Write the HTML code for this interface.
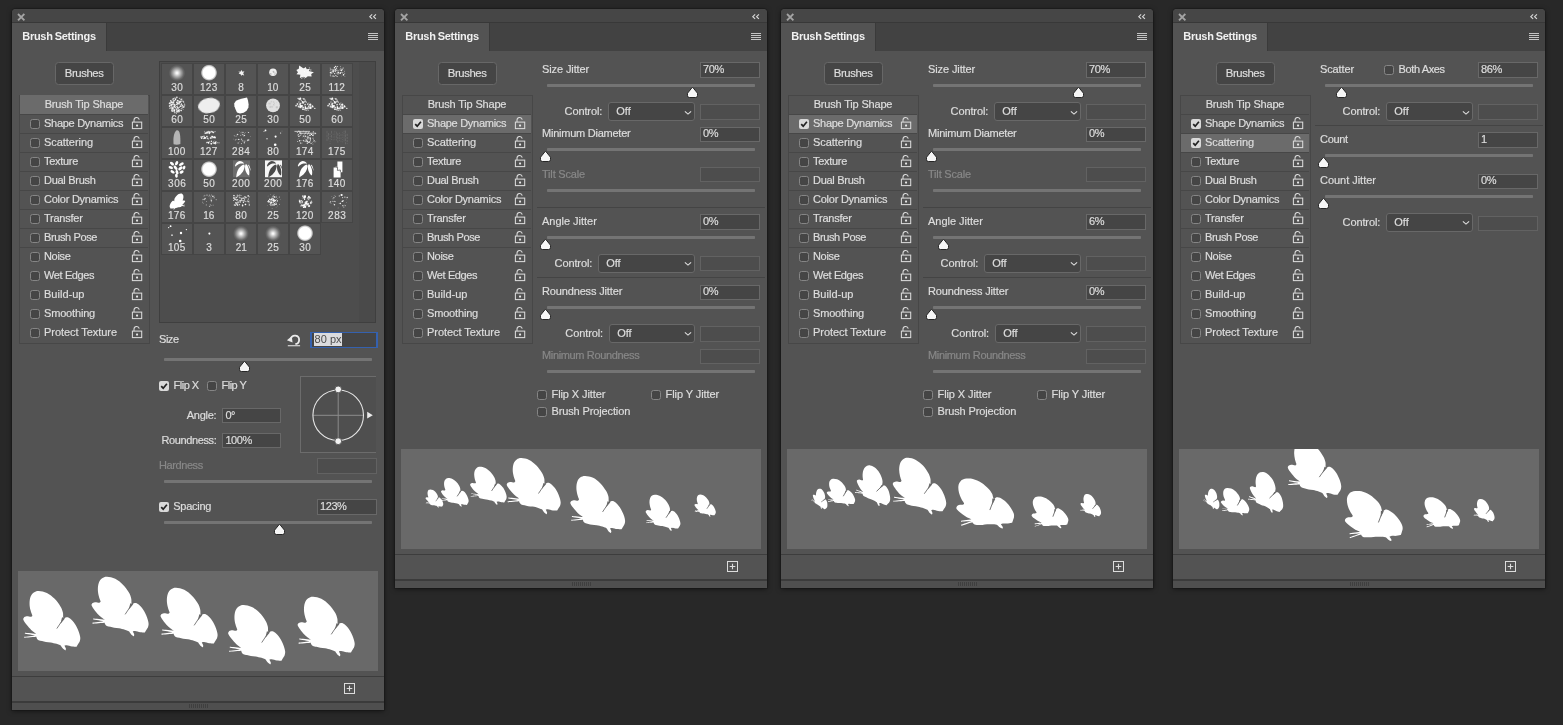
<!DOCTYPE html><html><head><meta charset="utf-8"><title>Brush Settings</title><style>
html,body{margin:0;padding:0}body{width:1563px;height:725px;background:#282828;overflow:hidden;position:relative;font-family:"Liberation Sans",sans-serif;font-size:11px}.a,.t{position:absolute;display:block}div.a{box-sizing:content-box}.t{white-space:nowrap;line-height:13px;-webkit-text-stroke:0.2px;opacity:.999}svg{overflow:visible}
</style></head><body>
<svg width="0" height="0" style="position:absolute"><defs><path id="bf" fill="#fff" d="M-13.00 -29.70C-10.82 -29.62 -7.45 -29.00 -4.80 -27.70C-2.15 -26.40 0.65 -24.15 2.90 -21.90C5.15 -19.65 7.33 -16.45 8.70 -14.20C10.07 -11.95 10.65 -10.10 11.10 -8.40C11.55 -6.70 11.32 -5.13 11.40 -4.00C11.48 -2.87 11.60 -1.60 11.60 -1.60C11.60 -1.60 13.68 -3.40 14.80 -3.50C15.92 -3.60 16.90 -3.32 18.30 -2.20C19.70 -1.08 21.75 1.02 23.20 3.20C24.65 5.38 26.12 8.65 27.00 10.90C27.88 13.15 28.33 15.10 28.50 16.70C28.67 18.30 28.32 19.47 28.00 20.50C27.68 21.53 27.13 22.00 26.60 22.90C26.07 23.80 24.80 25.90 24.80 25.90C24.80 25.90 21.93 25.93 20.30 25.70C18.67 25.47 16.25 24.63 15.00 24.50C13.75 24.37 12.80 24.90 12.80 24.90C12.80 24.90 14.07 27.30 14.20 28.10C14.33 28.90 13.60 29.70 13.60 29.70C13.60 29.70 12.17 28.93 11.40 28.10C10.63 27.27 9.00 24.70 9.00 24.70C9.00 24.70 6.47 23.60 4.80 23.10C3.13 22.60 0.77 22.02 -1.00 21.70C-2.77 21.38 -4.35 21.43 -5.80 21.20C-7.25 20.97 -8.47 20.60 -9.70 20.30C-10.93 20.00 -12.33 19.83 -13.20 19.40C-14.07 18.97 -14.53 18.25 -14.90 17.70C-15.27 17.15 -15.40 16.10 -15.40 16.10C-15.40 16.10 -27.50 17.10 -27.50 17.10C-27.50 17.10 -27.60 16.10 -27.60 16.10C-27.60 16.10 -16.20 14.70 -16.20 14.70C-16.20 14.70 -26.90 13.00 -26.90 13.00C-26.90 13.00 -26.80 12.00 -26.80 12.00C-26.80 12.00 -15.20 13.10 -15.20 13.10C-15.20 13.10 -18.65 10.90 -20.30 9.40C-21.95 7.90 -23.77 5.78 -25.10 4.10C-26.43 2.42 -27.83 0.50 -28.30 -0.70C-28.77 -1.90 -28.43 -2.48 -27.90 -3.10C-27.37 -3.72 -26.32 -4.27 -25.10 -4.40C-23.88 -4.53 -21.55 -3.75 -20.60 -3.90C-19.65 -4.05 -19.40 -5.30 -19.40 -5.30C-19.40 -5.30 -20.73 -8.43 -21.20 -10.40C-21.67 -12.37 -22.20 -14.85 -22.20 -17.10C-22.20 -19.35 -21.92 -22.05 -21.20 -23.90C-20.48 -25.75 -19.27 -27.23 -17.90 -28.20C-16.53 -29.17 -15.18 -29.78 -13.00 -29.70Z"/><radialGradient id="sg"><stop offset="0" stop-color="#fff" stop-opacity="1"/><stop offset=".12" stop-color="#fff" stop-opacity=".92"/><stop offset=".45" stop-color="#fff" stop-opacity=".52"/><stop offset=".8" stop-color="#fff" stop-opacity=".12"/><stop offset="1" stop-color="#fff" stop-opacity="0"/></radialGradient><radialGradient id="hg"><stop offset="0" stop-color="#fff"/><stop offset=".72" stop-color="#fff"/><stop offset=".88" stop-color="#fff" stop-opacity=".6"/><stop offset="1" stop-color="#fff" stop-opacity="0"/></radialGradient><filter id="b2" x="-5%" y="-20%" width="110%" height="140%"><feGaussianBlur stdDeviation=".35"/></filter><filter id="b1" x="-20%" y="-20%" width="140%" height="140%"><feGaussianBlur stdDeviation=".55"/></filter></defs></svg>
<div class="a" style="left:12.45px;top:9px;width:371.1px;height:701.1px;background:#535353;border-radius:4px 4px 0 0;box-shadow:0 1px 5px rgba(0,0,0,.55),0 0 0 1px rgba(30,30,30,.55);"></div>
<div class="a" style="left:12.45px;top:9px;width:371.1px;height:13px;background:#464646;border-radius:4px 4px 0 0;"></div>
<div class="a" style="left:12.45px;top:22px;width:371.1px;height:1px;background:#383838;"></div>
<div class="a" style="left:12.45px;top:23px;width:371.1px;height:28.0px;background:#424242;"></div>
<div class="a" style="left:12.45px;top:23px;width:93.55px;height:28.0px;background:#535353;"></div>
<div class="a" style="left:106px;top:23px;width:1px;height:28.0px;background:#3a3a3a;"></div>
<span class="t" style="top:30.06px;color:#f0f0f0;letter-spacing:-0.3px;font-size:11px;font-weight:bold;left:22.3px;-webkit-text-stroke:0;word-spacing:-0.6px;">Brush Settings</span>
<svg class="a" style="left:17.8px;top:13.9px" width="6.4" height="6.4" viewBox="0 0 6.4 6.4"><path d="M0.7 0.7 L5.7 5.7 M5.7 0.7 L0.7 5.7" stroke="#a4a4a4" stroke-width="1.9" stroke-linecap="square" fill="none"/></svg>
<svg class="a" style="left:369px;top:14.1px" width="7.9" height="5.3" viewBox="0 0 9 6"><path d="M3.6 0.4 L0.9 3 L3.6 5.6 M7.9 0.4 L5.2 3 L7.9 5.6" stroke="#d8d8d8" stroke-width="1.3" fill="none"/></svg>
<div class="a" style="left:368px;top:33px;width:10px;height:1px;background:#c4c4c4;"></div>
<div class="a" style="left:368px;top:35px;width:10px;height:1px;background:#c4c4c4;"></div>
<div class="a" style="left:368px;top:37px;width:10px;height:1px;background:#c4c4c4;"></div>
<div class="a" style="left:368px;top:39px;width:10px;height:1px;background:#c4c4c4;"></div>
<div class="a" style="left:54.6px;top:61.8px;width:57.2px;height:21px;background:#454545;border:1px solid #676767;border-radius:3.5px;"></div>
<span class="t" style="top:66.97px;color:#dddddd;letter-spacing:-0.4px;font-size:11.3px;left:54.599999999999994px;width:59px;text-align:center;">Brushes</span>
<div class="a" style="left:19px;top:94.5px;width:129px;height:247.5px;background:transparent;border:1px solid #474747;"></div>
<div class="a" style="left:20px;top:95px;width:128px;height:19px;background:#6b6b6b;"></div>
<span class="t" style="top:98.06px;color:#dddddd;letter-spacing:-0.18px;font-size:11px;left:20.0px;width:128px;text-align:center;">Brush Tip Shape</span>
<div class="a" style="left:20px;top:113.5px;width:128px;height:1px;background:#474747;"></div>
<svg class="a" style="left:30px;top:118.5px" width="10" height="10" viewBox="0 0 10 10"><rect x="0.5" y="0.5" width="9" height="9" rx="2" fill="#454545" stroke="#858585" stroke-width="1"/></svg>
<span class="t" style="top:117.06px;color:#dddddd;letter-spacing:-0.28px;font-size:11px;left:44px;">Shape Dynamics</span>
<svg class="a" style="left:131px;top:117px" width="12" height="13" viewBox="0 0 12 13"><path d="M3 5 V3.3 A2.65 2.65 0 0 1 8.25 2.7" fill="none" stroke="#dadada" stroke-width="1.05"/><rect x="1.4" y="5.1" width="9.3" height="6.5" fill="none" stroke="#dadada" stroke-width="1.05"/><rect x="5.05" y="7.4" width="2" height="2" rx=".5" fill="#e6e6e6"/></svg>
<div class="a" style="left:20px;top:132.5px;width:128px;height:1px;background:#474747;"></div>
<svg class="a" style="left:30px;top:137.5px" width="10" height="10" viewBox="0 0 10 10"><rect x="0.5" y="0.5" width="9" height="9" rx="2" fill="#454545" stroke="#858585" stroke-width="1"/></svg>
<span class="t" style="top:136.06px;color:#dddddd;letter-spacing:-0.05px;font-size:11px;left:44px;">Scattering</span>
<svg class="a" style="left:131px;top:136px" width="12" height="13" viewBox="0 0 12 13"><path d="M3 5 V3.3 A2.65 2.65 0 0 1 8.25 2.7" fill="none" stroke="#dadada" stroke-width="1.05"/><rect x="1.4" y="5.1" width="9.3" height="6.5" fill="none" stroke="#dadada" stroke-width="1.05"/><rect x="5.05" y="7.4" width="2" height="2" rx=".5" fill="#e6e6e6"/></svg>
<div class="a" style="left:20px;top:151.5px;width:128px;height:1px;background:#474747;"></div>
<svg class="a" style="left:30px;top:156.5px" width="10" height="10" viewBox="0 0 10 10"><rect x="0.5" y="0.5" width="9" height="9" rx="2" fill="#454545" stroke="#858585" stroke-width="1"/></svg>
<span class="t" style="top:155.06px;color:#dddddd;letter-spacing:-0.29px;font-size:11px;left:44px;">Texture</span>
<svg class="a" style="left:131px;top:155px" width="12" height="13" viewBox="0 0 12 13"><path d="M3 5 V3.3 A2.65 2.65 0 0 1 8.25 2.7" fill="none" stroke="#dadada" stroke-width="1.05"/><rect x="1.4" y="5.1" width="9.3" height="6.5" fill="none" stroke="#dadada" stroke-width="1.05"/><rect x="5.05" y="7.4" width="2" height="2" rx=".5" fill="#e6e6e6"/></svg>
<div class="a" style="left:20px;top:170.5px;width:128px;height:1px;background:#474747;"></div>
<svg class="a" style="left:30px;top:175.5px" width="10" height="10" viewBox="0 0 10 10"><rect x="0.5" y="0.5" width="9" height="9" rx="2" fill="#454545" stroke="#858585" stroke-width="1"/></svg>
<span class="t" style="top:174.06px;color:#dddddd;letter-spacing:-0.29px;font-size:11px;left:44px;">Dual Brush</span>
<svg class="a" style="left:131px;top:174px" width="12" height="13" viewBox="0 0 12 13"><path d="M3 5 V3.3 A2.65 2.65 0 0 1 8.25 2.7" fill="none" stroke="#dadada" stroke-width="1.05"/><rect x="1.4" y="5.1" width="9.3" height="6.5" fill="none" stroke="#dadada" stroke-width="1.05"/><rect x="5.05" y="7.4" width="2" height="2" rx=".5" fill="#e6e6e6"/></svg>
<div class="a" style="left:20px;top:189.5px;width:128px;height:1px;background:#474747;"></div>
<svg class="a" style="left:30px;top:194.5px" width="10" height="10" viewBox="0 0 10 10"><rect x="0.5" y="0.5" width="9" height="9" rx="2" fill="#454545" stroke="#858585" stroke-width="1"/></svg>
<span class="t" style="top:193.06px;color:#dddddd;letter-spacing:-0.24px;font-size:11px;left:44px;">Color Dynamics</span>
<svg class="a" style="left:131px;top:193px" width="12" height="13" viewBox="0 0 12 13"><path d="M3 5 V3.3 A2.65 2.65 0 0 1 8.25 2.7" fill="none" stroke="#dadada" stroke-width="1.05"/><rect x="1.4" y="5.1" width="9.3" height="6.5" fill="none" stroke="#dadada" stroke-width="1.05"/><rect x="5.05" y="7.4" width="2" height="2" rx=".5" fill="#e6e6e6"/></svg>
<div class="a" style="left:20px;top:208.5px;width:128px;height:1px;background:#474747;"></div>
<svg class="a" style="left:30px;top:213.5px" width="10" height="10" viewBox="0 0 10 10"><rect x="0.5" y="0.5" width="9" height="9" rx="2" fill="#454545" stroke="#858585" stroke-width="1"/></svg>
<span class="t" style="top:212.06px;color:#dddddd;letter-spacing:-0.25px;font-size:11px;left:44px;">Transfer</span>
<svg class="a" style="left:131px;top:212px" width="12" height="13" viewBox="0 0 12 13"><path d="M3 5 V3.3 A2.65 2.65 0 0 1 8.25 2.7" fill="none" stroke="#dadada" stroke-width="1.05"/><rect x="1.4" y="5.1" width="9.3" height="6.5" fill="none" stroke="#dadada" stroke-width="1.05"/><rect x="5.05" y="7.4" width="2" height="2" rx=".5" fill="#e6e6e6"/></svg>
<div class="a" style="left:20px;top:227.5px;width:128px;height:1px;background:#474747;"></div>
<svg class="a" style="left:30px;top:232.5px" width="10" height="10" viewBox="0 0 10 10"><rect x="0.5" y="0.5" width="9" height="9" rx="2" fill="#454545" stroke="#858585" stroke-width="1"/></svg>
<span class="t" style="top:231.06px;color:#dddddd;letter-spacing:-0.39px;font-size:11px;left:44px;">Brush Pose</span>
<svg class="a" style="left:131px;top:231px" width="12" height="13" viewBox="0 0 12 13"><path d="M3 5 V3.3 A2.65 2.65 0 0 1 8.25 2.7" fill="none" stroke="#dadada" stroke-width="1.05"/><rect x="1.4" y="5.1" width="9.3" height="6.5" fill="none" stroke="#dadada" stroke-width="1.05"/><rect x="5.05" y="7.4" width="2" height="2" rx=".5" fill="#e6e6e6"/></svg>
<div class="a" style="left:20px;top:246.5px;width:128px;height:1px;background:#474747;"></div>
<svg class="a" style="left:30px;top:251.5px" width="10" height="10" viewBox="0 0 10 10"><rect x="0.5" y="0.5" width="9" height="9" rx="2" fill="#454545" stroke="#858585" stroke-width="1"/></svg>
<span class="t" style="top:250.06px;color:#dddddd;letter-spacing:-0.33px;font-size:11px;left:44px;">Noise</span>
<svg class="a" style="left:131px;top:250px" width="12" height="13" viewBox="0 0 12 13"><path d="M3 5 V3.3 A2.65 2.65 0 0 1 8.25 2.7" fill="none" stroke="#dadada" stroke-width="1.05"/><rect x="1.4" y="5.1" width="9.3" height="6.5" fill="none" stroke="#dadada" stroke-width="1.05"/><rect x="5.05" y="7.4" width="2" height="2" rx=".5" fill="#e6e6e6"/></svg>
<svg class="a" style="left:30px;top:270.5px" width="10" height="10" viewBox="0 0 10 10"><rect x="0.5" y="0.5" width="9" height="9" rx="2" fill="#454545" stroke="#858585" stroke-width="1"/></svg>
<span class="t" style="top:269.06px;color:#dddddd;letter-spacing:-0.38px;font-size:11px;left:44px;">Wet Edges</span>
<svg class="a" style="left:131px;top:269px" width="12" height="13" viewBox="0 0 12 13"><path d="M3 5 V3.3 A2.65 2.65 0 0 1 8.25 2.7" fill="none" stroke="#dadada" stroke-width="1.05"/><rect x="1.4" y="5.1" width="9.3" height="6.5" fill="none" stroke="#dadada" stroke-width="1.05"/><rect x="5.05" y="7.4" width="2" height="2" rx=".5" fill="#e6e6e6"/></svg>
<svg class="a" style="left:30px;top:289.5px" width="10" height="10" viewBox="0 0 10 10"><rect x="0.5" y="0.5" width="9" height="9" rx="2" fill="#454545" stroke="#858585" stroke-width="1"/></svg>
<span class="t" style="top:288.06px;color:#dddddd;letter-spacing:0.01px;font-size:11px;left:44px;">Build-up</span>
<svg class="a" style="left:131px;top:288px" width="12" height="13" viewBox="0 0 12 13"><path d="M3 5 V3.3 A2.65 2.65 0 0 1 8.25 2.7" fill="none" stroke="#dadada" stroke-width="1.05"/><rect x="1.4" y="5.1" width="9.3" height="6.5" fill="none" stroke="#dadada" stroke-width="1.05"/><rect x="5.05" y="7.4" width="2" height="2" rx=".5" fill="#e6e6e6"/></svg>
<svg class="a" style="left:30px;top:308.5px" width="10" height="10" viewBox="0 0 10 10"><rect x="0.5" y="0.5" width="9" height="9" rx="2" fill="#454545" stroke="#858585" stroke-width="1"/></svg>
<span class="t" style="top:307.06px;color:#dddddd;letter-spacing:-0.17px;font-size:11px;left:44px;">Smoothing</span>
<svg class="a" style="left:131px;top:307px" width="12" height="13" viewBox="0 0 12 13"><path d="M3 5 V3.3 A2.65 2.65 0 0 1 8.25 2.7" fill="none" stroke="#dadada" stroke-width="1.05"/><rect x="1.4" y="5.1" width="9.3" height="6.5" fill="none" stroke="#dadada" stroke-width="1.05"/><rect x="5.05" y="7.4" width="2" height="2" rx=".5" fill="#e6e6e6"/></svg>
<svg class="a" style="left:30px;top:327.5px" width="10" height="10" viewBox="0 0 10 10"><rect x="0.5" y="0.5" width="9" height="9" rx="2" fill="#454545" stroke="#858585" stroke-width="1"/></svg>
<span class="t" style="top:326.06px;color:#dddddd;letter-spacing:-0.05px;font-size:11px;left:44px;">Protect Texture</span>
<svg class="a" style="left:131px;top:326px" width="12" height="13" viewBox="0 0 12 13"><path d="M3 5 V3.3 A2.65 2.65 0 0 1 8.25 2.7" fill="none" stroke="#dadada" stroke-width="1.05"/><rect x="1.4" y="5.1" width="9.3" height="6.5" fill="none" stroke="#dadada" stroke-width="1.05"/><rect x="5.05" y="7.4" width="2" height="2" rx=".5" fill="#e6e6e6"/></svg>
<div class="a" style="left:18px;top:571px;width:360px;height:100px;background:#696969;"></div>
<div class="a" style="left:12.45px;top:676px;width:371.1px;height:1px;background:#3d3d3d;"></div>
<div class="a" style="left:12.45px;top:701px;width:371.1px;height:2px;background:#3b3b3b;"></div>
<div class="a" style="left:12.45px;top:703px;width:371.1px;height:7.1px;background:#4f4f4f;"></div>
<div class="a" style="left:188.5px;top:704px;width:1px;height:4px;background:#3f3f3f;"></div>
<div class="a" style="left:190.5px;top:704px;width:1px;height:4px;background:#3f3f3f;"></div>
<div class="a" style="left:192.5px;top:704px;width:1px;height:4px;background:#3f3f3f;"></div>
<div class="a" style="left:194.5px;top:704px;width:1px;height:4px;background:#3f3f3f;"></div>
<div class="a" style="left:196.5px;top:704px;width:1px;height:4px;background:#3f3f3f;"></div>
<div class="a" style="left:198.5px;top:704px;width:1px;height:4px;background:#3f3f3f;"></div>
<div class="a" style="left:200.5px;top:704px;width:1px;height:4px;background:#3f3f3f;"></div>
<div class="a" style="left:202.5px;top:704px;width:1px;height:4px;background:#3f3f3f;"></div>
<div class="a" style="left:204.5px;top:704px;width:1px;height:4px;background:#3f3f3f;"></div>
<div class="a" style="left:206.5px;top:704px;width:1px;height:4px;background:#3f3f3f;"></div>
<svg class="a" style="left:343.6px;top:683px" width="11" height="11" viewBox="0 0 11 11"><rect x="0.5" y="0.5" width="10" height="10" fill="none" stroke="#dcdcdc" stroke-width="1"/><path d="M5.5 2.7 V8.3 M2.7 5.5 H8.3" stroke="#dcdcdc" stroke-width="1.1"/></svg>
<div class="a" style="left:159px;top:61px;width:215px;height:260px;background:#4d4d4d;border:1px solid #3f3f3f;"></div>
<div class="a" style="left:358.5px;top:62px;width:16.5px;height:260px;background:#4a4a4a;"></div>
<div class="a" style="left:162px;top:64px;width:30px;height:30px;background:#545454;box-shadow:0 0 0 1px #454545;"></div>
<span class="t" style="top:81.29px;color:#dcdcdc;letter-spacing:0.5px;font-size:10px;left:162.2px;width:30px;text-align:center;">30</span>
<svg class="a" style="left:162px;top:64.6px" width="30" height="18" viewBox="0 0 30 18"><circle cx="15" cy="8" r="8.3" fill="url(#sg)"/></svg>
<div class="a" style="left:194px;top:64px;width:30px;height:30px;background:#545454;box-shadow:0 0 0 1px #454545;"></div>
<span class="t" style="top:81.29px;color:#dcdcdc;letter-spacing:0.5px;font-size:10px;left:194.2px;width:30px;text-align:center;"><span style="margin:0 -0.5px">1</span>23</span>
<svg class="a" style="left:194px;top:64.6px" width="30" height="18" viewBox="0 0 30 18"><circle cx="15" cy="7.7" r="8.3" fill="url(#hg)"/></svg>
<div class="a" style="left:226px;top:64px;width:30px;height:30px;background:#545454;box-shadow:0 0 0 1px #454545;"></div>
<span class="t" style="top:81.29px;color:#dcdcdc;letter-spacing:0.5px;font-size:10px;left:226.2px;width:30px;text-align:center;">8</span>
<svg class="a" style="left:226px;top:64.6px" width="30" height="18" viewBox="0 0 30 18"><polygon points="12.2,6.6 14.4,6.8 15.6,5 16.4,6.8 18.4,6.2 17.2,8.2 18.2,10.6 16,9.8 15.4,11 14.6,9.2 12.6,8.4 13.8,7.6" fill="#fff" opacity=".92"/></svg>
<div class="a" style="left:258px;top:64px;width:30px;height:30px;background:#545454;box-shadow:0 0 0 1px #454545;"></div>
<span class="t" style="top:81.29px;color:#dcdcdc;letter-spacing:0.5px;font-size:10px;left:258.2px;width:30px;text-align:center;"><span style="margin:0 -0.5px">1</span>0</span>
<svg class="a" style="left:258px;top:64.6px" width="30" height="18" viewBox="0 0 30 18"><circle cx="15" cy="7.3" r="3.8" fill="#fff" opacity=".9"/><circle cx="15.4" cy="6.9" r="0.57" fill="#9a9a9a" opacity="0.68"/><circle cx="16.9" cy="9.2" r="0.60" fill="#9a9a9a" opacity="0.66"/><circle cx="15.1" cy="6.3" r="0.47" fill="#9a9a9a" opacity="0.98"/><circle cx="17.2" cy="7.9" r="0.51" fill="#9a9a9a" opacity="0.71"/><circle cx="16.0" cy="7.0" r="0.61" fill="#9a9a9a" opacity="0.86"/><circle cx="12.8" cy="8.9" r="0.69" fill="#9a9a9a" opacity="0.99"/></svg>
<div class="a" style="left:290px;top:64px;width:30px;height:30px;background:#545454;box-shadow:0 0 0 1px #454545;"></div>
<span class="t" style="top:81.29px;color:#dcdcdc;letter-spacing:0.5px;font-size:10px;left:290.2px;width:30px;text-align:center;">25</span>
<svg class="a" style="left:290px;top:64.6px" width="30" height="18" viewBox="0 0 30 18"><g transform="translate(15 7.4) scale(1.35 1) translate(-15 -7.4)"><polygon points="21.6,7.2 19.6,9.0 19.9,11.6 16.9,11.2 15.6,13.0 13.8,11.8 11.2,13.0 11.6,9.8 8.7,9.3 9.8,7.2 8.6,5.0 10.4,3.7 10.7,0.4 14.0,3.6 15.5,1.9 16.3,4.2 18.7,3.8 17.8,6.0" fill="#fff" opacity="0.95"/></g><circle cx="14.3" cy="6.7" r="0.64" fill="#fff" opacity="0.81"/><circle cx="17.7" cy="7.5" r="0.56" fill="#fff" opacity="0.78"/><circle cx="18.9" cy="5.1" r="0.39" fill="#fff" opacity="0.72"/><circle cx="13.1" cy="12.0" r="0.45" fill="#fff" opacity="0.98"/><circle cx="14.4" cy="13.7" r="0.46" fill="#fff" opacity="0.63"/><circle cx="17.5" cy="11.1" r="0.41" fill="#fff" opacity="0.63"/><circle cx="11.8" cy="13.5" r="0.60" fill="#fff" opacity="0.65"/><circle cx="10.2" cy="2.3" r="0.32" fill="#fff" opacity="0.92"/><circle cx="8.9" cy="8.3" r="0.48" fill="#fff" opacity="0.68"/><circle cx="19.4" cy="2.7" r="0.56" fill="#fff" opacity="0.65"/><circle cx="13.5" cy="3.8" r="0.41" fill="#fff" opacity="0.99"/><circle cx="20.8" cy="5.0" r="0.65" fill="#fff" opacity="0.68"/><circle cx="13.0" cy="12.1" r="0.56" fill="#fff" opacity="0.64"/><circle cx="10.4" cy="11.0" r="0.43" fill="#fff" opacity="0.72"/></svg>
<div class="a" style="left:322px;top:64px;width:30px;height:30px;background:#545454;box-shadow:0 0 0 1px #454545;"></div>
<span class="t" style="top:81.29px;color:#dcdcdc;letter-spacing:0.5px;font-size:10px;left:322.2px;width:30px;text-align:center;"><span style="margin:0 -0.5px">1</span><span style="margin:0 -0.5px">1</span>2</span>
<svg class="a" style="left:322px;top:64.6px" width="30" height="18" viewBox="0 0 30 18"><circle cx="15.1" cy="8.2" r="0.65" fill="#fff" opacity="0.53"/><circle cx="8.1" cy="5.1" r="0.47" fill="#fff" opacity="0.90"/><circle cx="18.4" cy="7.6" r="0.60" fill="#fff" opacity="0.81"/><circle cx="10.1" cy="5.9" r="0.42" fill="#fff" opacity="0.95"/><circle cx="8.8" cy="9.9" r="0.38" fill="#fff" opacity="0.83"/><circle cx="13.0" cy="5.5" r="0.73" fill="#fff" opacity="0.46"/><circle cx="8.8" cy="11.0" r="0.58" fill="#fff" opacity="0.50"/><circle cx="22.9" cy="11.3" r="0.40" fill="#fff" opacity="0.68"/><circle cx="10.0" cy="4.5" r="0.63" fill="#fff" opacity="0.54"/><circle cx="18.5" cy="1.7" r="0.43" fill="#fff" opacity="0.90"/><circle cx="14.0" cy="5.6" r="0.62" fill="#fff" opacity="0.71"/><circle cx="13.7" cy="1.4" r="0.68" fill="#fff" opacity="0.98"/><circle cx="22.7" cy="8.3" r="0.51" fill="#fff" opacity="0.65"/><circle cx="18.4" cy="8.4" r="0.40" fill="#fff" opacity="0.58"/><circle cx="13.4" cy="6.6" r="0.71" fill="#fff" opacity="0.73"/><circle cx="8.3" cy="10.0" r="0.54" fill="#fff" opacity="0.74"/><circle cx="11.3" cy="5.7" r="0.52" fill="#fff" opacity="0.87"/><circle cx="9.5" cy="7.0" r="0.43" fill="#fff" opacity="0.83"/><circle cx="8.5" cy="4.1" r="0.50" fill="#fff" opacity="0.80"/><circle cx="8.7" cy="6.1" r="0.44" fill="#fff" opacity="0.61"/><circle cx="15.1" cy="11.5" r="0.57" fill="#fff" opacity="0.98"/><circle cx="10.4" cy="11.1" r="0.51" fill="#fff" opacity="0.55"/><circle cx="19.3" cy="11.0" r="0.35" fill="#fff" opacity="0.60"/><circle cx="19.6" cy="4.8" r="0.46" fill="#fff" opacity="0.45"/><circle cx="8.5" cy="7.8" r="0.79" fill="#fff" opacity="1.00"/><circle cx="15.6" cy="1.4" r="0.50" fill="#fff" opacity="0.88"/><circle cx="20.5" cy="8.0" r="0.45" fill="#fff" opacity="0.74"/><circle cx="15.2" cy="7.9" r="0.47" fill="#fff" opacity="0.97"/><circle cx="21.5" cy="2.9" r="0.48" fill="#fff" opacity="0.93"/><circle cx="12.1" cy="11.3" r="0.58" fill="#fff" opacity="0.83"/><circle cx="18.6" cy="3.4" r="0.48" fill="#fff" opacity="0.59"/><circle cx="18.3" cy="8.6" r="0.41" fill="#fff" opacity="0.94"/><circle cx="14.3" cy="3.7" r="0.55" fill="#fff" opacity="0.99"/><circle cx="16.4" cy="7.8" r="0.76" fill="#fff" opacity="0.98"/><circle cx="19.5" cy="5.6" r="0.61" fill="#fff" opacity="0.95"/><circle cx="19.9" cy="7.4" r="0.51" fill="#fff" opacity="0.65"/><circle cx="19.1" cy="7.2" r="0.36" fill="#fff" opacity="0.84"/><circle cx="21.6" cy="9.7" r="0.75" fill="#fff" opacity="0.95"/><circle cx="16.0" cy="9.6" r="0.52" fill="#fff" opacity="0.50"/><circle cx="13.3" cy="4.5" r="0.77" fill="#fff" opacity="0.83"/><circle cx="16.1" cy="7.8" r="0.41" fill="#fff" opacity="0.74"/><circle cx="18.5" cy="5.4" r="0.46" fill="#fff" opacity="0.67"/><circle cx="12.8" cy="8.5" r="0.41" fill="#fff" opacity="0.50"/><circle cx="12.6" cy="8.6" r="0.69" fill="#fff" opacity="0.81"/><circle cx="22.1" cy="5.0" r="0.36" fill="#fff" opacity="0.72"/><circle cx="14.6" cy="3.0" r="0.65" fill="#fff" opacity="0.64"/><circle cx="11.5" cy="4.6" r="0.77" fill="#fff" opacity="0.45"/><circle cx="13.4" cy="4.1" r="0.44" fill="#fff" opacity="0.69"/><circle cx="11.2" cy="11.0" r="0.58" fill="#fff" opacity="0.83"/><circle cx="10.4" cy="6.1" r="0.62" fill="#fff" opacity="0.91"/><circle cx="11.7" cy="6.1" r="0.73" fill="#fff" opacity="0.91"/><circle cx="11.4" cy="6.9" r="0.69" fill="#fff" opacity="0.67"/><circle cx="18.1" cy="8.3" r="0.79" fill="#fff" opacity="0.75"/><circle cx="18.2" cy="4.9" r="0.68" fill="#fff" opacity="0.63"/><circle cx="15.5" cy="5.0" r="0.49" fill="#fff" opacity="0.52"/><circle cx="11.3" cy="7.0" r="0.46" fill="#fff" opacity="0.48"/><circle cx="20.1" cy="4.2" r="0.77" fill="#fff" opacity="0.78"/><circle cx="13.8" cy="10.5" r="0.75" fill="#fff" opacity="0.63"/><circle cx="9.8" cy="8.0" r="0.73" fill="#fff" opacity="0.78"/><circle cx="19.8" cy="5.6" r="0.63" fill="#fff" opacity="0.59"/><circle cx="14.1" cy="5.2" r="0.52" fill="#fff" opacity="0.67"/><circle cx="20.2" cy="2.9" r="0.44" fill="#fff" opacity="0.59"/><circle cx="22.7" cy="6.7" r="0.37" fill="#fff" opacity="0.91"/><circle cx="21.2" cy="10.0" r="0.51" fill="#fff" opacity="0.85"/><circle cx="12.5" cy="2.6" r="0.74" fill="#fff" opacity="0.91"/><circle cx="11.1" cy="10.6" r="0.36" fill="#fff" opacity="0.62"/><circle cx="8.1" cy="2.9" r="0.42" fill="#fff" opacity="0.84"/><circle cx="12.4" cy="3.2" r="0.43" fill="#fff" opacity="0.62"/><circle cx="21.0" cy="7.7" r="0.40" fill="#fff" opacity="0.83"/><circle cx="16.1" cy="5.9" r="0.59" fill="#fff" opacity="0.81"/></svg>
<div class="a" style="left:162px;top:96px;width:30px;height:30px;background:#545454;box-shadow:0 0 0 1px #454545;"></div>
<span class="t" style="top:113.29px;color:#dcdcdc;letter-spacing:0.5px;font-size:10px;left:162.2px;width:30px;text-align:center;">60</span>
<svg class="a" style="left:162px;top:96.6px" width="30" height="18" viewBox="0 0 30 18"><circle cx="15.4" cy="13.2" r="0.78" fill="#fff" opacity="0.72"/><circle cx="19.3" cy="11.6" r="0.66" fill="#fff" opacity="0.64"/><circle cx="7.4" cy="6.4" r="0.70" fill="#fff" opacity="0.70"/><circle cx="15.0" cy="5.4" r="0.74" fill="#fff" opacity="0.98"/><circle cx="18.3" cy="9.2" r="0.78" fill="#fff" opacity="0.68"/><circle cx="15.6" cy="14.4" r="0.66" fill="#fff" opacity="0.72"/><circle cx="14.6" cy="16.2" r="0.46" fill="#fff" opacity="0.92"/><circle cx="7.3" cy="6.3" r="0.42" fill="#fff" opacity="0.90"/><circle cx="12.7" cy="15.7" r="0.55" fill="#fff" opacity="0.91"/><circle cx="20.9" cy="4.1" r="0.62" fill="#fff" opacity="0.98"/><circle cx="15.4" cy="6.1" r="0.51" fill="#fff" opacity="0.91"/><circle cx="10.1" cy="10.0" r="0.62" fill="#fff" opacity="0.82"/><circle cx="9.1" cy="10.8" r="0.77" fill="#fff" opacity="0.73"/><circle cx="12.3" cy="14.8" r="0.63" fill="#fff" opacity="0.71"/><circle cx="12.6" cy="7.8" r="0.51" fill="#fff" opacity="0.85"/><circle cx="18.7" cy="5.3" r="0.43" fill="#fff" opacity="0.99"/><circle cx="16.0" cy="11.3" r="0.56" fill="#fff" opacity="0.89"/><circle cx="22.4" cy="9.7" r="0.56" fill="#fff" opacity="0.68"/><circle cx="11.0" cy="2.7" r="0.44" fill="#fff" opacity="0.68"/><circle cx="20.5" cy="8.9" r="0.72" fill="#fff" opacity="0.97"/><circle cx="19.3" cy="13.7" r="0.66" fill="#fff" opacity="0.76"/><circle cx="17.2" cy="4.2" r="0.61" fill="#fff" opacity="0.71"/><circle cx="9.6" cy="5.0" r="0.69" fill="#fff" opacity="0.79"/><circle cx="13.3" cy="8.1" r="0.62" fill="#fff" opacity="0.81"/><circle cx="14.1" cy="15.8" r="0.70" fill="#fff" opacity="0.69"/><circle cx="12.1" cy="3.3" r="0.55" fill="#fff" opacity="0.61"/><circle cx="18.9" cy="9.4" r="0.57" fill="#fff" opacity="0.96"/><circle cx="12.3" cy="9.6" r="0.77" fill="#fff" opacity="0.82"/><circle cx="16.8" cy="6.2" r="0.80" fill="#fff" opacity="0.90"/><circle cx="11.9" cy="6.0" r="0.64" fill="#fff" opacity="0.81"/><circle cx="15.4" cy="3.4" r="0.63" fill="#fff" opacity="0.88"/><circle cx="19.2" cy="7.5" r="0.58" fill="#fff" opacity="0.80"/><circle cx="15.6" cy="7.9" r="0.40" fill="#fff" opacity="0.71"/><circle cx="14.5" cy="12.3" r="0.48" fill="#fff" opacity="0.71"/><circle cx="15.3" cy="11.5" r="0.41" fill="#fff" opacity="0.79"/><circle cx="21.5" cy="10.1" r="0.80" fill="#fff" opacity="0.64"/><circle cx="7.4" cy="8.9" r="0.70" fill="#fff" opacity="0.69"/><circle cx="17.4" cy="13.9" r="0.72" fill="#fff" opacity="0.77"/><circle cx="7.9" cy="8.9" r="0.48" fill="#fff" opacity="0.82"/><circle cx="11.3" cy="5.9" r="0.62" fill="#fff" opacity="0.93"/><circle cx="22.6" cy="6.8" r="0.40" fill="#fff" opacity="0.90"/><circle cx="12.4" cy="12.4" r="0.73" fill="#fff" opacity="0.61"/><circle cx="18.7" cy="4.9" r="0.53" fill="#fff" opacity="0.73"/><circle cx="15.6" cy="4.2" r="0.60" fill="#fff" opacity="0.71"/><circle cx="9.0" cy="4.3" r="0.67" fill="#fff" opacity="0.72"/><circle cx="10.2" cy="6.1" r="0.49" fill="#fff" opacity="0.99"/><circle cx="19.6" cy="2.7" r="0.52" fill="#fff" opacity="0.77"/><circle cx="15.4" cy="6.5" r="0.61" fill="#fff" opacity="0.90"/><circle cx="9.5" cy="9.2" r="0.47" fill="#fff" opacity="0.81"/><circle cx="12.1" cy="13.2" r="0.75" fill="#fff" opacity="0.98"/><circle cx="13.5" cy="10.2" r="0.47" fill="#fff" opacity="0.88"/><circle cx="19.4" cy="7.1" r="0.53" fill="#fff" opacity="0.90"/><circle cx="19.0" cy="13.1" r="0.52" fill="#fff" opacity="0.70"/><circle cx="11.0" cy="3.4" r="0.40" fill="#fff" opacity="0.65"/><circle cx="14.9" cy="7.2" r="0.76" fill="#fff" opacity="0.75"/><circle cx="8.2" cy="5.7" r="0.71" fill="#fff" opacity="0.73"/><circle cx="11.9" cy="14.1" r="0.77" fill="#fff" opacity="0.81"/><circle cx="17.5" cy="12.7" r="0.72" fill="#fff" opacity="0.69"/><circle cx="10.4" cy="14.2" r="0.74" fill="#fff" opacity="0.77"/><circle cx="11.3" cy="1.6" r="0.56" fill="#fff" opacity="0.96"/><circle cx="10.3" cy="5.4" r="0.41" fill="#fff" opacity="0.83"/><circle cx="8.0" cy="11.1" r="0.60" fill="#fff" opacity="0.77"/><circle cx="11.1" cy="5.1" r="0.76" fill="#fff" opacity="0.98"/><circle cx="19.0" cy="3.7" r="0.48" fill="#fff" opacity="0.75"/><circle cx="10.7" cy="10.4" r="0.55" fill="#fff" opacity="0.78"/><circle cx="10.2" cy="11.8" r="0.71" fill="#fff" opacity="0.98"/><circle cx="14.7" cy="7.4" r="0.66" fill="#fff" opacity="0.65"/><circle cx="21.1" cy="12.6" r="0.49" fill="#fff" opacity="0.76"/><circle cx="14.8" cy="13.9" r="0.68" fill="#fff" opacity="0.70"/><circle cx="20.7" cy="8.2" r="0.59" fill="#fff" opacity="0.76"/><circle cx="22.6" cy="8.0" r="0.78" fill="#fff" opacity="0.67"/><circle cx="7.5" cy="7.9" r="0.48" fill="#fff" opacity="0.70"/><circle cx="14.1" cy="1.7" r="0.52" fill="#fff" opacity="0.85"/><circle cx="11.2" cy="5.3" r="0.55" fill="#fff" opacity="0.71"/><circle cx="16.0" cy="12.7" r="0.41" fill="#fff" opacity="0.81"/><circle cx="15.6" cy="15.0" r="0.68" fill="#fff" opacity="0.71"/><circle cx="16.9" cy="14.7" r="0.78" fill="#fff" opacity="0.91"/><circle cx="8.7" cy="6.3" r="0.59" fill="#fff" opacity="0.73"/><circle cx="19.1" cy="8.2" r="0.79" fill="#fff" opacity="0.60"/><circle cx="19.9" cy="2.1" r="0.61" fill="#fff" opacity="0.66"/><circle cx="13.1" cy="10.1" r="0.78" fill="#fff" opacity="0.62"/><circle cx="13.3" cy="2.1" r="0.70" fill="#fff" opacity="0.66"/><circle cx="10.2" cy="13.2" r="0.42" fill="#fff" opacity="0.95"/><circle cx="14.6" cy="5.2" r="0.66" fill="#fff" opacity="0.72"/><circle cx="14.4" cy="14.3" r="0.61" fill="#fff" opacity="0.73"/><circle cx="14.3" cy="12.6" r="0.75" fill="#fff" opacity="0.64"/><circle cx="17.3" cy="5.1" r="0.77" fill="#fff" opacity="0.89"/><circle cx="16.4" cy="11.0" r="0.70" fill="#fff" opacity="0.63"/><circle cx="12.2" cy="0.9" r="0.46" fill="#fff" opacity="0.97"/><circle cx="16.2" cy="3.5" r="0.52" fill="#fff" opacity="0.77"/><circle cx="13.1" cy="1.2" r="0.61" fill="#fff" opacity="0.77"/><circle cx="19.2" cy="4.5" r="0.50" fill="#fff" opacity="0.80"/><circle cx="13.5" cy="2.4" r="0.69" fill="#fff" opacity="0.95"/><circle cx="20.3" cy="10.8" r="0.59" fill="#fff" opacity="0.92"/><circle cx="10.4" cy="1.9" r="0.48" fill="#fff" opacity="0.81"/><circle cx="10.3" cy="7.3" r="0.73" fill="#fff" opacity="0.85"/><circle cx="10.2" cy="2.2" r="0.40" fill="#fff" opacity="0.62"/><circle cx="11.2" cy="11.7" r="0.73" fill="#fff" opacity="0.75"/><circle cx="7.7" cy="9.3" r="0.78" fill="#fff" opacity="0.61"/><circle cx="12.2" cy="9.8" r="0.72" fill="#fff" opacity="0.87"/><circle cx="9.8" cy="12.9" r="0.63" fill="#fff" opacity="0.86"/><circle cx="16.6" cy="13.5" r="0.63" fill="#fff" opacity="0.97"/><circle cx="9.2" cy="8.4" r="0.69" fill="#fff" opacity="0.97"/><circle cx="13.1" cy="10.8" r="0.56" fill="#fff" opacity="0.71"/><circle cx="10.2" cy="11.7" r="0.64" fill="#fff" opacity="0.98"/><circle cx="12.2" cy="7.9" r="0.78" fill="#fff" opacity="0.88"/><circle cx="11.2" cy="12.0" r="0.58" fill="#fff" opacity="0.64"/><circle cx="8.7" cy="8.3" r="0.52" fill="#fff" opacity="0.70"/><circle cx="18.6" cy="4.4" r="0.58" fill="#fff" opacity="0.80"/><circle cx="11.3" cy="2.9" r="0.61" fill="#fff" opacity="0.69"/><circle cx="7.6" cy="6.0" r="0.53" fill="#fff" opacity="0.68"/><circle cx="9.8" cy="13.8" r="0.63" fill="#fff" opacity="0.84"/><circle cx="17.5" cy="6.9" r="0.53" fill="#fff" opacity="0.82"/><circle cx="16.3" cy="13.8" r="0.42" fill="#fff" opacity="0.64"/><circle cx="17.0" cy="4.8" r="0.63" fill="#fff" opacity="0.75"/><circle cx="10.0" cy="5.6" r="0.70" fill="#fff" opacity="0.97"/><circle cx="12.1" cy="4.0" r="0.58" fill="#fff" opacity="0.93"/><circle cx="17.4" cy="10.3" r="0.68" fill="#fff" opacity="0.69"/><circle cx="16.1" cy="7.1" r="0.75" fill="#fff" opacity="0.72"/><circle cx="15.7" cy="10.4" r="0.68" fill="#fff" opacity="0.91"/><circle cx="19.0" cy="2.4" r="0.79" fill="#fff" opacity="0.61"/><circle cx="18.7" cy="5.2" r="0.44" fill="#fff" opacity="0.74"/><circle cx="8.8" cy="3.7" r="0.79" fill="#fff" opacity="0.92"/><circle cx="12.9" cy="8.2" r="0.64" fill="#fff" opacity="0.73"/><circle cx="9.2" cy="7.4" r="0.74" fill="#fff" opacity="0.98"/><circle cx="16.7" cy="13.1" r="0.57" fill="#fff" opacity="0.91"/><circle cx="10.1" cy="8.7" r="0.43" fill="#fff" opacity="0.83"/><circle cx="14.6" cy="9.8" r="0.61" fill="#fff" opacity="0.74"/><circle cx="9.3" cy="5.4" r="0.71" fill="#fff" opacity="0.71"/><circle cx="11.2" cy="7.5" r="0.72" fill="#fff" opacity="0.60"/><circle cx="19.3" cy="6.8" r="0.67" fill="#fff" opacity="0.60"/><circle cx="17.4" cy="1.2" r="0.51" fill="#fff" opacity="0.85"/><circle cx="17.1" cy="6.1" r="0.50" fill="#fff" opacity="0.75"/><circle cx="11.8" cy="3.9" r="0.50" fill="#fff" opacity="0.80"/><circle cx="19.0" cy="13.5" r="0.56" fill="#fff" opacity="0.98"/><circle cx="12.6" cy="13.7" r="0.73" fill="#fff" opacity="0.90"/><circle cx="21.6" cy="10.0" r="0.75" fill="#fff" opacity="0.71"/><circle cx="15.1" cy="9.4" r="0.61" fill="#fff" opacity="0.62"/><circle cx="11.1" cy="10.4" r="0.55" fill="#fff" opacity="0.88"/><circle cx="18.7" cy="9.1" r="0.45" fill="#fff" opacity="0.78"/><circle cx="21.8" cy="5.3" r="0.44" fill="#fff" opacity="0.91"/><circle cx="12.9" cy="3.5" r="0.61" fill="#fff" opacity="0.97"/><circle cx="16.0" cy="3.7" r="0.40" fill="#fff" opacity="0.77"/><circle cx="21.6" cy="4.8" r="0.65" fill="#fff" opacity="0.82"/><circle cx="15.5" cy="9.0" r="0.49" fill="#fff" opacity="0.66"/><circle cx="7.9" cy="11.3" r="0.47" fill="#fff" opacity="0.95"/><circle cx="17.4" cy="5.2" r="0.76" fill="#fff" opacity="0.64"/><circle cx="10.2" cy="13.0" r="0.55" fill="#fff" opacity="0.96"/><circle cx="14.9" cy="0.3" r="0.77" fill="#fff" opacity="1.00"/><circle cx="14.2" cy="11.7" r="0.67" fill="#fff" opacity="0.64"/></svg>
<div class="a" style="left:194px;top:96px;width:30px;height:30px;background:#545454;box-shadow:0 0 0 1px #454545;"></div>
<span class="t" style="top:113.29px;color:#dcdcdc;letter-spacing:0.5px;font-size:10px;left:194.2px;width:30px;text-align:center;">50</span>
<svg class="a" style="left:194px;top:96.6px" width="30" height="18" viewBox="0 0 30 18"><ellipse cx="15" cy="8.6" rx="11" ry="7.5" fill="#fff" opacity=".9" transform="rotate(-10 15 8.6)" filter="url(#b1)"/></svg>
<div class="a" style="left:226px;top:96px;width:30px;height:30px;background:#545454;box-shadow:0 0 0 1px #454545;"></div>
<span class="t" style="top:113.29px;color:#dcdcdc;letter-spacing:0.5px;font-size:10px;left:226.2px;width:30px;text-align:center;">25</span>
<svg class="a" style="left:226px;top:96.6px" width="30" height="18" viewBox="0 0 30 18"><polygon points="8.2,6.4 10,3.8 13,2.6 17.6,1.2 21,0.6 22,3.4 22.6,7.2 22.4,10.6 20.6,13.8 17.6,15.8 14,16.6 11,15.4 9.4,12 8.4,9.2" fill="#fff"/></svg>
<div class="a" style="left:258px;top:96px;width:30px;height:30px;background:#545454;box-shadow:0 0 0 1px #454545;"></div>
<span class="t" style="top:113.29px;color:#dcdcdc;letter-spacing:0.5px;font-size:10px;left:258.2px;width:30px;text-align:center;">30</span>
<svg class="a" style="left:258px;top:96.6px" width="30" height="18" viewBox="0 0 30 18"><circle cx="15" cy="8.4" r="6.9" fill="#fff" opacity=".82" filter="url(#b1)"/><circle cx="19.1" cy="10.3" r="0.96" fill="#bbb" opacity="0.57"/><circle cx="12.6" cy="9.8" r="1.04" fill="#bbb" opacity="0.56"/><circle cx="15.7" cy="5.1" r="0.75" fill="#bbb" opacity="0.60"/><circle cx="11.0" cy="6.6" r="1.07" fill="#bbb" opacity="0.43"/><circle cx="12.1" cy="6.6" r="1.05" fill="#bbb" opacity="0.40"/><circle cx="14.3" cy="9.7" r="0.98" fill="#bbb" opacity="0.45"/><circle cx="10.8" cy="9.1" r="0.52" fill="#bbb" opacity="0.33"/><circle cx="11.9" cy="10.3" r="0.67" fill="#bbb" opacity="0.51"/><circle cx="18.6" cy="5.6" r="0.64" fill="#bbb" opacity="0.30"/><circle cx="16.4" cy="6.4" r="0.58" fill="#bbb" opacity="0.49"/><circle cx="16.0" cy="7.9" r="0.59" fill="#bbb" opacity="0.49"/><circle cx="15.6" cy="7.7" r="0.60" fill="#bbb" opacity="0.58"/><circle cx="18.6" cy="10.3" r="1.10" fill="#bbb" opacity="0.47"/><circle cx="13.4" cy="4.6" r="0.86" fill="#bbb" opacity="0.46"/></svg>
<div class="a" style="left:290px;top:96px;width:30px;height:30px;background:#545454;box-shadow:0 0 0 1px #454545;"></div>
<span class="t" style="top:113.29px;color:#dcdcdc;letter-spacing:0.5px;font-size:10px;left:290.2px;width:30px;text-align:center;">50</span>
<svg class="a" style="left:290px;top:96.6px" width="30" height="18" viewBox="0 0 30 18"><g transform="rotate(12 15 8.5)"><circle cx="13.0" cy="6.5" r="0.54" fill="#fff" opacity="0.66"/><circle cx="20.4" cy="6.9" r="0.64" fill="#fff" opacity="0.86"/><circle cx="15.8" cy="12.7" r="0.69" fill="#fff" opacity="0.74"/><circle cx="17.4" cy="6.6" r="0.90" fill="#fff" opacity="0.72"/><circle cx="12.7" cy="10.5" r="0.53" fill="#fff" opacity="0.85"/><circle cx="22.3" cy="7.6" r="0.92" fill="#fff" opacity="0.79"/><circle cx="20.7" cy="8.7" r="0.65" fill="#fff" opacity="0.67"/><circle cx="25.2" cy="9.3" r="0.68" fill="#fff" opacity="0.96"/><circle cx="17.2" cy="13.0" r="0.63" fill="#fff" opacity="0.65"/><circle cx="21.1" cy="9.8" r="0.94" fill="#fff" opacity="0.97"/><circle cx="18.3" cy="5.1" r="0.46" fill="#fff" opacity="0.76"/><circle cx="13.4" cy="5.5" r="0.60" fill="#fff" opacity="0.55"/><circle cx="11.5" cy="9.2" r="0.55" fill="#fff" opacity="0.90"/><circle cx="10.0" cy="8.2" r="0.83" fill="#fff" opacity="0.71"/><circle cx="19.1" cy="12.5" r="0.52" fill="#fff" opacity="0.94"/><circle cx="17.1" cy="11.1" r="0.75" fill="#fff" opacity="0.73"/><circle cx="8.2" cy="6.3" r="0.52" fill="#fff" opacity="0.64"/><circle cx="16.3" cy="11.3" r="0.85" fill="#fff" opacity="0.93"/><circle cx="10.6" cy="9.7" r="0.47" fill="#fff" opacity="0.65"/><circle cx="12.9" cy="11.7" r="0.65" fill="#fff" opacity="0.74"/><circle cx="12.3" cy="5.6" r="0.89" fill="#fff" opacity="0.97"/><circle cx="19.6" cy="8.1" r="0.67" fill="#fff" opacity="0.69"/><circle cx="18.2" cy="10.3" r="0.61" fill="#fff" opacity="0.94"/><circle cx="19.6" cy="6.6" r="0.85" fill="#fff" opacity="0.85"/><circle cx="9.8" cy="7.3" r="0.83" fill="#fff" opacity="0.59"/><circle cx="13.7" cy="12.9" r="0.58" fill="#fff" opacity="0.78"/><circle cx="21.0" cy="9.3" r="0.91" fill="#fff" opacity="0.67"/><circle cx="22.9" cy="8.2" r="0.78" fill="#fff" opacity="0.82"/><circle cx="10.5" cy="10.5" r="0.75" fill="#fff" opacity="0.99"/><circle cx="18.5" cy="8.5" r="0.64" fill="#fff" opacity="0.95"/><circle cx="11.8" cy="10.4" r="0.80" fill="#fff" opacity="0.98"/><circle cx="8.6" cy="10.4" r="0.54" fill="#fff" opacity="0.84"/><circle cx="18.3" cy="11.0" r="0.88" fill="#fff" opacity="0.65"/><circle cx="22.5" cy="7.7" r="0.65" fill="#fff" opacity="0.60"/><circle cx="15.7" cy="4.8" r="0.61" fill="#fff" opacity="0.85"/><circle cx="20.1" cy="6.2" r="0.84" fill="#fff" opacity="0.75"/><circle cx="8.9" cy="11.1" r="0.82" fill="#fff" opacity="0.76"/><circle cx="15.6" cy="10.0" r="0.77" fill="#fff" opacity="0.89"/><circle cx="20.6" cy="6.5" r="0.46" fill="#fff" opacity="0.60"/><circle cx="11.0" cy="9.7" r="0.93" fill="#fff" opacity="0.74"/><circle cx="12.3" cy="9.5" r="0.92" fill="#fff" opacity="0.81"/><circle cx="10.7" cy="11.2" r="0.95" fill="#fff" opacity="0.91"/><circle cx="12.9" cy="6.2" r="0.68" fill="#fff" opacity="0.61"/><circle cx="7.3" cy="8.6" r="0.88" fill="#fff" opacity="0.87"/><circle cx="13.3" cy="12.8" r="0.54" fill="#fff" opacity="0.66"/><circle cx="10.3" cy="9.6" r="0.89" fill="#fff" opacity="0.72"/><circle cx="14.6" cy="12.3" r="0.89" fill="#fff" opacity="0.76"/><circle cx="9.6" cy="8.7" r="0.46" fill="#fff" opacity="0.70"/><circle cx="14.9" cy="7.6" r="0.82" fill="#fff" opacity="0.81"/><circle cx="15.7" cy="10.1" r="0.74" fill="#fff" opacity="0.74"/><circle cx="8.1" cy="9.7" r="0.47" fill="#fff" opacity="0.57"/><circle cx="11.7" cy="6.7" r="0.83" fill="#fff" opacity="0.62"/><circle cx="13.7" cy="10.6" r="0.66" fill="#fff" opacity="0.91"/><circle cx="10.3" cy="7.9" r="0.73" fill="#fff" opacity="0.64"/><circle cx="16.2" cy="10.7" r="0.78" fill="#fff" opacity="0.92"/><circle cx="6.3" cy="10.5" r="0.81" fill="#fff" opacity="0.92"/><circle cx="20.4" cy="10.2" r="0.53" fill="#fff" opacity="0.94"/><circle cx="19.5" cy="10.0" r="0.83" fill="#fff" opacity="0.82"/><circle cx="11.7" cy="5.2" r="0.62" fill="#fff" opacity="0.83"/><circle cx="8.5" cy="6.3" r="0.51" fill="#fff" opacity="0.77"/><circle cx="12.8" cy="2.3" r="0.72" fill="#fff" opacity="0.69"/><circle cx="10.4" cy="4.5" r="0.75" fill="#fff" opacity="0.63"/><circle cx="14.2" cy="4.8" r="0.74" fill="#fff" opacity="0.91"/><circle cx="9.7" cy="3.0" r="0.42" fill="#fff" opacity="0.76"/><circle cx="9.0" cy="2.5" r="0.78" fill="#fff" opacity="0.95"/><circle cx="14.1" cy="2.9" r="0.45" fill="#fff" opacity="0.77"/><circle cx="6.7" cy="3.1" r="0.64" fill="#fff" opacity="0.73"/><circle cx="9.3" cy="3.0" r="0.73" fill="#fff" opacity="0.61"/><circle cx="14.1" cy="4.0" r="0.62" fill="#fff" opacity="0.88"/><circle cx="8.9" cy="3.3" r="0.60" fill="#fff" opacity="0.96"/><circle cx="8.3" cy="3.7" r="0.80" fill="#fff" opacity="0.68"/><circle cx="12.5" cy="2.5" r="0.63" fill="#fff" opacity="0.77"/><circle cx="11.7" cy="2.1" r="0.48" fill="#fff" opacity="0.96"/><circle cx="7.8" cy="3.0" r="0.80" fill="#fff" opacity="0.70"/></g></svg>
<div class="a" style="left:322px;top:96px;width:30px;height:30px;background:#545454;box-shadow:0 0 0 1px #454545;"></div>
<span class="t" style="top:113.29px;color:#dcdcdc;letter-spacing:0.5px;font-size:10px;left:322.2px;width:30px;text-align:center;">60</span>
<svg class="a" style="left:322px;top:96.6px" width="30" height="18" viewBox="0 0 30 18"><g transform="rotate(12 15 8.5)"><circle cx="13.0" cy="6.5" r="0.54" fill="#fff" opacity="0.66"/><circle cx="20.4" cy="6.9" r="0.64" fill="#fff" opacity="0.86"/><circle cx="15.8" cy="12.7" r="0.69" fill="#fff" opacity="0.74"/><circle cx="17.4" cy="6.6" r="0.90" fill="#fff" opacity="0.72"/><circle cx="12.7" cy="10.5" r="0.53" fill="#fff" opacity="0.85"/><circle cx="22.3" cy="7.6" r="0.92" fill="#fff" opacity="0.79"/><circle cx="20.7" cy="8.7" r="0.65" fill="#fff" opacity="0.67"/><circle cx="25.2" cy="9.3" r="0.68" fill="#fff" opacity="0.96"/><circle cx="17.2" cy="13.0" r="0.63" fill="#fff" opacity="0.65"/><circle cx="21.1" cy="9.8" r="0.94" fill="#fff" opacity="0.97"/><circle cx="18.3" cy="5.1" r="0.46" fill="#fff" opacity="0.76"/><circle cx="13.4" cy="5.5" r="0.60" fill="#fff" opacity="0.55"/><circle cx="11.5" cy="9.2" r="0.55" fill="#fff" opacity="0.90"/><circle cx="10.0" cy="8.2" r="0.83" fill="#fff" opacity="0.71"/><circle cx="19.1" cy="12.5" r="0.52" fill="#fff" opacity="0.94"/><circle cx="17.1" cy="11.1" r="0.75" fill="#fff" opacity="0.73"/><circle cx="8.2" cy="6.3" r="0.52" fill="#fff" opacity="0.64"/><circle cx="16.3" cy="11.3" r="0.85" fill="#fff" opacity="0.93"/><circle cx="10.6" cy="9.7" r="0.47" fill="#fff" opacity="0.65"/><circle cx="12.9" cy="11.7" r="0.65" fill="#fff" opacity="0.74"/><circle cx="12.3" cy="5.6" r="0.89" fill="#fff" opacity="0.97"/><circle cx="19.6" cy="8.1" r="0.67" fill="#fff" opacity="0.69"/><circle cx="18.2" cy="10.3" r="0.61" fill="#fff" opacity="0.94"/><circle cx="19.6" cy="6.6" r="0.85" fill="#fff" opacity="0.85"/><circle cx="9.8" cy="7.3" r="0.83" fill="#fff" opacity="0.59"/><circle cx="13.7" cy="12.9" r="0.58" fill="#fff" opacity="0.78"/><circle cx="21.0" cy="9.3" r="0.91" fill="#fff" opacity="0.67"/><circle cx="22.9" cy="8.2" r="0.78" fill="#fff" opacity="0.82"/><circle cx="10.5" cy="10.5" r="0.75" fill="#fff" opacity="0.99"/><circle cx="18.5" cy="8.5" r="0.64" fill="#fff" opacity="0.95"/><circle cx="11.8" cy="10.4" r="0.80" fill="#fff" opacity="0.98"/><circle cx="8.6" cy="10.4" r="0.54" fill="#fff" opacity="0.84"/><circle cx="18.3" cy="11.0" r="0.88" fill="#fff" opacity="0.65"/><circle cx="22.5" cy="7.7" r="0.65" fill="#fff" opacity="0.60"/><circle cx="15.7" cy="4.8" r="0.61" fill="#fff" opacity="0.85"/><circle cx="20.1" cy="6.2" r="0.84" fill="#fff" opacity="0.75"/><circle cx="8.9" cy="11.1" r="0.82" fill="#fff" opacity="0.76"/><circle cx="15.6" cy="10.0" r="0.77" fill="#fff" opacity="0.89"/><circle cx="20.6" cy="6.5" r="0.46" fill="#fff" opacity="0.60"/><circle cx="11.0" cy="9.7" r="0.93" fill="#fff" opacity="0.74"/><circle cx="12.3" cy="9.5" r="0.92" fill="#fff" opacity="0.81"/><circle cx="10.7" cy="11.2" r="0.95" fill="#fff" opacity="0.91"/><circle cx="12.9" cy="6.2" r="0.68" fill="#fff" opacity="0.61"/><circle cx="7.3" cy="8.6" r="0.88" fill="#fff" opacity="0.87"/><circle cx="13.3" cy="12.8" r="0.54" fill="#fff" opacity="0.66"/><circle cx="10.3" cy="9.6" r="0.89" fill="#fff" opacity="0.72"/><circle cx="14.6" cy="12.3" r="0.89" fill="#fff" opacity="0.76"/><circle cx="9.6" cy="8.7" r="0.46" fill="#fff" opacity="0.70"/><circle cx="14.9" cy="7.6" r="0.82" fill="#fff" opacity="0.81"/><circle cx="15.7" cy="10.1" r="0.74" fill="#fff" opacity="0.74"/><circle cx="8.1" cy="9.7" r="0.47" fill="#fff" opacity="0.57"/><circle cx="11.7" cy="6.7" r="0.83" fill="#fff" opacity="0.62"/><circle cx="13.7" cy="10.6" r="0.66" fill="#fff" opacity="0.91"/><circle cx="10.3" cy="7.9" r="0.73" fill="#fff" opacity="0.64"/><circle cx="16.2" cy="10.7" r="0.78" fill="#fff" opacity="0.92"/><circle cx="6.3" cy="10.5" r="0.81" fill="#fff" opacity="0.92"/><circle cx="20.4" cy="10.2" r="0.53" fill="#fff" opacity="0.94"/><circle cx="19.5" cy="10.0" r="0.83" fill="#fff" opacity="0.82"/><circle cx="11.7" cy="5.2" r="0.62" fill="#fff" opacity="0.83"/><circle cx="8.5" cy="6.3" r="0.51" fill="#fff" opacity="0.77"/><circle cx="12.8" cy="2.3" r="0.72" fill="#fff" opacity="0.69"/><circle cx="10.4" cy="4.5" r="0.75" fill="#fff" opacity="0.63"/><circle cx="14.2" cy="4.8" r="0.74" fill="#fff" opacity="0.91"/><circle cx="9.7" cy="3.0" r="0.42" fill="#fff" opacity="0.76"/><circle cx="9.0" cy="2.5" r="0.78" fill="#fff" opacity="0.95"/><circle cx="14.1" cy="2.9" r="0.45" fill="#fff" opacity="0.77"/><circle cx="6.7" cy="3.1" r="0.64" fill="#fff" opacity="0.73"/><circle cx="9.3" cy="3.0" r="0.73" fill="#fff" opacity="0.61"/><circle cx="14.1" cy="4.0" r="0.62" fill="#fff" opacity="0.88"/><circle cx="8.9" cy="3.3" r="0.60" fill="#fff" opacity="0.96"/><circle cx="8.3" cy="3.7" r="0.80" fill="#fff" opacity="0.68"/><circle cx="12.5" cy="2.5" r="0.63" fill="#fff" opacity="0.77"/><circle cx="11.7" cy="2.1" r="0.48" fill="#fff" opacity="0.96"/><circle cx="7.8" cy="3.0" r="0.80" fill="#fff" opacity="0.70"/></g></svg>
<div class="a" style="left:162px;top:128px;width:30px;height:30px;background:#545454;box-shadow:0 0 0 1px #454545;"></div>
<span class="t" style="top:145.29px;color:#dcdcdc;letter-spacing:0.5px;font-size:10px;left:162.2px;width:30px;text-align:center;"><span style="margin:0 -0.5px">1</span>00</span>
<svg class="a" style="left:162px;top:128.6px" width="30" height="18" viewBox="0 0 30 18"><path d="M11.6 15.2 C11 9 11.8 3.2 14.6 1.2 C17.6 0.6 18.6 5 18.4 15 C16 15.8 13.6 15.8 11.6 15.2 Z" fill="#b4b4b4"/></svg>
<div class="a" style="left:194px;top:128px;width:30px;height:30px;background:#545454;box-shadow:0 0 0 1px #454545;"></div>
<span class="t" style="top:145.29px;color:#dcdcdc;letter-spacing:0.5px;font-size:10px;left:194.2px;width:30px;text-align:center;"><span style="margin:0 -0.5px">1</span>27</span>
<svg class="a" style="left:194px;top:128.6px" width="30" height="18" viewBox="0 0 30 18"><circle cx="16.9" cy="2.2" r="0.46" fill="#fff" opacity="0.73"/><circle cx="14.3" cy="2.3" r="0.58" fill="#fff" opacity="0.92"/><circle cx="10.3" cy="2.2" r="0.41" fill="#fff" opacity="0.62"/><circle cx="15.6" cy="3.8" r="0.70" fill="#fff" opacity="0.64"/><circle cx="11.8" cy="3.8" r="0.46" fill="#fff" opacity="0.51"/><circle cx="19.3" cy="3.6" r="0.52" fill="#fff" opacity="0.76"/><circle cx="21.2" cy="2.5" r="0.46" fill="#fff" opacity="0.71"/><circle cx="10.8" cy="2.8" r="0.41" fill="#fff" opacity="0.88"/><circle cx="19.8" cy="2.8" r="0.57" fill="#fff" opacity="0.63"/><circle cx="17.8" cy="2.2" r="0.48" fill="#fff" opacity="0.88"/><circle cx="11.2" cy="3.8" r="0.59" fill="#fff" opacity="0.52"/><circle cx="13.0" cy="3.8" r="0.74" fill="#fff" opacity="0.70"/><circle cx="15.5" cy="4.4" r="0.73" fill="#fff" opacity="0.76"/><circle cx="16.1" cy="3.0" r="0.59" fill="#fff" opacity="0.84"/><circle cx="11.9" cy="4.4" r="0.53" fill="#fff" opacity="0.62"/><circle cx="14.2" cy="3.4" r="0.60" fill="#fff" opacity="0.91"/><circle cx="17.9" cy="3.2" r="0.40" fill="#fff" opacity="0.99"/><circle cx="13.6" cy="2.8" r="0.50" fill="#fff" opacity="0.60"/><circle cx="17.9" cy="2.5" r="0.63" fill="#fff" opacity="0.83"/><circle cx="11.2" cy="4.2" r="0.80" fill="#fff" opacity="0.73"/><circle cx="13.0" cy="3.2" r="0.81" fill="#fff" opacity="0.99"/><circle cx="18.5" cy="2.9" r="0.58" fill="#fff" opacity="0.85"/><circle cx="13.1" cy="4.1" r="0.55" fill="#fff" opacity="0.79"/><circle cx="15.8" cy="3.3" r="0.78" fill="#fff" opacity="0.95"/><circle cx="19.4" cy="3.7" r="0.58" fill="#fff" opacity="0.70"/><circle cx="15.0" cy="4.3" r="0.73" fill="#fff" opacity="0.55"/><circle cx="12.8" cy="4.2" r="0.68" fill="#fff" opacity="0.51"/><circle cx="19.0" cy="3.6" r="0.61" fill="#fff" opacity="0.52"/><circle cx="20.8" cy="2.9" r="0.43" fill="#fff" opacity="0.91"/><circle cx="15.3" cy="2.7" r="0.58" fill="#fff" opacity="0.60"/><circle cx="20.1" cy="8.1" r="0.69" fill="#fff" opacity="0.93"/><circle cx="7.9" cy="8.1" r="0.43" fill="#fff" opacity="0.60"/><circle cx="8.6" cy="7.7" r="0.63" fill="#fff" opacity="0.82"/><circle cx="13.9" cy="9.5" r="0.87" fill="#fff" opacity="0.61"/><circle cx="11.7" cy="8.9" r="0.50" fill="#fff" opacity="0.52"/><circle cx="19.3" cy="8.6" r="0.59" fill="#fff" opacity="0.82"/><circle cx="10.4" cy="8.1" r="0.47" fill="#fff" opacity="0.71"/><circle cx="11.1" cy="8.8" r="0.84" fill="#fff" opacity="0.89"/><circle cx="16.6" cy="8.9" r="0.83" fill="#fff" opacity="0.58"/><circle cx="20.1" cy="8.6" r="0.75" fill="#fff" opacity="0.99"/><circle cx="6.6" cy="7.9" r="0.46" fill="#fff" opacity="0.66"/><circle cx="10.0" cy="9.2" r="0.82" fill="#fff" opacity="0.63"/><circle cx="12.5" cy="7.2" r="0.44" fill="#fff" opacity="0.58"/><circle cx="10.7" cy="9.3" r="0.78" fill="#fff" opacity="0.62"/><circle cx="13.3" cy="9.1" r="0.63" fill="#fff" opacity="0.81"/><circle cx="18.7" cy="8.9" r="0.51" fill="#fff" opacity="0.55"/><circle cx="13.0" cy="7.5" r="0.71" fill="#fff" opacity="0.97"/><circle cx="10.4" cy="8.9" r="0.51" fill="#fff" opacity="0.98"/><circle cx="16.4" cy="9.0" r="0.66" fill="#fff" opacity="0.62"/><circle cx="21.1" cy="8.5" r="0.88" fill="#fff" opacity="0.89"/><circle cx="20.3" cy="8.0" r="0.72" fill="#fff" opacity="0.80"/><circle cx="10.7" cy="8.3" r="0.41" fill="#fff" opacity="0.69"/><circle cx="7.6" cy="7.8" r="0.81" fill="#fff" opacity="0.59"/><circle cx="17.7" cy="7.9" r="0.71" fill="#fff" opacity="0.91"/><circle cx="10.0" cy="7.3" r="0.87" fill="#fff" opacity="0.66"/><circle cx="18.5" cy="7.7" r="0.88" fill="#fff" opacity="0.96"/><circle cx="9.6" cy="9.8" r="0.49" fill="#fff" opacity="0.92"/><circle cx="6.6" cy="8.0" r="0.40" fill="#fff" opacity="0.93"/><circle cx="10.7" cy="8.8" r="0.79" fill="#fff" opacity="0.63"/><circle cx="17.1" cy="9.2" r="0.69" fill="#fff" opacity="0.64"/><circle cx="11.7" cy="8.8" r="0.81" fill="#fff" opacity="0.56"/><circle cx="17.2" cy="7.1" r="0.53" fill="#fff" opacity="0.53"/><circle cx="7.7" cy="9.1" r="0.88" fill="#fff" opacity="0.94"/><circle cx="14.6" cy="10.3" r="0.40" fill="#fff" opacity="0.65"/><circle cx="12.8" cy="13.6" r="0.81" fill="#fff" opacity="0.67"/><circle cx="19.5" cy="12.8" r="0.56" fill="#fff" opacity="0.55"/><circle cx="20.6" cy="14.2" r="0.78" fill="#fff" opacity="0.91"/><circle cx="21.4" cy="13.5" r="0.79" fill="#fff" opacity="0.84"/><circle cx="21.6" cy="13.6" r="0.82" fill="#fff" opacity="0.82"/><circle cx="23.7" cy="13.6" r="0.48" fill="#fff" opacity="0.77"/><circle cx="25.0" cy="13.8" r="0.60" fill="#fff" opacity="0.69"/><circle cx="19.7" cy="14.4" r="0.64" fill="#fff" opacity="0.56"/><circle cx="17.4" cy="12.2" r="0.71" fill="#fff" opacity="0.92"/><circle cx="17.4" cy="14.8" r="0.80" fill="#fff" opacity="0.91"/><circle cx="21.7" cy="12.2" r="0.43" fill="#fff" opacity="0.55"/><circle cx="14.6" cy="13.9" r="0.79" fill="#fff" opacity="0.99"/><circle cx="19.0" cy="13.9" r="0.51" fill="#fff" opacity="0.70"/><circle cx="21.4" cy="14.8" r="0.72" fill="#fff" opacity="0.84"/><circle cx="22.2" cy="12.4" r="0.52" fill="#fff" opacity="0.57"/><circle cx="15.9" cy="12.9" r="0.52" fill="#fff" opacity="0.64"/><circle cx="14.2" cy="13.5" r="0.70" fill="#fff" opacity="0.89"/><circle cx="20.1" cy="11.9" r="0.41" fill="#fff" opacity="0.79"/><circle cx="17.1" cy="14.8" r="0.68" fill="#fff" opacity="0.96"/><circle cx="15.2" cy="12.3" r="0.48" fill="#fff" opacity="0.99"/><circle cx="19.8" cy="13.6" r="0.70" fill="#fff" opacity="0.56"/><circle cx="18.6" cy="13.6" r="0.44" fill="#fff" opacity="0.58"/><circle cx="13.4" cy="13.0" r="0.41" fill="#fff" opacity="0.52"/><circle cx="22.9" cy="14.3" r="0.44" fill="#fff" opacity="0.93"/><circle cx="13.9" cy="13.3" r="0.57" fill="#fff" opacity="0.58"/><circle cx="17.7" cy="12.8" r="0.43" fill="#fff" opacity="0.91"/></svg>
<div class="a" style="left:226px;top:128px;width:30px;height:30px;background:#545454;box-shadow:0 0 0 1px #454545;"></div>
<span class="t" style="top:145.29px;color:#dcdcdc;letter-spacing:0.5px;font-size:10px;left:226.2px;width:30px;text-align:center;">284</span>
<svg class="a" style="left:226px;top:128.6px" width="30" height="18" viewBox="0 0 30 18"><circle cx="16.9" cy="5.7" r="0.63" fill="#fff" opacity="0.64"/><circle cx="16.2" cy="5.6" r="0.44" fill="#fff" opacity="0.99"/><circle cx="8.9" cy="7.2" r="0.35" fill="#fff" opacity="0.67"/><circle cx="17.9" cy="6.8" r="0.58" fill="#fff" opacity="0.72"/><circle cx="10.1" cy="7.0" r="0.43" fill="#fff" opacity="0.90"/><circle cx="17.1" cy="3.4" r="0.55" fill="#fff" opacity="0.65"/><circle cx="16.2" cy="3.7" r="0.43" fill="#fff" opacity="0.89"/><circle cx="16.3" cy="11.8" r="0.59" fill="#fff" opacity="0.79"/><circle cx="18.6" cy="6.4" r="0.53" fill="#fff" opacity="0.89"/><circle cx="13.6" cy="2.5" r="0.32" fill="#fff" opacity="0.67"/><circle cx="8.2" cy="6.4" r="0.44" fill="#fff" opacity="0.83"/><circle cx="15.4" cy="14.6" r="0.55" fill="#fff" opacity="0.66"/><circle cx="22.7" cy="11.0" r="0.69" fill="#fff" opacity="0.87"/><circle cx="20.0" cy="11.9" r="0.39" fill="#fff" opacity="0.50"/><circle cx="18.3" cy="13.8" r="0.68" fill="#fff" opacity="0.76"/><circle cx="15.1" cy="3.9" r="0.26" fill="#fff" opacity="0.60"/><circle cx="16.0" cy="2.3" r="0.30" fill="#fff" opacity="0.58"/><circle cx="22.6" cy="3.5" r="0.54" fill="#fff" opacity="0.94"/><circle cx="11.4" cy="5.5" r="0.65" fill="#fff" opacity="0.88"/><circle cx="18.2" cy="12.5" r="0.51" fill="#fff" opacity="0.66"/><circle cx="19.3" cy="12.3" r="0.27" fill="#fff" opacity="0.66"/><circle cx="12.3" cy="13.9" r="0.38" fill="#fff" opacity="0.84"/><circle cx="14.8" cy="6.2" r="0.47" fill="#fff" opacity="0.95"/><circle cx="18.8" cy="6.3" r="0.32" fill="#fff" opacity="0.67"/><circle cx="15.5" cy="10.2" r="0.70" fill="#fff" opacity="0.66"/><circle cx="15.0" cy="3.8" r="0.36" fill="#fff" opacity="0.96"/><circle cx="10.1" cy="10.3" r="0.54" fill="#fff" opacity="0.58"/><circle cx="7.6" cy="10.1" r="0.27" fill="#fff" opacity="0.77"/><circle cx="24.5" cy="7.4" r="0.39" fill="#fff" opacity="0.55"/><circle cx="12.4" cy="5.3" r="0.30" fill="#fff" opacity="0.85"/><circle cx="17.8" cy="11.3" r="0.30" fill="#fff" opacity="0.63"/><circle cx="13.7" cy="12.8" r="0.35" fill="#fff" opacity="0.61"/><circle cx="18.5" cy="4.2" r="0.40" fill="#fff" opacity="0.70"/><circle cx="12.4" cy="10.4" r="0.58" fill="#fff" opacity="0.88"/><circle cx="21.4" cy="12.0" r="0.35" fill="#fff" opacity="0.56"/><circle cx="12.0" cy="14.0" r="0.59" fill="#fff" opacity="0.68"/><circle cx="18.9" cy="11.6" r="0.38" fill="#fff" opacity="0.55"/><circle cx="21.6" cy="11.2" r="0.61" fill="#fff" opacity="0.87"/><circle cx="13.6" cy="10.3" r="0.42" fill="#fff" opacity="0.95"/><circle cx="9.2" cy="11.0" r="0.41" fill="#fff" opacity="0.95"/><circle cx="21.5" cy="3.1" r="0.26" fill="#fff" opacity="0.62"/><circle cx="19.7" cy="3.6" r="0.35" fill="#fff" opacity="0.72"/></svg>
<div class="a" style="left:258px;top:128px;width:30px;height:30px;background:#545454;box-shadow:0 0 0 1px #454545;"></div>
<span class="t" style="top:145.29px;color:#dcdcdc;letter-spacing:0.5px;font-size:10px;left:258.2px;width:30px;text-align:center;">80</span>
<svg class="a" style="left:258px;top:128.6px" width="30" height="18" viewBox="0 0 30 18"><circle cx="7.5" cy="1.4" r="0.9" fill="#fff" opacity="1"/><circle cx="6" cy="2.4" r="0.5" fill="#fff" opacity="0.8"/><circle cx="22.6" cy="4" r="0.6" fill="#fff" opacity="0.9"/><circle cx="17.6" cy="7.6" r="1.05" fill="#fff" opacity="1"/><circle cx="9" cy="9.8" r="0.8" fill="#fff" opacity="0.7"/><circle cx="17.2" cy="15.8" r="1.3" fill="#fff" opacity="1"/><circle cx="24" cy="2" r="0.35" fill="#fff" opacity="0.6"/></svg>
<div class="a" style="left:290px;top:128px;width:30px;height:30px;background:#545454;box-shadow:0 0 0 1px #454545;"></div>
<span class="t" style="top:145.29px;color:#dcdcdc;letter-spacing:0.5px;font-size:10px;left:290.2px;width:30px;text-align:center;"><span style="margin:0 -0.5px">1</span>74</span>
<svg class="a" style="left:290px;top:128.6px" width="30" height="18" viewBox="0 0 30 18"><circle cx="7.3" cy="3.5" r="0.50" fill="#fff" opacity="0.81"/><circle cx="9.7" cy="3.5" r="0.42" fill="#fff" opacity="0.85"/><circle cx="9.9" cy="11.8" r="0.63" fill="#fff" opacity="0.48"/><circle cx="17.2" cy="7.9" r="0.51" fill="#fff" opacity="1.00"/><circle cx="8.9" cy="2.3" r="0.77" fill="#fff" opacity="0.64"/><circle cx="10.8" cy="6.4" r="0.48" fill="#fff" opacity="0.97"/><circle cx="11.1" cy="4.9" r="0.59" fill="#fff" opacity="0.73"/><circle cx="25.0" cy="13.1" r="0.48" fill="#fff" opacity="0.52"/><circle cx="22.8" cy="15.1" r="0.32" fill="#fff" opacity="0.84"/><circle cx="23.4" cy="10.6" r="0.41" fill="#fff" opacity="0.88"/><circle cx="20.8" cy="4.6" r="0.62" fill="#fff" opacity="0.53"/><circle cx="7.9" cy="6.4" r="0.47" fill="#fff" opacity="0.64"/><circle cx="19.3" cy="13.0" r="0.78" fill="#fff" opacity="0.99"/><circle cx="25.8" cy="12.4" r="0.45" fill="#fff" opacity="0.51"/><circle cx="18.8" cy="9.2" r="0.64" fill="#fff" opacity="0.46"/><circle cx="10.7" cy="14.2" r="0.60" fill="#fff" opacity="0.82"/><circle cx="8.9" cy="7.3" r="0.76" fill="#fff" opacity="0.79"/><circle cx="25.7" cy="4.6" r="0.53" fill="#fff" opacity="0.88"/><circle cx="15.5" cy="12.4" r="0.58" fill="#fff" opacity="0.47"/><circle cx="9.0" cy="15.0" r="0.36" fill="#fff" opacity="0.52"/><circle cx="13.4" cy="11.4" r="0.73" fill="#fff" opacity="0.69"/><circle cx="16.5" cy="12.4" r="0.44" fill="#fff" opacity="0.62"/><circle cx="18.6" cy="10.4" r="0.32" fill="#fff" opacity="0.47"/><circle cx="9.7" cy="11.6" r="0.65" fill="#fff" opacity="0.98"/><circle cx="21.5" cy="5.4" r="0.68" fill="#fff" opacity="0.99"/><circle cx="13.7" cy="2.1" r="0.49" fill="#fff" opacity="0.57"/><circle cx="10.4" cy="2.6" r="0.36" fill="#fff" opacity="0.92"/><circle cx="8.0" cy="10.1" r="0.40" fill="#fff" opacity="0.52"/><circle cx="22.5" cy="5.9" r="0.39" fill="#fff" opacity="0.67"/><circle cx="20.2" cy="8.9" r="0.73" fill="#fff" opacity="0.64"/><circle cx="17.0" cy="11.5" r="0.53" fill="#fff" opacity="0.83"/><circle cx="15.9" cy="3.8" r="0.36" fill="#fff" opacity="0.87"/><circle cx="21.1" cy="14.4" r="0.65" fill="#fff" opacity="0.75"/><circle cx="10.2" cy="13.3" r="0.36" fill="#fff" opacity="0.65"/><circle cx="9.7" cy="7.0" r="0.45" fill="#fff" opacity="0.66"/><circle cx="20.5" cy="9.1" r="0.42" fill="#fff" opacity="0.87"/><circle cx="20.9" cy="12.9" r="0.32" fill="#fff" opacity="0.77"/><circle cx="23.9" cy="5.4" r="0.40" fill="#fff" opacity="0.89"/><circle cx="13.9" cy="7.3" r="0.71" fill="#fff" opacity="0.63"/><circle cx="10.8" cy="4.8" r="0.47" fill="#fff" opacity="0.82"/><circle cx="14.0" cy="12.2" r="0.33" fill="#fff" opacity="0.55"/><circle cx="18.8" cy="8.3" r="0.55" fill="#fff" opacity="0.96"/><circle cx="12.3" cy="4.4" r="0.32" fill="#fff" opacity="0.69"/><circle cx="12.7" cy="8.3" r="0.30" fill="#fff" opacity="0.40"/><circle cx="14.2" cy="12.0" r="0.45" fill="#fff" opacity="0.95"/><circle cx="18.0" cy="7.3" r="0.69" fill="#fff" opacity="0.54"/><circle cx="18.5" cy="13.2" r="0.57" fill="#fff" opacity="0.59"/><circle cx="8.9" cy="9.6" r="0.39" fill="#fff" opacity="0.62"/><circle cx="17.3" cy="14.4" r="0.64" fill="#fff" opacity="0.71"/><circle cx="23.2" cy="6.1" r="0.49" fill="#fff" opacity="0.81"/><circle cx="17.5" cy="4.9" r="0.51" fill="#fff" opacity="0.89"/><circle cx="11.7" cy="11.3" r="0.32" fill="#fff" opacity="0.97"/><circle cx="20.0" cy="6.3" r="0.79" fill="#fff" opacity="0.88"/><circle cx="8.3" cy="5.3" r="0.55" fill="#fff" opacity="1.00"/><circle cx="9.7" cy="2.6" r="0.46" fill="#fff" opacity="0.43"/><circle cx="14.8" cy="9.1" r="0.52" fill="#fff" opacity="0.48"/><circle cx="7.5" cy="12.6" r="0.52" fill="#fff" opacity="0.69"/><circle cx="16.1" cy="11.1" r="0.75" fill="#fff" opacity="0.90"/><circle cx="20.8" cy="6.5" r="0.38" fill="#fff" opacity="0.45"/><circle cx="23.3" cy="2.8" r="0.58" fill="#fff" opacity="0.95"/><circle cx="13.2" cy="7.1" r="0.51" fill="#fff" opacity="0.97"/><circle cx="20.0" cy="13.1" r="0.32" fill="#fff" opacity="0.84"/><circle cx="15.6" cy="7.3" r="0.71" fill="#fff" opacity="0.84"/><circle cx="24.2" cy="11.7" r="0.76" fill="#fff" opacity="0.66"/><circle cx="17.6" cy="12.4" r="0.53" fill="#fff" opacity="0.48"/><circle cx="18.1" cy="13.5" r="0.74" fill="#fff" opacity="0.48"/><circle cx="14.3" cy="5.0" r="0.47" fill="#fff" opacity="0.98"/><circle cx="15.0" cy="6.1" r="0.44" fill="#fff" opacity="0.66"/><circle cx="19.7" cy="6.5" r="0.39" fill="#fff" opacity="0.54"/><circle cx="12.0" cy="14.0" r="0.38" fill="#fff" opacity="0.85"/><circle cx="9.1" cy="12.4" r="0.43" fill="#fff" opacity="0.87"/><circle cx="15.2" cy="3.0" r="0.35" fill="#fff" opacity="0.88"/><circle cx="17.3" cy="8.4" r="0.48" fill="#fff" opacity="0.81"/><circle cx="16.2" cy="2.8" r="0.60" fill="#fff" opacity="0.59"/><circle cx="23.0" cy="9.2" r="0.69" fill="#fff" opacity="0.47"/><circle cx="20.4" cy="10.1" r="0.73" fill="#fff" opacity="0.93"/><circle cx="17.5" cy="9.8" r="0.68" fill="#fff" opacity="0.56"/><circle cx="17.3" cy="12.4" r="0.60" fill="#fff" opacity="0.73"/><circle cx="23.2" cy="14.9" r="0.43" fill="#fff" opacity="0.44"/><circle cx="18.6" cy="4.0" r="0.78" fill="#fff" opacity="0.68"/><circle cx="17.1" cy="12.8" r="0.73" fill="#fff" opacity="0.49"/><circle cx="15.6" cy="4.4" r="0.53" fill="#fff" opacity="0.48"/><circle cx="23.6" cy="6.7" r="0.49" fill="#fff" opacity="0.94"/><circle cx="22.6" cy="6.4" r="0.55" fill="#fff" opacity="0.80"/><circle cx="10.6" cy="3.8" r="0.73" fill="#fff" opacity="0.50"/><circle cx="20.4" cy="11.7" r="0.60" fill="#fff" opacity="0.61"/><circle cx="23.2" cy="12.4" r="0.34" fill="#fff" opacity="0.94"/><circle cx="19.1" cy="5.8" r="0.38" fill="#fff" opacity="0.46"/><circle cx="22.4" cy="13.2" r="0.47" fill="#fff" opacity="0.51"/><circle cx="8.5" cy="7.5" r="0.45" fill="#fff" opacity="0.43"/><path d="M4.5 2.4 H20 M9 4.2 H26" stroke="#fff" stroke-width=".8" opacity=".8"/></svg>
<div class="a" style="left:322px;top:128px;width:30px;height:30px;background:#545454;box-shadow:0 0 0 1px #454545;"></div>
<span class="t" style="top:145.29px;color:#dcdcdc;letter-spacing:0.5px;font-size:10px;left:322.2px;width:30px;text-align:center;"><span style="margin:0 -0.5px">1</span>75</span>
<svg class="a" style="left:322px;top:128.6px" width="30" height="18" viewBox="0 0 30 18"><path d="M5.0 1.8 V12.0" stroke="#9a9a9a" stroke-width=".6" opacity="0.36" stroke-dasharray="2.8 1.0"/><path d="M6.5 4.0 V11.5" stroke="#9a9a9a" stroke-width=".6" opacity="0.43" stroke-dasharray="2.7 1.0"/><path d="M8.1 4.8 V15.0" stroke="#9a9a9a" stroke-width=".6" opacity="0.38" stroke-dasharray="1.0 1.3"/><path d="M9.7 1.9 V11.0" stroke="#9a9a9a" stroke-width=".6" opacity="0.51" stroke-dasharray="2.7 1.3"/><path d="M11.2 4.8 V11.9" stroke="#9a9a9a" stroke-width=".6" opacity="0.28" stroke-dasharray="1.2 1.5"/><path d="M12.8 1.9 V11.7" stroke="#9a9a9a" stroke-width=".6" opacity="0.26" stroke-dasharray="1.1 0.5"/><path d="M14.3 2.7 V11.7" stroke="#9a9a9a" stroke-width=".6" opacity="0.36" stroke-dasharray="2.9 0.7"/><path d="M15.8 4.4 V14.3" stroke="#9a9a9a" stroke-width=".6" opacity="0.45" stroke-dasharray="2.2 1.3"/><path d="M17.4 3.6 V12.0" stroke="#9a9a9a" stroke-width=".6" opacity="0.37" stroke-dasharray="1.5 0.9"/><path d="M19.0 5.0 V12.9" stroke="#9a9a9a" stroke-width=".6" opacity="0.27" stroke-dasharray="2.0 1.3"/><path d="M20.5 3.1 V14.2" stroke="#9a9a9a" stroke-width=".6" opacity="0.28" stroke-dasharray="1.1 1.2"/><path d="M22.1 1.7 V12.4" stroke="#9a9a9a" stroke-width=".6" opacity="0.38" stroke-dasharray="1.4 0.5"/><path d="M23.6 1.5 V15.3" stroke="#9a9a9a" stroke-width=".6" opacity="0.49" stroke-dasharray="2.9 1.0"/><path d="M25.2 4.8 V14.9" stroke="#9a9a9a" stroke-width=".6" opacity="0.47" stroke-dasharray="2.1 1.0"/></svg>
<div class="a" style="left:162px;top:160px;width:30px;height:30px;background:#545454;box-shadow:0 0 0 1px #454545;"></div>
<span class="t" style="top:177.29px;color:#dcdcdc;letter-spacing:0.5px;font-size:10px;left:162.2px;width:30px;text-align:center;">306</span>
<svg class="a" style="left:162px;top:160.6px" width="30" height="18" viewBox="0 0 30 18"><ellipse cx="10" cy="2.6" rx="2.4" ry="1.35" transform="rotate(40 10 2.6)" fill="#fff"/><ellipse cx="14.6" cy="2.2" rx="2.3" ry="1.35" transform="rotate(-60 14.6 2.2)" fill="#fff"/><ellipse cx="19.4" cy="3.2" rx="2.6" ry="1.35" transform="rotate(-30 19.4 3.2)" fill="#fff"/><ellipse cx="8.8" cy="6.6" rx="2.3" ry="1.35" transform="rotate(20 8.8 6.6)" fill="#fff"/><ellipse cx="13.6" cy="6.8" rx="2.6" ry="1.35" transform="rotate(50 13.6 6.8)" fill="#fff"/><ellipse cx="18.4" cy="7.4" rx="2.6" ry="1.35" transform="rotate(-40 18.4 7.4)" fill="#fff"/><ellipse cx="22" cy="6.6" rx="2" ry="1.35" transform="rotate(-70 22 6.6)" fill="#fff"/><ellipse cx="10.6" cy="10.8" rx="2.3" ry="1.35" transform="rotate(30 10.6 10.8)" fill="#fff"/><ellipse cx="15" cy="11.2" rx="2.4" ry="1.35" transform="rotate(70 15 11.2)" fill="#fff"/><ellipse cx="19.6" cy="11" rx="2.2" ry="1.35" transform="rotate(-30 19.6 11)" fill="#fff"/><ellipse cx="14.4" cy="14.8" rx="2" ry="1.35" transform="rotate(80 14.4 14.8)" fill="#fff"/></svg>
<div class="a" style="left:194px;top:160px;width:30px;height:30px;background:#545454;box-shadow:0 0 0 1px #454545;"></div>
<span class="t" style="top:177.29px;color:#dcdcdc;letter-spacing:0.5px;font-size:10px;left:194.2px;width:30px;text-align:center;">50</span>
<svg class="a" style="left:194px;top:160.6px" width="30" height="18" viewBox="0 0 30 18"><circle cx="15" cy="8.2" r="8.3" fill="url(#hg)"/></svg>
<div class="a" style="left:226px;top:160px;width:30px;height:30px;background:#545454;box-shadow:0 0 0 1px #454545;"></div>
<span class="t" style="top:177.29px;color:#dcdcdc;letter-spacing:0.5px;font-size:10px;left:226.2px;width:30px;text-align:center;">200</span>
<svg class="a" style="left:226px;top:160.6px" width="30" height="18" viewBox="0 0 30 18"><rect x="7" y="-0.6" width="17" height="16.8" fill="#6c6c6c"/><path transform="translate(1.1 0)" d="M7.8 5 C8.4 2.2 10.6 0.2 12.6 0.1 C14.6 0.1 16.2 1.2 17 2.8 C15.4 2.2 13.8 2.3 12.6 2.8 C10.8 3.4 9.6 4.4 8.8 5.4 Z M17 3.6 C12.8 4.8 9.6 9 9.1 16.4 C13.4 14.4 16.8 10.8 17.7 5 Z M18.3 3.4 C17.2 7.6 18.6 12 21.9 14.6 C23 10.4 21.6 5.8 19.3 3.2 Z M21.2 3.4 C22.8 5 23.6 7.4 23.4 10.2 C23 8.2 22.4 6.2 21 4.4 Z" fill="#fff"/></svg>
<div class="a" style="left:258px;top:160px;width:30px;height:30px;background:#545454;box-shadow:0 0 0 1px #454545;"></div>
<span class="t" style="top:177.29px;color:#dcdcdc;letter-spacing:0.5px;font-size:10px;left:258.2px;width:30px;text-align:center;">200</span>
<svg class="a" style="left:258px;top:160.6px" width="30" height="18" viewBox="0 0 30 18"><rect x="7" y="-0.6" width="17" height="16.8" fill="#f6f6f6"/><path transform="translate(1.1 0)" d="M7.8 5 C8.4 2.2 10.6 0.2 12.6 0.1 C14.6 0.1 16.2 1.2 17 2.8 C15.4 2.2 13.8 2.3 12.6 2.8 C10.8 3.4 9.6 4.4 8.8 5.4 Z M17 3.6 C12.8 4.8 9.6 9 9.1 16.4 C13.4 14.4 16.8 10.8 17.7 5 Z M18.3 3.4 C17.2 7.6 18.6 12 21.9 14.6 C23 10.4 21.6 5.8 19.3 3.2 Z M21.2 3.4 C22.8 5 23.6 7.4 23.4 10.2 C23 8.2 22.4 6.2 21 4.4 Z" fill="#4a4a4a"/></svg>
<div class="a" style="left:290px;top:160px;width:30px;height:30px;background:#545454;box-shadow:0 0 0 1px #454545;"></div>
<span class="t" style="top:177.29px;color:#dcdcdc;letter-spacing:0.5px;font-size:10px;left:290.2px;width:30px;text-align:center;"><span style="margin:0 -0.5px">1</span>76</span>
<svg class="a" style="left:290px;top:160.6px" width="30" height="18" viewBox="0 0 30 18"><path d="M7.8 5 C8.4 2.2 10.6 0.2 12.6 0.1 C14.6 0.1 16.2 1.2 17 2.8 C15.4 2.2 13.8 2.3 12.6 2.8 C10.8 3.4 9.6 4.4 8.8 5.4 Z M17 3.6 C12.8 4.8 9.6 9 9.1 16.4 C13.4 14.4 16.8 10.8 17.7 5 Z M18.3 3.4 C17.2 7.6 18.6 12 21.9 14.6 C23 10.4 21.6 5.8 19.3 3.2 Z M21.2 3.4 C22.8 5 23.6 7.4 23.4 10.2 C23 8.2 22.4 6.2 21 4.4 Z" fill="#fff"/></svg>
<div class="a" style="left:322px;top:160px;width:30px;height:30px;background:#545454;box-shadow:0 0 0 1px #454545;"></div>
<span class="t" style="top:177.29px;color:#dcdcdc;letter-spacing:0.5px;font-size:10px;left:322.2px;width:30px;text-align:center;"><span style="margin:0 -0.5px">1</span>40</span>
<svg class="a" style="left:322px;top:160.6px" width="30" height="18" viewBox="0 0 30 18"><path d="M15.4 0.6 H20.4 V11.2 H18.6 V16.6 H11.6 V6.4 H13.4 V5.8 H15.4 Z" fill="#fff"/><path d="M13.6 6.4 L15.6 6.2 L15.4 9.4 L18.4 9 L18.4 11.2" fill="none" stroke="#474747" stroke-width=".7"/></svg>
<div class="a" style="left:162px;top:192px;width:30px;height:30px;background:#545454;box-shadow:0 0 0 1px #454545;"></div>
<span class="t" style="top:209.29px;color:#dcdcdc;letter-spacing:0.5px;font-size:10px;left:162.2px;width:30px;text-align:center;"><span style="margin:0 -0.5px">1</span>76</span>
<svg class="a" style="left:162px;top:192.6px" width="30" height="18" viewBox="0 0 30 18"><path d="M-13.00 -29.70C-10.82 -29.62 -7.45 -29.00 -4.80 -27.70C-2.15 -26.40 0.65 -24.15 2.90 -21.90C5.15 -19.65 7.33 -16.45 8.70 -14.20C10.07 -11.95 10.65 -10.10 11.10 -8.40C11.55 -6.70 11.32 -5.13 11.40 -4.00C11.48 -2.87 11.60 -1.60 11.60 -1.60C11.60 -1.60 13.68 -3.40 14.80 -3.50C15.92 -3.60 16.90 -3.32 18.30 -2.20C19.70 -1.08 21.75 1.02 23.20 3.20C24.65 5.38 26.12 8.65 27.00 10.90C27.88 13.15 28.33 15.10 28.50 16.70C28.67 18.30 28.32 19.47 28.00 20.50C27.68 21.53 27.13 22.00 26.60 22.90C26.07 23.80 24.80 25.90 24.80 25.90C24.80 25.90 21.93 25.93 20.30 25.70C18.67 25.47 16.25 24.63 15.00 24.50C13.75 24.37 12.80 24.90 12.80 24.90C12.80 24.90 14.07 27.30 14.20 28.10C14.33 28.90 13.60 29.70 13.60 29.70C13.60 29.70 12.17 28.93 11.40 28.10C10.63 27.27 9.00 24.70 9.00 24.70C9.00 24.70 6.47 23.60 4.80 23.10C3.13 22.60 0.77 22.02 -1.00 21.70C-2.77 21.38 -4.35 21.43 -5.80 21.20C-7.25 20.97 -8.47 20.60 -9.70 20.30C-10.93 20.00 -12.33 19.83 -13.20 19.40C-14.07 18.97 -14.53 18.25 -14.90 17.70C-15.27 17.15 -15.40 16.10 -15.40 16.10C-15.40 16.10 -27.50 17.10 -27.50 17.10C-27.50 17.10 -27.60 16.10 -27.60 16.10C-27.60 16.10 -16.20 14.70 -16.20 14.70C-16.20 14.70 -26.90 13.00 -26.90 13.00C-26.90 13.00 -26.80 12.00 -26.80 12.00C-26.80 12.00 -15.20 13.10 -15.20 13.10C-15.20 13.10 -18.65 10.90 -20.30 9.40C-21.95 7.90 -23.77 5.78 -25.10 4.10C-26.43 2.42 -27.83 0.50 -28.30 -0.70C-28.77 -1.90 -28.43 -2.48 -27.90 -3.10C-27.37 -3.72 -26.32 -4.27 -25.10 -4.40C-23.88 -4.53 -21.55 -3.75 -20.60 -3.90C-19.65 -4.05 -19.40 -5.30 -19.40 -5.30C-19.40 -5.30 -20.73 -8.43 -21.20 -10.40C-21.67 -12.37 -22.20 -14.85 -22.20 -17.10C-22.20 -19.35 -21.92 -22.05 -21.20 -23.90C-20.48 -25.75 -19.27 -27.23 -17.90 -28.20C-16.53 -29.17 -15.18 -29.78 -13.00 -29.70Z" fill="#fff" transform="translate(15.4 8.6) scale(-.272 .272)"/></svg>
<div class="a" style="left:194px;top:192px;width:30px;height:30px;background:#545454;box-shadow:0 0 0 1px #454545;"></div>
<span class="t" style="top:209.29px;color:#dcdcdc;letter-spacing:0.5px;font-size:10px;left:194.2px;width:30px;text-align:center;"><span style="margin:0 -0.5px">1</span>6</span>
<svg class="a" style="left:194px;top:192.6px" width="30" height="18" viewBox="0 0 30 18"><circle cx="15.7" cy="2.7" r="0.55" fill="#fff" opacity="0.65"/><circle cx="18.9" cy="3.2" r="0.64" fill="#fff" opacity="0.94"/><circle cx="9.2" cy="10.2" r="0.38" fill="#fff" opacity="0.76"/><circle cx="20.2" cy="3.0" r="0.38" fill="#fff" opacity="0.54"/><circle cx="8.5" cy="8.0" r="0.36" fill="#fff" opacity="0.56"/><circle cx="17.9" cy="5.0" r="0.42" fill="#fff" opacity="0.67"/><circle cx="20.1" cy="4.7" r="0.53" fill="#fff" opacity="0.97"/><circle cx="16.1" cy="4.9" r="0.35" fill="#fff" opacity="0.83"/><circle cx="10.2" cy="6.6" r="0.59" fill="#fff" opacity="0.89"/><circle cx="11.7" cy="6.1" r="0.40" fill="#fff" opacity="0.65"/><circle cx="15.0" cy="2.5" r="0.34" fill="#fff" opacity="0.57"/><circle cx="12.5" cy="8.5" r="0.41" fill="#fff" opacity="0.72"/><circle cx="19.1" cy="12.1" r="0.45" fill="#fff" opacity="0.94"/><circle cx="17.7" cy="6.6" r="0.45" fill="#fff" opacity="0.63"/><circle cx="18.9" cy="3.6" r="0.50" fill="#fff" opacity="0.86"/><circle cx="10.0" cy="3.0" r="0.40" fill="#fff" opacity="0.91"/><circle cx="16.2" cy="11.4" r="0.45" fill="#fff" opacity="0.76"/><circle cx="22.1" cy="6.4" r="0.45" fill="#fff" opacity="0.83"/><circle cx="15.4" cy="1.4" r="0.33" fill="#fff" opacity="0.51"/><circle cx="13.0" cy="2.1" r="0.58" fill="#fff" opacity="0.80"/><circle cx="15.2" cy="12.9" r="0.33" fill="#fff" opacity="0.73"/><circle cx="16.3" cy="7.8" r="0.38" fill="#fff" opacity="0.89"/><circle cx="16.5" cy="3.6" r="0.38" fill="#fff" opacity="0.52"/><circle cx="22.2" cy="6.9" r="0.40" fill="#fff" opacity="0.51"/><circle cx="17.5" cy="2.0" r="0.38" fill="#fff" opacity="0.97"/><circle cx="12.3" cy="11.9" r="0.53" fill="#fff" opacity="0.53"/><circle cx="11.1" cy="5.4" r="0.59" fill="#fff" opacity="0.78"/><circle cx="8.7" cy="9.3" r="0.33" fill="#fff" opacity="0.91"/><circle cx="16.7" cy="12.8" r="0.34" fill="#fff" opacity="0.91"/><circle cx="9.0" cy="6.3" r="0.57" fill="#fff" opacity="0.73"/><circle cx="17.6" cy="7.5" r="0.53" fill="#fff" opacity="0.90"/><circle cx="14.7" cy="3.5" r="0.31" fill="#fff" opacity="0.73"/><circle cx="10.9" cy="5.3" r="0.37" fill="#fff" opacity="0.59"/><circle cx="15.5" cy="13.6" r="0.52" fill="#fff" opacity="0.61"/><circle cx="17.5" cy="8.7" r="0.48" fill="#fff" opacity="0.78"/><circle cx="17.7" cy="12.2" r="0.32" fill="#fff" opacity="0.99"/><circle cx="16.8" cy="6.2" r="0.34" fill="#fff" opacity="0.61"/><circle cx="10.9" cy="2.2" r="0.46" fill="#fff" opacity="0.86"/></svg>
<div class="a" style="left:226px;top:192px;width:30px;height:30px;background:#545454;box-shadow:0 0 0 1px #454545;"></div>
<span class="t" style="top:209.29px;color:#dcdcdc;letter-spacing:0.5px;font-size:10px;left:226.2px;width:30px;text-align:center;">80</span>
<svg class="a" style="left:226px;top:192.6px" width="30" height="18" viewBox="0 0 30 18"><circle cx="8.6" cy="6.4" r="0.41" fill="#fff" opacity="0.85"/><circle cx="15.7" cy="2.4" r="0.37" fill="#fff" opacity="0.84"/><circle cx="10.0" cy="10.0" r="0.67" fill="#fff" opacity="0.70"/><circle cx="21.2" cy="8.5" r="0.64" fill="#fff" opacity="0.64"/><circle cx="11.5" cy="3.3" r="0.56" fill="#fff" opacity="0.63"/><circle cx="19.9" cy="4.8" r="0.55" fill="#fff" opacity="0.97"/><circle cx="17.4" cy="9.2" r="0.69" fill="#fff" opacity="0.95"/><circle cx="10.8" cy="10.4" r="0.38" fill="#fff" opacity="0.55"/><circle cx="17.0" cy="5.4" r="0.59" fill="#fff" opacity="0.53"/><circle cx="11.6" cy="6.7" r="0.66" fill="#fff" opacity="0.82"/><circle cx="15.5" cy="6.0" r="0.83" fill="#fff" opacity="0.87"/><circle cx="16.3" cy="7.9" r="0.42" fill="#fff" opacity="0.52"/><circle cx="8.9" cy="12.3" r="0.76" fill="#fff" opacity="0.44"/><circle cx="18.6" cy="6.0" r="0.68" fill="#fff" opacity="0.66"/><circle cx="12.7" cy="2.6" r="0.45" fill="#fff" opacity="0.66"/><circle cx="19.0" cy="3.6" r="0.57" fill="#fff" opacity="0.98"/><circle cx="9.1" cy="6.4" r="0.78" fill="#fff" opacity="0.79"/><circle cx="22.7" cy="8.6" r="0.67" fill="#fff" opacity="0.54"/><circle cx="14.0" cy="7.7" r="0.79" fill="#fff" opacity="0.80"/><circle cx="13.5" cy="11.7" r="0.66" fill="#fff" opacity="0.83"/><circle cx="10.3" cy="4.7" r="0.65" fill="#fff" opacity="0.66"/><circle cx="11.6" cy="12.1" r="0.83" fill="#fff" opacity="0.81"/><circle cx="23.1" cy="9.9" r="0.58" fill="#fff" opacity="0.47"/><circle cx="16.6" cy="12.0" r="0.64" fill="#fff" opacity="0.84"/><circle cx="13.5" cy="2.1" r="0.61" fill="#fff" opacity="0.61"/><circle cx="16.6" cy="12.7" r="0.82" fill="#fff" opacity="0.95"/><circle cx="17.9" cy="7.7" r="0.62" fill="#fff" opacity="0.95"/><circle cx="7.6" cy="2.2" r="0.39" fill="#fff" opacity="0.67"/><circle cx="23.3" cy="11.9" r="0.63" fill="#fff" opacity="0.97"/><circle cx="19.1" cy="10.9" r="0.48" fill="#fff" opacity="0.47"/><circle cx="11.0" cy="11.4" r="0.79" fill="#fff" opacity="0.76"/><circle cx="9.9" cy="6.3" r="0.49" fill="#fff" opacity="0.75"/><circle cx="19.7" cy="11.4" r="0.65" fill="#fff" opacity="0.59"/><circle cx="13.2" cy="4.2" r="0.41" fill="#fff" opacity="0.42"/><circle cx="9.5" cy="12.1" r="0.60" fill="#fff" opacity="0.98"/><circle cx="15.7" cy="4.9" r="0.49" fill="#fff" opacity="0.68"/><circle cx="17.8" cy="5.1" r="0.71" fill="#fff" opacity="0.41"/><circle cx="18.3" cy="4.0" r="0.41" fill="#fff" opacity="0.89"/><circle cx="19.6" cy="4.4" r="0.37" fill="#fff" opacity="0.84"/><circle cx="22.2" cy="2.9" r="0.83" fill="#fff" opacity="0.86"/><circle cx="11.3" cy="2.3" r="0.70" fill="#fff" opacity="0.61"/><circle cx="11.9" cy="12.7" r="0.42" fill="#fff" opacity="0.60"/><circle cx="16.4" cy="12.3" r="0.38" fill="#fff" opacity="0.44"/><circle cx="8.9" cy="4.5" r="0.52" fill="#fff" opacity="0.68"/><circle cx="13.2" cy="4.0" r="0.63" fill="#fff" opacity="0.51"/><circle cx="12.2" cy="2.8" r="0.38" fill="#fff" opacity="0.67"/><circle cx="14.2" cy="9.0" r="0.81" fill="#fff" opacity="0.85"/><circle cx="9.7" cy="9.8" r="0.66" fill="#fff" opacity="0.86"/><circle cx="7.7" cy="5.0" r="0.81" fill="#fff" opacity="0.94"/><circle cx="9.5" cy="3.9" r="0.44" fill="#fff" opacity="0.60"/><circle cx="22.3" cy="6.0" r="0.59" fill="#fff" opacity="0.95"/><circle cx="20.1" cy="4.4" r="0.67" fill="#fff" opacity="0.58"/><circle cx="10.6" cy="7.1" r="0.80" fill="#fff" opacity="0.69"/><circle cx="21.8" cy="7.3" r="0.40" fill="#fff" opacity="0.98"/><circle cx="8.3" cy="11.9" r="0.56" fill="#fff" opacity="0.88"/><circle cx="23.2" cy="3.8" r="0.82" fill="#fff" opacity="0.41"/><circle cx="8.0" cy="2.6" r="0.52" fill="#fff" opacity="0.71"/><circle cx="10.9" cy="9.9" r="0.61" fill="#fff" opacity="0.70"/><circle cx="8.0" cy="2.8" r="0.70" fill="#fff" opacity="0.89"/><circle cx="23.0" cy="7.3" r="0.37" fill="#fff" opacity="0.68"/><circle cx="14.4" cy="7.6" r="0.61" fill="#fff" opacity="0.62"/><circle cx="11.5" cy="7.9" r="0.46" fill="#fff" opacity="0.56"/><circle cx="12.0" cy="9.5" r="0.65" fill="#fff" opacity="0.74"/><circle cx="7.7" cy="7.5" r="0.62" fill="#fff" opacity="0.83"/><circle cx="18.3" cy="7.7" r="0.45" fill="#fff" opacity="0.53"/><circle cx="12.8" cy="10.0" r="0.44" fill="#fff" opacity="0.61"/><circle cx="19.2" cy="8.4" r="0.59" fill="#fff" opacity="0.67"/><circle cx="15.9" cy="7.5" r="0.74" fill="#fff" opacity="0.91"/><circle cx="10.8" cy="4.2" r="0.65" fill="#fff" opacity="0.73"/><circle cx="18.0" cy="4.7" r="0.49" fill="#fff" opacity="0.46"/><circle cx="12.1" cy="8.1" r="0.42" fill="#fff" opacity="1.00"/><circle cx="10.9" cy="10.3" r="0.53" fill="#fff" opacity="0.57"/><circle cx="14.0" cy="4.8" r="0.70" fill="#fff" opacity="0.63"/><circle cx="19.4" cy="11.5" r="0.80" fill="#fff" opacity="0.98"/><circle cx="22.6" cy="8.6" r="0.67" fill="#fff" opacity="0.57"/><circle cx="18.6" cy="6.8" r="0.36" fill="#fff" opacity="0.77"/><circle cx="17.0" cy="5.2" r="0.65" fill="#fff" opacity="0.90"/><circle cx="12.2" cy="9.0" r="0.52" fill="#fff" opacity="0.65"/><circle cx="8.7" cy="5.5" r="0.57" fill="#fff" opacity="0.72"/><circle cx="14.2" cy="2.2" r="0.54" fill="#fff" opacity="0.66"/></svg>
<div class="a" style="left:258px;top:192px;width:30px;height:30px;background:#545454;box-shadow:0 0 0 1px #454545;"></div>
<span class="t" style="top:209.29px;color:#dcdcdc;letter-spacing:0.5px;font-size:10px;left:258.2px;width:30px;text-align:center;">25</span>
<svg class="a" style="left:258px;top:192.6px" width="30" height="18" viewBox="0 0 30 18"><circle cx="15.0" cy="5.8" r="0.64" fill="#fff" opacity="0.70"/><circle cx="14.8" cy="12.5" r="0.39" fill="#fff" opacity="0.73"/><circle cx="16.6" cy="4.0" r="0.42" fill="#fff" opacity="0.93"/><circle cx="13.4" cy="9.0" r="0.62" fill="#fff" opacity="0.85"/><circle cx="16.8" cy="11.1" r="0.71" fill="#fff" opacity="0.86"/><circle cx="14.4" cy="5.4" r="0.47" fill="#fff" opacity="0.97"/><circle cx="16.8" cy="4.2" r="0.76" fill="#fff" opacity="0.71"/><circle cx="16.8" cy="7.6" r="0.47" fill="#fff" opacity="0.68"/><circle cx="15.7" cy="7.2" r="0.63" fill="#fff" opacity="0.88"/><circle cx="17.9" cy="11.4" r="0.63" fill="#fff" opacity="0.99"/><circle cx="15.0" cy="11.7" r="0.72" fill="#fff" opacity="0.93"/><circle cx="11.6" cy="8.7" r="0.58" fill="#fff" opacity="0.64"/><circle cx="13.8" cy="8.2" r="0.35" fill="#fff" opacity="0.60"/><circle cx="15.8" cy="7.1" r="0.79" fill="#fff" opacity="0.94"/><circle cx="18.0" cy="10.9" r="0.45" fill="#fff" opacity="0.89"/><circle cx="13.9" cy="5.6" r="0.37" fill="#fff" opacity="0.81"/><circle cx="15.3" cy="7.7" r="0.54" fill="#fff" opacity="0.93"/><circle cx="14.7" cy="7.1" r="0.51" fill="#fff" opacity="0.91"/><circle cx="10.6" cy="7.5" r="0.64" fill="#fff" opacity="0.60"/><circle cx="13.3" cy="6.5" r="0.64" fill="#fff" opacity="0.81"/><circle cx="15.0" cy="6.1" r="0.54" fill="#fff" opacity="0.97"/><circle cx="11.7" cy="6.2" r="0.68" fill="#fff" opacity="0.98"/><circle cx="10.5" cy="8.0" r="0.46" fill="#fff" opacity="0.96"/><circle cx="10.6" cy="7.9" r="0.54" fill="#fff" opacity="0.82"/><circle cx="16.0" cy="11.1" r="0.50" fill="#fff" opacity="0.75"/><circle cx="10.8" cy="8.3" r="0.72" fill="#fff" opacity="0.79"/><circle cx="18.2" cy="10.0" r="0.46" fill="#fff" opacity="0.81"/><circle cx="11.5" cy="8.6" r="0.36" fill="#fff" opacity="0.72"/><circle cx="14.9" cy="7.7" r="0.48" fill="#fff" opacity="0.87"/><circle cx="12.7" cy="10.7" r="0.72" fill="#fff" opacity="0.83"/><circle cx="15.6" cy="5.0" r="0.40" fill="#fff" opacity="0.71"/><circle cx="13.0" cy="12.1" r="0.71" fill="#fff" opacity="0.87"/><circle cx="19.3" cy="7.9" r="0.69" fill="#fff" opacity="0.96"/><circle cx="15.2" cy="7.9" r="0.42" fill="#fff" opacity="0.97"/><circle cx="13.5" cy="5.1" r="0.45" fill="#fff" opacity="0.91"/><circle cx="13.1" cy="9.7" r="0.64" fill="#fff" opacity="0.98"/><circle cx="16.9" cy="7.4" r="0.47" fill="#fff" opacity="0.80"/><circle cx="12.3" cy="6.7" r="0.52" fill="#fff" opacity="0.62"/><circle cx="13.7" cy="9.2" r="0.36" fill="#fff" opacity="0.75"/><circle cx="15.9" cy="7.3" r="0.40" fill="#fff" opacity="0.79"/><circle cx="12.7" cy="9.2" r="0.66" fill="#fff" opacity="0.82"/><circle cx="18.3" cy="10.8" r="0.40" fill="#fff" opacity="0.99"/><circle cx="16.5" cy="8.3" r="0.56" fill="#fff" opacity="0.92"/><circle cx="13.2" cy="9.6" r="0.52" fill="#fff" opacity="0.82"/><circle cx="16.0" cy="8.3" r="0.62" fill="#fff" opacity="0.62"/><circle cx="12.4" cy="6.9" r="0.50" fill="#fff" opacity="0.75"/><circle cx="13.3" cy="6.2" r="0.56" fill="#fff" opacity="0.66"/><circle cx="16.5" cy="10.9" r="0.50" fill="#fff" opacity="0.96"/><circle cx="14.4" cy="7.7" r="0.36" fill="#fff" opacity="0.68"/><circle cx="16.2" cy="10.5" r="0.49" fill="#fff" opacity="0.93"/><circle cx="16.4" cy="3.5" r="0.46" fill="#fff" opacity="1.00"/><circle cx="15.2" cy="3.2" r="0.65" fill="#fff" opacity="0.75"/><circle cx="14.1" cy="9.7" r="0.50" fill="#fff" opacity="0.96"/><circle cx="15.9" cy="6.5" r="0.48" fill="#fff" opacity="0.97"/><circle cx="16.3" cy="12.6" r="0.43" fill="#fff" opacity="0.77"/><circle cx="17.4" cy="7.6" r="0.76" fill="#fff" opacity="0.90"/><circle cx="13.4" cy="6.8" r="0.61" fill="#fff" opacity="1.00"/><circle cx="16.4" cy="7.1" r="0.65" fill="#fff" opacity="0.64"/><circle cx="15.4" cy="9.1" r="0.69" fill="#fff" opacity="0.97"/><circle cx="10.9" cy="9.4" r="0.57" fill="#fff" opacity="0.71"/><circle cx="14.9" cy="4.4" r="0.30" fill="#fff" opacity="0.85"/><circle cx="16.7" cy="1.7" r="0.34" fill="#fff" opacity="0.44"/><circle cx="13.0" cy="6.0" r="0.26" fill="#fff" opacity="0.44"/><circle cx="14.1" cy="15.4" r="0.32" fill="#fff" opacity="0.86"/><circle cx="9.2" cy="12.8" r="0.28" fill="#fff" opacity="0.74"/><circle cx="21.3" cy="3.9" r="0.50" fill="#fff" opacity="0.75"/><circle cx="13.9" cy="6.9" r="0.36" fill="#fff" opacity="0.52"/><circle cx="21.4" cy="11.2" r="0.44" fill="#fff" opacity="0.81"/><circle cx="11.4" cy="11.2" r="0.44" fill="#fff" opacity="0.58"/><circle cx="17.3" cy="9.4" r="0.47" fill="#fff" opacity="0.65"/><circle cx="13.3" cy="9.9" r="0.44" fill="#fff" opacity="0.74"/><circle cx="13.4" cy="9.3" r="0.48" fill="#fff" opacity="0.73"/><circle cx="18.6" cy="3.1" r="0.37" fill="#fff" opacity="0.66"/><circle cx="11.7" cy="8.9" r="0.27" fill="#fff" opacity="0.47"/><circle cx="13.0" cy="12.7" r="0.47" fill="#fff" opacity="0.54"/><circle cx="13.4" cy="6.4" r="0.31" fill="#fff" opacity="0.46"/><circle cx="19.4" cy="5.6" r="0.29" fill="#fff" opacity="0.79"/><circle cx="18.5" cy="4.2" r="0.43" fill="#fff" opacity="0.83"/><circle cx="15.6" cy="12.6" r="0.33" fill="#fff" opacity="0.80"/><circle cx="19.4" cy="12.9" r="0.39" fill="#fff" opacity="0.56"/><circle cx="13.0" cy="11.7" r="0.39" fill="#fff" opacity="0.76"/><circle cx="18.3" cy="11.1" r="0.36" fill="#fff" opacity="0.89"/><circle cx="17.3" cy="8.3" r="0.32" fill="#fff" opacity="0.61"/><circle cx="22.4" cy="6.3" r="0.35" fill="#fff" opacity="0.46"/><circle cx="12.5" cy="1.4" r="0.32" fill="#fff" opacity="0.62"/><circle cx="15.7" cy="2.0" r="0.37" fill="#fff" opacity="0.90"/><circle cx="18.1" cy="14.1" r="0.42" fill="#fff" opacity="0.49"/><circle cx="14.3" cy="3.4" r="0.40" fill="#fff" opacity="0.42"/><circle cx="16.5" cy="12.3" r="0.34" fill="#fff" opacity="0.76"/><circle cx="9.6" cy="8.7" r="0.45" fill="#fff" opacity="0.88"/><circle cx="19.7" cy="7.8" r="0.36" fill="#fff" opacity="0.63"/><circle cx="13.4" cy="5.5" r="0.37" fill="#fff" opacity="0.48"/><circle cx="18.0" cy="3.5" r="0.38" fill="#fff" opacity="0.65"/><circle cx="9.6" cy="8.6" r="0.35" fill="#fff" opacity="0.60"/><circle cx="18.5" cy="6.4" r="0.46" fill="#fff" opacity="0.87"/><circle cx="10.1" cy="3.0" r="0.35" fill="#fff" opacity="0.73"/></svg>
<div class="a" style="left:290px;top:192px;width:30px;height:30px;background:#545454;box-shadow:0 0 0 1px #454545;"></div>
<span class="t" style="top:209.29px;color:#dcdcdc;letter-spacing:0.5px;font-size:10px;left:290.2px;width:30px;text-align:center;"><span style="margin:0 -0.5px">1</span>20</span>
<svg class="a" style="left:290px;top:192.6px" width="30" height="18" viewBox="0 0 30 18"><circle cx="12.2" cy="8.6" r="0.60" fill="#fff" opacity="0.91"/><circle cx="12.1" cy="9.3" r="1.06" fill="#fff" opacity="0.70"/><circle cx="16.0" cy="10.3" r="0.85" fill="#fff" opacity="0.68"/><circle cx="15.1" cy="12.8" r="0.61" fill="#fff" opacity="0.81"/><circle cx="13.8" cy="12.4" r="1.06" fill="#fff" opacity="0.88"/><circle cx="11.6" cy="12.0" r="0.76" fill="#fff" opacity="0.92"/><circle cx="15.0" cy="14.0" r="1.09" fill="#fff" opacity="0.91"/><circle cx="19.4" cy="12.8" r="0.86" fill="#fff" opacity="0.59"/><circle cx="21.4" cy="8.1" r="0.51" fill="#fff" opacity="0.72"/><circle cx="14.3" cy="4.7" r="1.08" fill="#fff" opacity="0.56"/><circle cx="20.4" cy="9.3" r="0.61" fill="#fff" opacity="0.68"/><circle cx="14.8" cy="3.6" r="0.96" fill="#fff" opacity="0.83"/><circle cx="20.8" cy="10.5" r="0.82" fill="#fff" opacity="0.76"/><circle cx="19.5" cy="13.1" r="0.52" fill="#fff" opacity="0.71"/><circle cx="10.3" cy="9.7" r="0.85" fill="#fff" opacity="0.78"/><circle cx="19.8" cy="5.0" r="0.94" fill="#fff" opacity="0.79"/><circle cx="9.9" cy="8.1" r="0.82" fill="#fff" opacity="0.80"/><circle cx="21.4" cy="9.3" r="1.03" fill="#fff" opacity="0.65"/><circle cx="15.2" cy="3.9" r="0.88" fill="#fff" opacity="0.71"/><circle cx="18.9" cy="3.5" r="0.78" fill="#fff" opacity="0.98"/><circle cx="17.6" cy="11.6" r="0.83" fill="#fff" opacity="0.75"/><circle cx="17.9" cy="10.8" r="0.94" fill="#fff" opacity="0.74"/><circle cx="12.7" cy="12.3" r="1.09" fill="#fff" opacity="0.89"/><circle cx="14.2" cy="13.3" r="0.73" fill="#fff" opacity="0.66"/><circle cx="16.3" cy="10.6" r="0.91" fill="#fff" opacity="0.78"/><circle cx="14.3" cy="11.8" r="0.69" fill="#fff" opacity="0.80"/><circle cx="20.0" cy="4.8" r="0.75" fill="#fff" opacity="0.53"/><circle cx="18.7" cy="6.3" r="0.53" fill="#fff" opacity="0.64"/><circle cx="10.1" cy="8.4" r="0.82" fill="#fff" opacity="0.89"/><circle cx="11.0" cy="12.9" r="0.66" fill="#fff" opacity="0.87"/><circle cx="20.7" cy="9.8" r="0.50" fill="#fff" opacity="0.83"/><circle cx="14.6" cy="11.6" r="0.97" fill="#fff" opacity="0.55"/><circle cx="16.2" cy="10.5" r="1.06" fill="#fff" opacity="0.81"/><circle cx="16.8" cy="12.1" r="0.60" fill="#fff" opacity="0.93"/><circle cx="16.4" cy="10.4" r="0.59" fill="#fff" opacity="0.76"/><circle cx="14.3" cy="4.7" r="1.06" fill="#fff" opacity="0.92"/><circle cx="14.9" cy="3.0" r="1.09" fill="#fff" opacity="0.56"/><circle cx="15.5" cy="9.5" r="1.01" fill="#fff" opacity="0.83"/><circle cx="16.7" cy="8.8" r="1.09" fill="#fff" opacity="0.91"/><circle cx="13.6" cy="12.5" r="1.07" fill="#fff" opacity="0.74"/><circle cx="19.2" cy="4.5" r="0.63" fill="#fff" opacity="0.58"/><circle cx="15.0" cy="12.7" r="0.82" fill="#fff" opacity="0.50"/><circle cx="12.9" cy="3.1" r="0.82" fill="#fff" opacity="0.89"/><circle cx="13.0" cy="3.8" r="0.61" fill="#fff" opacity="0.74"/><circle cx="18.6" cy="11.0" r="0.83" fill="#fff" opacity="0.69"/><circle cx="9.6" cy="8.7" r="0.75" fill="#fff" opacity="0.84"/><circle cx="9.4" cy="8.4" r="0.54" fill="#fff" opacity="0.77"/><circle cx="14.6" cy="6.4" r="0.61" fill="#fff" opacity="0.96"/><circle cx="15.2" cy="3.3" r="0.85" fill="#fff" opacity="0.88"/><circle cx="15.3" cy="13.8" r="1.00" fill="#fff" opacity="0.84"/><circle cx="9.5" cy="7.3" r="0.81" fill="#fff" opacity="0.58"/><circle cx="15.4" cy="10.8" r="0.95" fill="#fff" opacity="0.88"/><circle cx="18.5" cy="6.0" r="0.87" fill="#fff" opacity="0.75"/><circle cx="18.6" cy="3.6" r="0.61" fill="#fff" opacity="0.86"/><circle cx="18.2" cy="5.0" r="0.96" fill="#fff" opacity="0.89"/><circle cx="17.2" cy="8.1" r="0.53" fill="#fff" opacity="0.62"/><circle cx="13.5" cy="14.4" r="0.63" fill="#fff" opacity="0.97"/><circle cx="18.9" cy="13.1" r="1.09" fill="#fff" opacity="0.84"/><circle cx="11.7" cy="7.7" r="0.74" fill="#fff" opacity="0.83"/><circle cx="13.6" cy="11.7" r="0.52" fill="#fff" opacity="0.61"/><circle cx="12.6" cy="5.3" r="0.90" fill="#777" opacity="0.85"/><circle cx="11.3" cy="8.4" r="0.60" fill="#777" opacity="0.60"/><circle cx="11.8" cy="10.5" r="0.93" fill="#777" opacity="0.84"/><circle cx="13.1" cy="7.7" r="0.69" fill="#777" opacity="0.77"/><circle cx="12.7" cy="11.3" r="0.79" fill="#777" opacity="0.72"/><circle cx="13.1" cy="10.9" r="0.71" fill="#777" opacity="0.50"/><circle cx="18.9" cy="5.5" r="0.71" fill="#777" opacity="0.79"/><circle cx="18.9" cy="7.5" r="0.89" fill="#777" opacity="0.66"/><circle cx="10.6" cy="9.1" r="0.67" fill="#777" opacity="0.58"/><circle cx="14.5" cy="10.0" r="0.69" fill="#777" opacity="0.59"/></svg>
<div class="a" style="left:322px;top:192px;width:30px;height:30px;background:#545454;box-shadow:0 0 0 1px #454545;"></div>
<span class="t" style="top:209.29px;color:#dcdcdc;letter-spacing:0.5px;font-size:10px;left:322.2px;width:30px;text-align:center;">283</span>
<svg class="a" style="left:322px;top:192.6px" width="30" height="18" viewBox="0 0 30 18"><circle cx="21.2" cy="7.8" r="0.72" fill="#fff" opacity="0.70"/><circle cx="11.0" cy="5.7" r="0.57" fill="#fff" opacity="0.52"/><circle cx="11.9" cy="4.7" r="0.64" fill="#fff" opacity="0.71"/><circle cx="18.4" cy="10.5" r="0.69" fill="#fff" opacity="0.77"/><circle cx="10.3" cy="8.3" r="0.52" fill="#fff" opacity="0.59"/><circle cx="20.7" cy="12.6" r="0.58" fill="#fff" opacity="0.71"/><circle cx="19.9" cy="8.4" r="0.48" fill="#fff" opacity="0.59"/><circle cx="9.9" cy="3.3" r="0.31" fill="#fff" opacity="0.80"/><circle cx="13.4" cy="8.8" r="0.46" fill="#fff" opacity="0.77"/><circle cx="21.6" cy="12.2" r="0.32" fill="#fff" opacity="0.98"/><circle cx="23.6" cy="12.7" r="0.48" fill="#fff" opacity="0.98"/><circle cx="22.9" cy="4.1" r="0.59" fill="#fff" opacity="0.92"/><circle cx="21.8" cy="13.9" r="0.51" fill="#fff" opacity="0.84"/><circle cx="9.0" cy="10.4" r="0.32" fill="#fff" opacity="0.86"/><circle cx="24.6" cy="6.1" r="0.29" fill="#fff" opacity="0.52"/><circle cx="17.3" cy="2.9" r="0.62" fill="#fff" opacity="0.80"/><circle cx="17.0" cy="10.5" r="0.33" fill="#fff" opacity="0.73"/><circle cx="8.5" cy="8.7" r="0.65" fill="#fff" opacity="0.58"/><circle cx="13.7" cy="3.7" r="0.38" fill="#fff" opacity="0.92"/><circle cx="12.5" cy="11.8" r="0.69" fill="#fff" opacity="0.92"/><circle cx="11.2" cy="8.7" r="0.41" fill="#fff" opacity="0.94"/><circle cx="13.1" cy="3.1" r="0.45" fill="#fff" opacity="0.54"/><circle cx="11.8" cy="11.0" r="0.41" fill="#fff" opacity="0.59"/><circle cx="25.2" cy="4.5" r="0.65" fill="#fff" opacity="0.84"/><circle cx="18.1" cy="10.2" r="0.54" fill="#fff" opacity="0.92"/><circle cx="20.6" cy="4.6" r="0.58" fill="#fff" opacity="0.75"/><circle cx="16.1" cy="14.9" r="0.28" fill="#fff" opacity="0.86"/><circle cx="24.5" cy="9.6" r="0.28" fill="#fff" opacity="0.89"/><circle cx="12.6" cy="8.3" r="0.66" fill="#fff" opacity="0.66"/><circle cx="12.2" cy="2.3" r="0.42" fill="#fff" opacity="0.55"/><circle cx="20.7" cy="12.9" r="0.28" fill="#fff" opacity="0.76"/><circle cx="22.5" cy="12.1" r="0.38" fill="#fff" opacity="0.77"/><circle cx="20.4" cy="8.3" r="0.75" fill="#fff" opacity="0.96"/><circle cx="8.1" cy="9.3" r="0.54" fill="#fff" opacity="0.63"/><circle cx="19.6" cy="2" r="1.1" fill="#fff"/></svg>
<div class="a" style="left:162px;top:224px;width:30px;height:30px;background:#545454;box-shadow:0 0 0 1px #454545;"></div>
<span class="t" style="top:241.29px;color:#dcdcdc;letter-spacing:0.5px;font-size:10px;left:162.2px;width:30px;text-align:center;"><span style="margin:0 -0.5px">1</span>05</span>
<svg class="a" style="left:162px;top:224.6px" width="30" height="18" viewBox="0 0 30 18"><circle cx="8.6" cy="1.2" r="0.9" fill="#fff" opacity="1"/><circle cx="6.6" cy="2.6" r="0.7" fill="#fff" opacity="0.9"/><circle cx="24.4" cy="4.6" r="0.7" fill="#fff" opacity="0.95"/><circle cx="19" cy="8" r="1.2" fill="#fff" opacity="1"/><circle cx="10" cy="10.2" r="0.9" fill="#fff" opacity="0.75"/><circle cx="18.2" cy="16" r="1.3" fill="#fff" opacity="1"/></svg>
<div class="a" style="left:194px;top:224px;width:30px;height:30px;background:#545454;box-shadow:0 0 0 1px #454545;"></div>
<span class="t" style="top:241.29px;color:#dcdcdc;letter-spacing:0.5px;font-size:10px;left:194.2px;width:30px;text-align:center;">3</span>
<svg class="a" style="left:194px;top:224.6px" width="30" height="18" viewBox="0 0 30 18"><circle cx="15.4" cy="8.6" r="1.05" fill="#fff"/></svg>
<div class="a" style="left:226px;top:224px;width:30px;height:30px;background:#545454;box-shadow:0 0 0 1px #454545;"></div>
<span class="t" style="top:241.29px;color:#dcdcdc;letter-spacing:0.5px;font-size:10px;left:226.2px;width:30px;text-align:center;">2<span style="margin:0 -0.5px">1</span></span>
<svg class="a" style="left:226px;top:224.6px" width="30" height="18" viewBox="0 0 30 18"><circle cx="15" cy="8.6" r="8" fill="url(#sg)"/></svg>
<div class="a" style="left:258px;top:224px;width:30px;height:30px;background:#545454;box-shadow:0 0 0 1px #454545;"></div>
<span class="t" style="top:241.29px;color:#dcdcdc;letter-spacing:0.5px;font-size:10px;left:258.2px;width:30px;text-align:center;">25</span>
<svg class="a" style="left:258px;top:224.6px" width="30" height="18" viewBox="0 0 30 18"><circle cx="15" cy="8.6" r="8" fill="url(#sg)"/></svg>
<div class="a" style="left:290px;top:224px;width:30px;height:30px;background:#545454;box-shadow:0 0 0 1px #454545;"></div>
<span class="t" style="top:241.29px;color:#dcdcdc;letter-spacing:0.5px;font-size:10px;left:290.2px;width:30px;text-align:center;">30</span>
<svg class="a" style="left:290px;top:224.6px" width="30" height="18" viewBox="0 0 30 18"><circle cx="15" cy="8.2" r="8.3" fill="url(#hg)"/></svg>
<!--TIPS-->
<span class="t" style="top:333.06px;color:#dddddd;letter-spacing:-0.46px;font-size:11px;left:159px;">Size</span>
<svg class="a" style="left:287px;top:334px" width="14" height="13" viewBox="0 0 14 13"><path d="M3.9 4.6 A4.2 4.2 0 1 1 8.4 10.0" fill="none" stroke="#ebebeb" stroke-width="1.8"/><path d="M-0.1 6.2 L4.7 2.2 L5.6 8.6 Z" fill="#ebebeb"/><path d="M0.8 11.75 H13.1" stroke="#ebebeb" stroke-width="1"/></svg>
<div class="a" style="left:310.3px;top:331.5px;width:67.3px;height:16.6px;background:#3561ae;"></div>
<div class="a" style="left:311.8px;top:333px;width:64.3px;height:13.6px;background:#454545;"></div>
<div class="a" style="left:313.8px;top:333px;width:28.2px;height:13.2px;background:#dcdcde;"></div>
<span class="t" style="top:333.26px;color:#4c4c4c;letter-spacing:0px;font-size:11px;left:314.6px;-webkit-text-stroke:0;">80 px</span>
<div class="a" style="left:164px;top:358.1px;width:208px;height:3px;background:#747474;border-radius:.8px;"></div>
<svg class="a" style="left:238.40px;top:360.00px" width="13" height="13" viewBox="0 0 13 13"><path d="M6.5 1.1 L11.5 7.2 V9.7 Q11.5 11.5 9.7 11.5 H3.3 Q1.5 11.5 1.5 9.7 V7.2 Z" fill="#f6f6f6" stroke="#262626" stroke-width="1" stroke-linejoin="round"/></svg>
<svg class="a" style="left:159px;top:380.7px" width="10" height="10" viewBox="0 0 10 10"><rect x="0" y="0" width="10" height="10" rx="2" fill="#d9d9d9"/><path d="M2.2 5.1 L4.2 7.2 L7.9 2.7" fill="none" stroke="#222" stroke-width="1.7" stroke-linecap="butt" stroke-linejoin="miter"/></svg>
<span class="t" style="top:379.36px;color:#dddddd;letter-spacing:-0.5px;font-size:11px;left:173.6px;">Flip X</span>
<svg class="a" style="left:207.2px;top:380.7px" width="10" height="10" viewBox="0 0 10 10"><rect x="0.5" y="0.5" width="9" height="9" rx="2" fill="#454545" stroke="#858585" stroke-width="1"/></svg>
<span class="t" style="top:379.36px;color:#dddddd;letter-spacing:-0.5px;font-size:11px;left:221.5px;">Flip Y</span>
<div class="a" style="left:300.3px;top:376.3px;width:75.2px;height:74.8px;background:#4f4f4f;border:1px solid #6c6c6c;border-right:none;"></div>
<svg class="a" style="left:302px;top:378px" width="74" height="74" viewBox="302 378 74 74"><path d="M338.2 390 V441 M313 415.3 H363.5" stroke="#8c8c8c" stroke-width="1" fill="none"/><circle cx="338.2" cy="415.3" r="25.3" fill="none" stroke="#e6e6e6" stroke-width="1.1"/><circle cx="338.2" cy="389.4" r="3.4" fill="#f2f2f2" stroke="#4f4f4f" stroke-width=".9"/><circle cx="338.2" cy="441.2" r="3.4" fill="#f2f2f2" stroke="#4f4f4f" stroke-width=".9"/><path d="M367.2 411.8 L372.8 415.2 L367.2 418.6 Z" fill="#ececec"/></svg>
<span class="t" style="top:408.76px;color:#dddddd;letter-spacing:-0.27px;font-size:11px;right:1346.7px;">Angle:</span>
<div class="a" style="left:222.3px;top:408.3px;width:57px;height:13.2px;background:#454545;border:1px solid #686868;"></div>
<span class="t" style="top:409.16px;color:#dddddd;letter-spacing:-0.45px;font-size:11px;left:225.4px;">0°</span>
<span class="t" style="top:433.76px;color:#dddddd;letter-spacing:-0.39px;font-size:11px;right:1346.7px;">Roundness:</span>
<div class="a" style="left:222.3px;top:433.3px;width:57px;height:13.2px;background:#454545;border:1px solid #686868;"></div>
<span class="t" style="top:434.16px;color:#dddddd;letter-spacing:-0.45px;font-size:11px;left:225.4px;">100%</span>
<span class="t" style="top:458.86px;color:#888888;letter-spacing:-0.41px;font-size:11px;left:159px;">Hardness</span>
<div class="a" style="left:317px;top:458.4px;width:58px;height:13.2px;background:#4d4d4d;border:1px solid #626262;"></div>
<div class="a" style="left:164px;top:480.0px;width:208px;height:3px;background:#747474;border-radius:.8px;"></div>
<svg class="a" style="left:159px;top:501.5px" width="10" height="10" viewBox="0 0 10 10"><rect x="0" y="0" width="10" height="10" rx="2" fill="#d9d9d9"/><path d="M2.2 5.1 L4.2 7.2 L7.9 2.7" fill="none" stroke="#222" stroke-width="1.7" stroke-linecap="butt" stroke-linejoin="miter"/></svg>
<span class="t" style="top:500.26px;color:#dddddd;letter-spacing:-0.26px;font-size:11px;left:173.3px;">Spacing</span>
<div class="a" style="left:317px;top:499.4px;width:58px;height:13.2px;background:#454545;border:1px solid #686868;"></div>
<span class="t" style="top:500.26px;color:#dddddd;letter-spacing:-0.45px;font-size:11px;left:320.1px;">123%</span>
<div class="a" style="left:164px;top:521.0px;width:208px;height:3px;background:#747474;border-radius:.8px;"></div>
<svg class="a" style="left:272.60px;top:523.00px" width="13" height="13" viewBox="0 0 13 13"><path d="M6.5 1.1 L11.5 7.2 V9.7 Q11.5 11.5 9.7 11.5 H3.3 Q1.5 11.5 1.5 9.7 V7.2 Z" fill="#f6f6f6" stroke="#262626" stroke-width="1" stroke-linejoin="round"/></svg>
<svg class="a" style="left:18px;top:571px;overflow:hidden" width="360" height="100" viewBox="18 571 360 100"><g filter="url(#b2)">
<g transform="translate(51.75 620.75) rotate(0) scale(1.0)"><use href="#bf"/><path d="M11.5 -1.8 L5.3 7.5" stroke="#696969" stroke-width="0.85" stroke-linecap="round" fill="none"/><path d="M10.3 -3.4 L13.2 -2.2 L8.6 3.2 Z" fill="#696969"/></g>
<g transform="translate(120.05 606.55) rotate(0) scale(1.0)"><use href="#bf"/><path d="M11.5 -1.8 L5.3 7.5" stroke="#696969" stroke-width="0.85" stroke-linecap="round" fill="none"/><path d="M10.3 -3.4 L13.2 -2.2 L8.6 3.2 Z" fill="#696969"/></g>
<g transform="translate(189.05 617.55) rotate(0) scale(1.0)"><use href="#bf"/><path d="M11.5 -1.8 L5.3 7.5" stroke="#696969" stroke-width="0.85" stroke-linecap="round" fill="none"/><path d="M10.3 -3.4 L13.2 -2.2 L8.6 3.2 Z" fill="#696969"/></g>
<g transform="translate(256.65 634.75) rotate(0) scale(1.0)"><use href="#bf"/><path d="M11.5 -1.8 L5.3 7.5" stroke="#696969" stroke-width="0.85" stroke-linecap="round" fill="none"/><path d="M10.3 -3.4 L13.2 -2.2 L8.6 3.2 Z" fill="#696969"/></g>
<g transform="translate(326.15 626.55) rotate(0) scale(1.0)"><use href="#bf"/><path d="M11.5 -1.8 L5.3 7.5" stroke="#696969" stroke-width="0.85" stroke-linecap="round" fill="none"/><path d="M10.3 -3.4 L13.2 -2.2 L8.6 3.2 Z" fill="#696969"/></g>
</g></svg>
<div class="a" style="left:395.4px;top:9px;width:371.55px;height:579.1px;background:#535353;border-radius:4px 4px 0 0;box-shadow:0 1px 5px rgba(0,0,0,.55),0 0 0 1px rgba(30,30,30,.55);"></div>
<div class="a" style="left:395.4px;top:9px;width:371.55px;height:13px;background:#464646;border-radius:4px 4px 0 0;"></div>
<div class="a" style="left:395.4px;top:22px;width:371.55px;height:1px;background:#383838;"></div>
<div class="a" style="left:395.4px;top:23px;width:371.55px;height:28.0px;background:#424242;"></div>
<div class="a" style="left:395.4px;top:23px;width:93.6px;height:28.0px;background:#535353;"></div>
<div class="a" style="left:489px;top:23px;width:1px;height:28.0px;background:#3a3a3a;"></div>
<span class="t" style="top:30.06px;color:#f0f0f0;letter-spacing:-0.3px;font-size:11px;font-weight:bold;left:405.3px;-webkit-text-stroke:0;word-spacing:-0.6px;">Brush Settings</span>
<svg class="a" style="left:400.8px;top:13.9px" width="6.4" height="6.4" viewBox="0 0 6.4 6.4"><path d="M0.7 0.7 L5.7 5.7 M5.7 0.7 L0.7 5.7" stroke="#a4a4a4" stroke-width="1.9" stroke-linecap="square" fill="none"/></svg>
<svg class="a" style="left:752px;top:14.1px" width="7.9" height="5.3" viewBox="0 0 9 6"><path d="M3.6 0.4 L0.9 3 L3.6 5.6 M7.9 0.4 L5.2 3 L7.9 5.6" stroke="#d8d8d8" stroke-width="1.3" fill="none"/></svg>
<div class="a" style="left:751px;top:33px;width:10px;height:1px;background:#c4c4c4;"></div>
<div class="a" style="left:751px;top:35px;width:10px;height:1px;background:#c4c4c4;"></div>
<div class="a" style="left:751px;top:37px;width:10px;height:1px;background:#c4c4c4;"></div>
<div class="a" style="left:751px;top:39px;width:10px;height:1px;background:#c4c4c4;"></div>
<div class="a" style="left:437.6px;top:61.8px;width:57.2px;height:21px;background:#454545;border:1px solid #676767;border-radius:3.5px;"></div>
<span class="t" style="top:66.97px;color:#dddddd;letter-spacing:-0.4px;font-size:11.3px;left:437.6px;width:59px;text-align:center;">Brushes</span>
<div class="a" style="left:402px;top:94.5px;width:129px;height:247.5px;background:transparent;border:1px solid #474747;"></div>
<span class="t" style="top:98.06px;color:#dddddd;letter-spacing:-0.18px;font-size:11px;left:403.0px;width:128px;text-align:center;">Brush Tip Shape</span>
<div class="a" style="left:403px;top:114px;width:128px;height:19px;background:#6b6b6b;"></div>
<div class="a" style="left:403px;top:113.5px;width:128px;height:1px;background:#474747;"></div>
<svg class="a" style="left:413px;top:118.5px" width="10" height="10" viewBox="0 0 10 10"><rect x="0" y="0" width="10" height="10" rx="2" fill="#d9d9d9"/><path d="M2.2 5.1 L4.2 7.2 L7.9 2.7" fill="none" stroke="#222" stroke-width="1.7" stroke-linecap="butt" stroke-linejoin="miter"/></svg>
<span class="t" style="top:117.06px;color:#dddddd;letter-spacing:-0.28px;font-size:11px;left:427px;">Shape Dynamics</span>
<svg class="a" style="left:514px;top:117px" width="12" height="13" viewBox="0 0 12 13"><path d="M3 5 V3.3 A2.65 2.65 0 0 1 8.25 2.7" fill="none" stroke="#dadada" stroke-width="1.05"/><rect x="1.4" y="5.1" width="9.3" height="6.5" fill="none" stroke="#dadada" stroke-width="1.05"/><rect x="5.05" y="7.4" width="2" height="2" rx=".5" fill="#e6e6e6"/></svg>
<div class="a" style="left:403px;top:132.5px;width:128px;height:1px;background:#474747;"></div>
<svg class="a" style="left:413px;top:137.5px" width="10" height="10" viewBox="0 0 10 10"><rect x="0.5" y="0.5" width="9" height="9" rx="2" fill="#454545" stroke="#858585" stroke-width="1"/></svg>
<span class="t" style="top:136.06px;color:#dddddd;letter-spacing:-0.05px;font-size:11px;left:427px;">Scattering</span>
<svg class="a" style="left:514px;top:136px" width="12" height="13" viewBox="0 0 12 13"><path d="M3 5 V3.3 A2.65 2.65 0 0 1 8.25 2.7" fill="none" stroke="#dadada" stroke-width="1.05"/><rect x="1.4" y="5.1" width="9.3" height="6.5" fill="none" stroke="#dadada" stroke-width="1.05"/><rect x="5.05" y="7.4" width="2" height="2" rx=".5" fill="#e6e6e6"/></svg>
<div class="a" style="left:403px;top:151.5px;width:128px;height:1px;background:#474747;"></div>
<svg class="a" style="left:413px;top:156.5px" width="10" height="10" viewBox="0 0 10 10"><rect x="0.5" y="0.5" width="9" height="9" rx="2" fill="#454545" stroke="#858585" stroke-width="1"/></svg>
<span class="t" style="top:155.06px;color:#dddddd;letter-spacing:-0.29px;font-size:11px;left:427px;">Texture</span>
<svg class="a" style="left:514px;top:155px" width="12" height="13" viewBox="0 0 12 13"><path d="M3 5 V3.3 A2.65 2.65 0 0 1 8.25 2.7" fill="none" stroke="#dadada" stroke-width="1.05"/><rect x="1.4" y="5.1" width="9.3" height="6.5" fill="none" stroke="#dadada" stroke-width="1.05"/><rect x="5.05" y="7.4" width="2" height="2" rx=".5" fill="#e6e6e6"/></svg>
<div class="a" style="left:403px;top:170.5px;width:128px;height:1px;background:#474747;"></div>
<svg class="a" style="left:413px;top:175.5px" width="10" height="10" viewBox="0 0 10 10"><rect x="0.5" y="0.5" width="9" height="9" rx="2" fill="#454545" stroke="#858585" stroke-width="1"/></svg>
<span class="t" style="top:174.06px;color:#dddddd;letter-spacing:-0.29px;font-size:11px;left:427px;">Dual Brush</span>
<svg class="a" style="left:514px;top:174px" width="12" height="13" viewBox="0 0 12 13"><path d="M3 5 V3.3 A2.65 2.65 0 0 1 8.25 2.7" fill="none" stroke="#dadada" stroke-width="1.05"/><rect x="1.4" y="5.1" width="9.3" height="6.5" fill="none" stroke="#dadada" stroke-width="1.05"/><rect x="5.05" y="7.4" width="2" height="2" rx=".5" fill="#e6e6e6"/></svg>
<div class="a" style="left:403px;top:189.5px;width:128px;height:1px;background:#474747;"></div>
<svg class="a" style="left:413px;top:194.5px" width="10" height="10" viewBox="0 0 10 10"><rect x="0.5" y="0.5" width="9" height="9" rx="2" fill="#454545" stroke="#858585" stroke-width="1"/></svg>
<span class="t" style="top:193.06px;color:#dddddd;letter-spacing:-0.24px;font-size:11px;left:427px;">Color Dynamics</span>
<svg class="a" style="left:514px;top:193px" width="12" height="13" viewBox="0 0 12 13"><path d="M3 5 V3.3 A2.65 2.65 0 0 1 8.25 2.7" fill="none" stroke="#dadada" stroke-width="1.05"/><rect x="1.4" y="5.1" width="9.3" height="6.5" fill="none" stroke="#dadada" stroke-width="1.05"/><rect x="5.05" y="7.4" width="2" height="2" rx=".5" fill="#e6e6e6"/></svg>
<div class="a" style="left:403px;top:208.5px;width:128px;height:1px;background:#474747;"></div>
<svg class="a" style="left:413px;top:213.5px" width="10" height="10" viewBox="0 0 10 10"><rect x="0.5" y="0.5" width="9" height="9" rx="2" fill="#454545" stroke="#858585" stroke-width="1"/></svg>
<span class="t" style="top:212.06px;color:#dddddd;letter-spacing:-0.25px;font-size:11px;left:427px;">Transfer</span>
<svg class="a" style="left:514px;top:212px" width="12" height="13" viewBox="0 0 12 13"><path d="M3 5 V3.3 A2.65 2.65 0 0 1 8.25 2.7" fill="none" stroke="#dadada" stroke-width="1.05"/><rect x="1.4" y="5.1" width="9.3" height="6.5" fill="none" stroke="#dadada" stroke-width="1.05"/><rect x="5.05" y="7.4" width="2" height="2" rx=".5" fill="#e6e6e6"/></svg>
<div class="a" style="left:403px;top:227.5px;width:128px;height:1px;background:#474747;"></div>
<svg class="a" style="left:413px;top:232.5px" width="10" height="10" viewBox="0 0 10 10"><rect x="0.5" y="0.5" width="9" height="9" rx="2" fill="#454545" stroke="#858585" stroke-width="1"/></svg>
<span class="t" style="top:231.06px;color:#dddddd;letter-spacing:-0.39px;font-size:11px;left:427px;">Brush Pose</span>
<svg class="a" style="left:514px;top:231px" width="12" height="13" viewBox="0 0 12 13"><path d="M3 5 V3.3 A2.65 2.65 0 0 1 8.25 2.7" fill="none" stroke="#dadada" stroke-width="1.05"/><rect x="1.4" y="5.1" width="9.3" height="6.5" fill="none" stroke="#dadada" stroke-width="1.05"/><rect x="5.05" y="7.4" width="2" height="2" rx=".5" fill="#e6e6e6"/></svg>
<div class="a" style="left:403px;top:246.5px;width:128px;height:1px;background:#474747;"></div>
<svg class="a" style="left:413px;top:251.5px" width="10" height="10" viewBox="0 0 10 10"><rect x="0.5" y="0.5" width="9" height="9" rx="2" fill="#454545" stroke="#858585" stroke-width="1"/></svg>
<span class="t" style="top:250.06px;color:#dddddd;letter-spacing:-0.33px;font-size:11px;left:427px;">Noise</span>
<svg class="a" style="left:514px;top:250px" width="12" height="13" viewBox="0 0 12 13"><path d="M3 5 V3.3 A2.65 2.65 0 0 1 8.25 2.7" fill="none" stroke="#dadada" stroke-width="1.05"/><rect x="1.4" y="5.1" width="9.3" height="6.5" fill="none" stroke="#dadada" stroke-width="1.05"/><rect x="5.05" y="7.4" width="2" height="2" rx=".5" fill="#e6e6e6"/></svg>
<svg class="a" style="left:413px;top:270.5px" width="10" height="10" viewBox="0 0 10 10"><rect x="0.5" y="0.5" width="9" height="9" rx="2" fill="#454545" stroke="#858585" stroke-width="1"/></svg>
<span class="t" style="top:269.06px;color:#dddddd;letter-spacing:-0.38px;font-size:11px;left:427px;">Wet Edges</span>
<svg class="a" style="left:514px;top:269px" width="12" height="13" viewBox="0 0 12 13"><path d="M3 5 V3.3 A2.65 2.65 0 0 1 8.25 2.7" fill="none" stroke="#dadada" stroke-width="1.05"/><rect x="1.4" y="5.1" width="9.3" height="6.5" fill="none" stroke="#dadada" stroke-width="1.05"/><rect x="5.05" y="7.4" width="2" height="2" rx=".5" fill="#e6e6e6"/></svg>
<svg class="a" style="left:413px;top:289.5px" width="10" height="10" viewBox="0 0 10 10"><rect x="0.5" y="0.5" width="9" height="9" rx="2" fill="#454545" stroke="#858585" stroke-width="1"/></svg>
<span class="t" style="top:288.06px;color:#dddddd;letter-spacing:0.01px;font-size:11px;left:427px;">Build-up</span>
<svg class="a" style="left:514px;top:288px" width="12" height="13" viewBox="0 0 12 13"><path d="M3 5 V3.3 A2.65 2.65 0 0 1 8.25 2.7" fill="none" stroke="#dadada" stroke-width="1.05"/><rect x="1.4" y="5.1" width="9.3" height="6.5" fill="none" stroke="#dadada" stroke-width="1.05"/><rect x="5.05" y="7.4" width="2" height="2" rx=".5" fill="#e6e6e6"/></svg>
<svg class="a" style="left:413px;top:308.5px" width="10" height="10" viewBox="0 0 10 10"><rect x="0.5" y="0.5" width="9" height="9" rx="2" fill="#454545" stroke="#858585" stroke-width="1"/></svg>
<span class="t" style="top:307.06px;color:#dddddd;letter-spacing:-0.17px;font-size:11px;left:427px;">Smoothing</span>
<svg class="a" style="left:514px;top:307px" width="12" height="13" viewBox="0 0 12 13"><path d="M3 5 V3.3 A2.65 2.65 0 0 1 8.25 2.7" fill="none" stroke="#dadada" stroke-width="1.05"/><rect x="1.4" y="5.1" width="9.3" height="6.5" fill="none" stroke="#dadada" stroke-width="1.05"/><rect x="5.05" y="7.4" width="2" height="2" rx=".5" fill="#e6e6e6"/></svg>
<svg class="a" style="left:413px;top:327.5px" width="10" height="10" viewBox="0 0 10 10"><rect x="0.5" y="0.5" width="9" height="9" rx="2" fill="#454545" stroke="#858585" stroke-width="1"/></svg>
<span class="t" style="top:326.06px;color:#dddddd;letter-spacing:-0.05px;font-size:11px;left:427px;">Protect Texture</span>
<svg class="a" style="left:514px;top:326px" width="12" height="13" viewBox="0 0 12 13"><path d="M3 5 V3.3 A2.65 2.65 0 0 1 8.25 2.7" fill="none" stroke="#dadada" stroke-width="1.05"/><rect x="1.4" y="5.1" width="9.3" height="6.5" fill="none" stroke="#dadada" stroke-width="1.05"/><rect x="5.05" y="7.4" width="2" height="2" rx=".5" fill="#e6e6e6"/></svg>
<div class="a" style="left:401px;top:449px;width:360px;height:100px;background:#696969;"></div>
<div class="a" style="left:395.4px;top:554px;width:371.55px;height:1px;background:#3d3d3d;"></div>
<div class="a" style="left:395.4px;top:579px;width:371.55px;height:2px;background:#3b3b3b;"></div>
<div class="a" style="left:395.4px;top:581px;width:371.55px;height:7.1px;background:#4f4f4f;"></div>
<div class="a" style="left:571.5px;top:582px;width:1px;height:4px;background:#3f3f3f;"></div>
<div class="a" style="left:573.5px;top:582px;width:1px;height:4px;background:#3f3f3f;"></div>
<div class="a" style="left:575.5px;top:582px;width:1px;height:4px;background:#3f3f3f;"></div>
<div class="a" style="left:577.5px;top:582px;width:1px;height:4px;background:#3f3f3f;"></div>
<div class="a" style="left:579.5px;top:582px;width:1px;height:4px;background:#3f3f3f;"></div>
<div class="a" style="left:581.5px;top:582px;width:1px;height:4px;background:#3f3f3f;"></div>
<div class="a" style="left:583.5px;top:582px;width:1px;height:4px;background:#3f3f3f;"></div>
<div class="a" style="left:585.5px;top:582px;width:1px;height:4px;background:#3f3f3f;"></div>
<div class="a" style="left:587.5px;top:582px;width:1px;height:4px;background:#3f3f3f;"></div>
<div class="a" style="left:589.5px;top:582px;width:1px;height:4px;background:#3f3f3f;"></div>
<svg class="a" style="left:726.6px;top:561px" width="11" height="11" viewBox="0 0 11 11"><rect x="0.5" y="0.5" width="10" height="10" fill="none" stroke="#dcdcdc" stroke-width="1"/><path d="M5.5 2.7 V8.3 M2.7 5.5 H8.3" stroke="#dcdcdc" stroke-width="1.1"/></svg>
<span class="t" style="top:62.86px;color:#dddddd;letter-spacing:-0.11px;font-size:11px;left:542px;">Size Jitter</span>
<div class="a" style="left:700px;top:62px;width:58px;height:13.5px;background:#454545;border:1px solid #686868;"></div>
<span class="t" style="top:63.16px;color:#dddddd;letter-spacing:-0.45px;font-size:11px;left:703.1px;">70%</span>
<div class="a" style="left:547px;top:84.0px;width:208px;height:3px;background:#747474;border-radius:.8px;"></div>
<svg class="a" style="left:685.50px;top:85.90px" width="13" height="13" viewBox="0 0 13 13"><path d="M6.5 1.1 L11.5 7.2 V9.7 Q11.5 11.5 9.7 11.5 H3.3 Q1.5 11.5 1.5 9.7 V7.2 Z" fill="#f6f6f6" stroke="#262626" stroke-width="1" stroke-linejoin="round"/></svg>
<span class="t" style="top:104.86px;color:#dddddd;letter-spacing:-0.11px;font-size:11px;right:960.8px;">Control:</span>
<div class="a" style="left:608.1px;top:102.3px;width:84.6px;height:16.7px;background:#454545;border:1px solid #686868;border-radius:3px;"></div>
<span class="t" style="top:104.86px;color:#dddddd;letter-spacing:0px;font-size:11px;left:616.3000000000001px;">Off</span>
<svg class="a" style="left:683.7px;top:109.55px" width="8" height="6" viewBox="0 0 8 6"><path d="M0.9 1.4 L4 4.1 L7.1 1.4" fill="none" stroke="#dedede" stroke-width="1.15"/></svg>
<div class="a" style="left:700px;top:104.3px;width:58px;height:13.4px;background:#4d4d4d;border:1px solid #626262;"></div>
<span class="t" style="top:126.86px;color:#dddddd;letter-spacing:-0.24px;font-size:11px;left:542px;">Minimum Diameter</span>
<div class="a" style="left:700px;top:126.5px;width:58px;height:13.3px;background:#454545;border:1px solid #686868;"></div>
<span class="t" style="top:127.46px;color:#dddddd;letter-spacing:-0.45px;font-size:11px;left:703.1px;">0%</span>
<div class="a" style="left:547px;top:148.0px;width:208px;height:3px;background:#747474;border-radius:.8px;"></div>
<svg class="a" style="left:538.50px;top:149.90px" width="13" height="13" viewBox="0 0 13 13"><path d="M6.5 1.1 L11.5 7.2 V9.7 Q11.5 11.5 9.7 11.5 H3.3 Q1.5 11.5 1.5 9.7 V7.2 Z" fill="#f6f6f6" stroke="#262626" stroke-width="1" stroke-linejoin="round"/></svg>
<span class="t" style="top:167.86px;color:#888888;letter-spacing:-0.19px;font-size:11px;left:542px;">Tilt Scale</span>
<div class="a" style="left:700px;top:167px;width:58px;height:13.4px;background:#4d4d4d;border:1px solid #626262;"></div>
<div class="a" style="left:547px;top:189.0px;width:208px;height:3px;background:#747474;border-radius:.8px;"></div>
<div class="a" style="left:537px;top:207px;width:228px;height:1px;background:#444444;"></div>
<span class="t" style="top:214.86px;color:#dddddd;letter-spacing:-0.02px;font-size:11px;left:542px;">Angle Jitter</span>
<div class="a" style="left:700px;top:214.2px;width:58px;height:13.4px;background:#454545;border:1px solid #686868;"></div>
<span class="t" style="top:215.26px;color:#dddddd;letter-spacing:-0.45px;font-size:11px;left:703.1px;">0%</span>
<div class="a" style="left:547px;top:236.0px;width:208px;height:3px;background:#747474;border-radius:.8px;"></div>
<svg class="a" style="left:538.50px;top:237.90px" width="13" height="13" viewBox="0 0 13 13"><path d="M6.5 1.1 L11.5 7.2 V9.7 Q11.5 11.5 9.7 11.5 H3.3 Q1.5 11.5 1.5 9.7 V7.2 Z" fill="#f6f6f6" stroke="#262626" stroke-width="1" stroke-linejoin="round"/></svg>
<span class="t" style="top:256.66px;color:#dddddd;letter-spacing:-0.11px;font-size:11px;right:970.8px;">Control:</span>
<div class="a" style="left:598px;top:254.1px;width:94.7px;height:16.8px;background:#454545;border:1px solid #686868;border-radius:3px;"></div>
<span class="t" style="top:256.66px;color:#dddddd;letter-spacing:0px;font-size:11px;left:606.2px;">Off</span>
<svg class="a" style="left:683.7px;top:261.4px" width="8" height="6" viewBox="0 0 8 6"><path d="M0.9 1.4 L4 4.1 L7.1 1.4" fill="none" stroke="#dedede" stroke-width="1.15"/></svg>
<div class="a" style="left:700px;top:256.3px;width:58px;height:13.2px;background:#4d4d4d;border:1px solid #626262;"></div>
<div class="a" style="left:537px;top:277.3px;width:228px;height:1px;background:#444444;"></div>
<span class="t" style="top:285.06px;color:#dddddd;letter-spacing:-0.15px;font-size:11px;left:542px;">Roundness Jitter</span>
<div class="a" style="left:700px;top:284.5px;width:58px;height:13.2px;background:#454545;border:1px solid #686868;"></div>
<span class="t" style="top:285.36px;color:#dddddd;letter-spacing:-0.45px;font-size:11px;left:703.1px;">0%</span>
<div class="a" style="left:547px;top:306.1px;width:208px;height:3px;background:#747474;border-radius:.8px;"></div>
<svg class="a" style="left:538.50px;top:308.00px" width="13" height="13" viewBox="0 0 13 13"><path d="M6.5 1.1 L11.5 7.2 V9.7 Q11.5 11.5 9.7 11.5 H3.3 Q1.5 11.5 1.5 9.7 V7.2 Z" fill="#f6f6f6" stroke="#262626" stroke-width="1" stroke-linejoin="round"/></svg>
<span class="t" style="top:326.56px;color:#dddddd;letter-spacing:-0.11px;font-size:11px;right:960px;">Control:</span>
<div class="a" style="left:609px;top:324px;width:83.7px;height:16.8px;background:#454545;border:1px solid #686868;border-radius:3px;"></div>
<span class="t" style="top:326.56px;color:#dddddd;letter-spacing:0px;font-size:11px;left:617.2px;">Off</span>
<svg class="a" style="left:683.7px;top:331.29999999999995px" width="8" height="6" viewBox="0 0 8 6"><path d="M0.9 1.4 L4 4.1 L7.1 1.4" fill="none" stroke="#dedede" stroke-width="1.15"/></svg>
<div class="a" style="left:700px;top:326.4px;width:58px;height:13.2px;background:#4d4d4d;border:1px solid #626262;"></div>
<span class="t" style="top:348.56px;color:#888888;letter-spacing:-0.35px;font-size:11px;left:542px;">Minimum Roundness</span>
<div class="a" style="left:700px;top:348.8px;width:58px;height:13px;background:#4d4d4d;border:1px solid #626262;"></div>
<div class="a" style="left:547px;top:369.9px;width:208px;height:3px;background:#747474;border-radius:.8px;"></div>
<svg class="a" style="left:537px;top:389.7px" width="10" height="10" viewBox="0 0 10 10"><rect x="0.5" y="0.5" width="9" height="9" rx="2" fill="#454545" stroke="#858585" stroke-width="1"/></svg>
<span class="t" style="top:387.76px;color:#dddddd;letter-spacing:-0.09px;font-size:11px;left:551.5px;">Flip X Jitter</span>
<svg class="a" style="left:651.3px;top:389.7px" width="10" height="10" viewBox="0 0 10 10"><rect x="0.5" y="0.5" width="9" height="9" rx="2" fill="#454545" stroke="#858585" stroke-width="1"/></svg>
<span class="t" style="top:387.76px;color:#dddddd;letter-spacing:-0.07px;font-size:11px;left:665.5px;">Flip Y Jitter</span>
<svg class="a" style="left:537px;top:406.7px" width="10" height="10" viewBox="0 0 10 10"><rect x="0.5" y="0.5" width="9" height="9" rx="2" fill="#454545" stroke="#858585" stroke-width="1"/></svg>
<span class="t" style="top:404.66px;color:#dddddd;letter-spacing:-0.13px;font-size:11px;left:551.5px;">Brush Projection</span>
<svg class="a" style="left:401px;top:449px;overflow:hidden" width="360" height="100" viewBox="401 449 360 100"><g filter="url(#b2)">
<g transform="translate(434.40 498.60) rotate(0) scale(0.31)"><use href="#bf"/><path d="M11.5 -1.8 L5.3 7.5" stroke="#696969" stroke-width="2.00" stroke-linecap="round" fill="none"/><path d="M10.3 -3.4 L13.2 -2.2 L8.6 3.2 Z" fill="#696969"/></g>
<g transform="translate(454.80 492.40) rotate(0) scale(0.485)"><use href="#bf"/><path d="M11.5 -1.8 L5.3 7.5" stroke="#696969" stroke-width="1.75" stroke-linecap="round" fill="none"/><path d="M10.3 -3.4 L13.2 -2.2 L8.6 3.2 Z" fill="#696969"/></g>
<g transform="translate(488.40 485.80) rotate(0) scale(0.64)"><use href="#bf"/><path d="M11.5 -1.8 L5.3 7.5" stroke="#696969" stroke-width="1.33" stroke-linecap="round" fill="none"/><path d="M10.3 -3.4 L13.2 -2.2 L8.6 3.2 Z" fill="#696969"/></g>
<g transform="translate(533.70 486.10) rotate(0) scale(0.945)"><use href="#bf"/><path d="M11.5 -1.8 L5.3 7.5" stroke="#696969" stroke-width="0.90" stroke-linecap="round" fill="none"/><path d="M10.3 -3.4 L13.2 -2.2 L8.6 3.2 Z" fill="#696969"/></g>
<g transform="translate(597.70 504.40) rotate(0) scale(0.96)"><use href="#bf"/><path d="M11.5 -1.8 L5.3 7.5" stroke="#696969" stroke-width="0.89" stroke-linecap="round" fill="none"/><path d="M10.3 -3.4 L13.2 -2.2 L8.6 3.2 Z" fill="#696969"/></g>
<g transform="translate(663.00 512.80) rotate(0) scale(0.61)"><use href="#bf"/><path d="M11.5 -1.8 L5.3 7.5" stroke="#696969" stroke-width="1.39" stroke-linecap="round" fill="none"/><path d="M10.3 -3.4 L13.2 -2.2 L8.6 3.2 Z" fill="#696969"/></g>
<g transform="translate(705.10 505.60) rotate(0) scale(0.375)"><use href="#bf"/><path d="M11.5 -1.8 L5.3 7.5" stroke="#696969" stroke-width="2.00" stroke-linecap="round" fill="none"/><path d="M10.3 -3.4 L13.2 -2.2 L8.6 3.2 Z" fill="#696969"/></g>
</g></svg>
<div class="a" style="left:781.3px;top:9px;width:371.5px;height:579.1px;background:#535353;border-radius:4px 4px 0 0;box-shadow:0 1px 5px rgba(0,0,0,.55),0 0 0 1px rgba(30,30,30,.55);"></div>
<div class="a" style="left:781.3px;top:9px;width:371.5px;height:13px;background:#464646;border-radius:4px 4px 0 0;"></div>
<div class="a" style="left:781.3px;top:22px;width:371.5px;height:1px;background:#383838;"></div>
<div class="a" style="left:781.3px;top:23px;width:371.5px;height:28.0px;background:#424242;"></div>
<div class="a" style="left:781.3px;top:23px;width:93.7px;height:28.0px;background:#535353;"></div>
<div class="a" style="left:875px;top:23px;width:1px;height:28.0px;background:#3a3a3a;"></div>
<span class="t" style="top:30.06px;color:#f0f0f0;letter-spacing:-0.3px;font-size:11px;font-weight:bold;left:791.3px;-webkit-text-stroke:0;word-spacing:-0.6px;">Brush Settings</span>
<svg class="a" style="left:786.8px;top:13.9px" width="6.4" height="6.4" viewBox="0 0 6.4 6.4"><path d="M0.7 0.7 L5.7 5.7 M5.7 0.7 L0.7 5.7" stroke="#a4a4a4" stroke-width="1.9" stroke-linecap="square" fill="none"/></svg>
<svg class="a" style="left:1138px;top:14.1px" width="7.9" height="5.3" viewBox="0 0 9 6"><path d="M3.6 0.4 L0.9 3 L3.6 5.6 M7.9 0.4 L5.2 3 L7.9 5.6" stroke="#d8d8d8" stroke-width="1.3" fill="none"/></svg>
<div class="a" style="left:1137px;top:33px;width:10px;height:1px;background:#c4c4c4;"></div>
<div class="a" style="left:1137px;top:35px;width:10px;height:1px;background:#c4c4c4;"></div>
<div class="a" style="left:1137px;top:37px;width:10px;height:1px;background:#c4c4c4;"></div>
<div class="a" style="left:1137px;top:39px;width:10px;height:1px;background:#c4c4c4;"></div>
<div class="a" style="left:823.6px;top:61.8px;width:57.2px;height:21px;background:#454545;border:1px solid #676767;border-radius:3.5px;"></div>
<span class="t" style="top:66.97px;color:#dddddd;letter-spacing:-0.4px;font-size:11.3px;left:823.6px;width:59px;text-align:center;">Brushes</span>
<div class="a" style="left:788px;top:94.5px;width:129px;height:247.5px;background:transparent;border:1px solid #474747;"></div>
<span class="t" style="top:98.06px;color:#dddddd;letter-spacing:-0.18px;font-size:11px;left:789.0px;width:128px;text-align:center;">Brush Tip Shape</span>
<div class="a" style="left:789px;top:114px;width:128px;height:19px;background:#6b6b6b;"></div>
<div class="a" style="left:789px;top:113.5px;width:128px;height:1px;background:#474747;"></div>
<svg class="a" style="left:799px;top:118.5px" width="10" height="10" viewBox="0 0 10 10"><rect x="0" y="0" width="10" height="10" rx="2" fill="#d9d9d9"/><path d="M2.2 5.1 L4.2 7.2 L7.9 2.7" fill="none" stroke="#222" stroke-width="1.7" stroke-linecap="butt" stroke-linejoin="miter"/></svg>
<span class="t" style="top:117.06px;color:#dddddd;letter-spacing:-0.28px;font-size:11px;left:813px;">Shape Dynamics</span>
<svg class="a" style="left:900px;top:117px" width="12" height="13" viewBox="0 0 12 13"><path d="M3 5 V3.3 A2.65 2.65 0 0 1 8.25 2.7" fill="none" stroke="#dadada" stroke-width="1.05"/><rect x="1.4" y="5.1" width="9.3" height="6.5" fill="none" stroke="#dadada" stroke-width="1.05"/><rect x="5.05" y="7.4" width="2" height="2" rx=".5" fill="#e6e6e6"/></svg>
<div class="a" style="left:789px;top:132.5px;width:128px;height:1px;background:#474747;"></div>
<svg class="a" style="left:799px;top:137.5px" width="10" height="10" viewBox="0 0 10 10"><rect x="0.5" y="0.5" width="9" height="9" rx="2" fill="#454545" stroke="#858585" stroke-width="1"/></svg>
<span class="t" style="top:136.06px;color:#dddddd;letter-spacing:-0.05px;font-size:11px;left:813px;">Scattering</span>
<svg class="a" style="left:900px;top:136px" width="12" height="13" viewBox="0 0 12 13"><path d="M3 5 V3.3 A2.65 2.65 0 0 1 8.25 2.7" fill="none" stroke="#dadada" stroke-width="1.05"/><rect x="1.4" y="5.1" width="9.3" height="6.5" fill="none" stroke="#dadada" stroke-width="1.05"/><rect x="5.05" y="7.4" width="2" height="2" rx=".5" fill="#e6e6e6"/></svg>
<div class="a" style="left:789px;top:151.5px;width:128px;height:1px;background:#474747;"></div>
<svg class="a" style="left:799px;top:156.5px" width="10" height="10" viewBox="0 0 10 10"><rect x="0.5" y="0.5" width="9" height="9" rx="2" fill="#454545" stroke="#858585" stroke-width="1"/></svg>
<span class="t" style="top:155.06px;color:#dddddd;letter-spacing:-0.29px;font-size:11px;left:813px;">Texture</span>
<svg class="a" style="left:900px;top:155px" width="12" height="13" viewBox="0 0 12 13"><path d="M3 5 V3.3 A2.65 2.65 0 0 1 8.25 2.7" fill="none" stroke="#dadada" stroke-width="1.05"/><rect x="1.4" y="5.1" width="9.3" height="6.5" fill="none" stroke="#dadada" stroke-width="1.05"/><rect x="5.05" y="7.4" width="2" height="2" rx=".5" fill="#e6e6e6"/></svg>
<div class="a" style="left:789px;top:170.5px;width:128px;height:1px;background:#474747;"></div>
<svg class="a" style="left:799px;top:175.5px" width="10" height="10" viewBox="0 0 10 10"><rect x="0.5" y="0.5" width="9" height="9" rx="2" fill="#454545" stroke="#858585" stroke-width="1"/></svg>
<span class="t" style="top:174.06px;color:#dddddd;letter-spacing:-0.29px;font-size:11px;left:813px;">Dual Brush</span>
<svg class="a" style="left:900px;top:174px" width="12" height="13" viewBox="0 0 12 13"><path d="M3 5 V3.3 A2.65 2.65 0 0 1 8.25 2.7" fill="none" stroke="#dadada" stroke-width="1.05"/><rect x="1.4" y="5.1" width="9.3" height="6.5" fill="none" stroke="#dadada" stroke-width="1.05"/><rect x="5.05" y="7.4" width="2" height="2" rx=".5" fill="#e6e6e6"/></svg>
<div class="a" style="left:789px;top:189.5px;width:128px;height:1px;background:#474747;"></div>
<svg class="a" style="left:799px;top:194.5px" width="10" height="10" viewBox="0 0 10 10"><rect x="0.5" y="0.5" width="9" height="9" rx="2" fill="#454545" stroke="#858585" stroke-width="1"/></svg>
<span class="t" style="top:193.06px;color:#dddddd;letter-spacing:-0.24px;font-size:11px;left:813px;">Color Dynamics</span>
<svg class="a" style="left:900px;top:193px" width="12" height="13" viewBox="0 0 12 13"><path d="M3 5 V3.3 A2.65 2.65 0 0 1 8.25 2.7" fill="none" stroke="#dadada" stroke-width="1.05"/><rect x="1.4" y="5.1" width="9.3" height="6.5" fill="none" stroke="#dadada" stroke-width="1.05"/><rect x="5.05" y="7.4" width="2" height="2" rx=".5" fill="#e6e6e6"/></svg>
<div class="a" style="left:789px;top:208.5px;width:128px;height:1px;background:#474747;"></div>
<svg class="a" style="left:799px;top:213.5px" width="10" height="10" viewBox="0 0 10 10"><rect x="0.5" y="0.5" width="9" height="9" rx="2" fill="#454545" stroke="#858585" stroke-width="1"/></svg>
<span class="t" style="top:212.06px;color:#dddddd;letter-spacing:-0.25px;font-size:11px;left:813px;">Transfer</span>
<svg class="a" style="left:900px;top:212px" width="12" height="13" viewBox="0 0 12 13"><path d="M3 5 V3.3 A2.65 2.65 0 0 1 8.25 2.7" fill="none" stroke="#dadada" stroke-width="1.05"/><rect x="1.4" y="5.1" width="9.3" height="6.5" fill="none" stroke="#dadada" stroke-width="1.05"/><rect x="5.05" y="7.4" width="2" height="2" rx=".5" fill="#e6e6e6"/></svg>
<div class="a" style="left:789px;top:227.5px;width:128px;height:1px;background:#474747;"></div>
<svg class="a" style="left:799px;top:232.5px" width="10" height="10" viewBox="0 0 10 10"><rect x="0.5" y="0.5" width="9" height="9" rx="2" fill="#454545" stroke="#858585" stroke-width="1"/></svg>
<span class="t" style="top:231.06px;color:#dddddd;letter-spacing:-0.39px;font-size:11px;left:813px;">Brush Pose</span>
<svg class="a" style="left:900px;top:231px" width="12" height="13" viewBox="0 0 12 13"><path d="M3 5 V3.3 A2.65 2.65 0 0 1 8.25 2.7" fill="none" stroke="#dadada" stroke-width="1.05"/><rect x="1.4" y="5.1" width="9.3" height="6.5" fill="none" stroke="#dadada" stroke-width="1.05"/><rect x="5.05" y="7.4" width="2" height="2" rx=".5" fill="#e6e6e6"/></svg>
<div class="a" style="left:789px;top:246.5px;width:128px;height:1px;background:#474747;"></div>
<svg class="a" style="left:799px;top:251.5px" width="10" height="10" viewBox="0 0 10 10"><rect x="0.5" y="0.5" width="9" height="9" rx="2" fill="#454545" stroke="#858585" stroke-width="1"/></svg>
<span class="t" style="top:250.06px;color:#dddddd;letter-spacing:-0.33px;font-size:11px;left:813px;">Noise</span>
<svg class="a" style="left:900px;top:250px" width="12" height="13" viewBox="0 0 12 13"><path d="M3 5 V3.3 A2.65 2.65 0 0 1 8.25 2.7" fill="none" stroke="#dadada" stroke-width="1.05"/><rect x="1.4" y="5.1" width="9.3" height="6.5" fill="none" stroke="#dadada" stroke-width="1.05"/><rect x="5.05" y="7.4" width="2" height="2" rx=".5" fill="#e6e6e6"/></svg>
<svg class="a" style="left:799px;top:270.5px" width="10" height="10" viewBox="0 0 10 10"><rect x="0.5" y="0.5" width="9" height="9" rx="2" fill="#454545" stroke="#858585" stroke-width="1"/></svg>
<span class="t" style="top:269.06px;color:#dddddd;letter-spacing:-0.38px;font-size:11px;left:813px;">Wet Edges</span>
<svg class="a" style="left:900px;top:269px" width="12" height="13" viewBox="0 0 12 13"><path d="M3 5 V3.3 A2.65 2.65 0 0 1 8.25 2.7" fill="none" stroke="#dadada" stroke-width="1.05"/><rect x="1.4" y="5.1" width="9.3" height="6.5" fill="none" stroke="#dadada" stroke-width="1.05"/><rect x="5.05" y="7.4" width="2" height="2" rx=".5" fill="#e6e6e6"/></svg>
<svg class="a" style="left:799px;top:289.5px" width="10" height="10" viewBox="0 0 10 10"><rect x="0.5" y="0.5" width="9" height="9" rx="2" fill="#454545" stroke="#858585" stroke-width="1"/></svg>
<span class="t" style="top:288.06px;color:#dddddd;letter-spacing:0.01px;font-size:11px;left:813px;">Build-up</span>
<svg class="a" style="left:900px;top:288px" width="12" height="13" viewBox="0 0 12 13"><path d="M3 5 V3.3 A2.65 2.65 0 0 1 8.25 2.7" fill="none" stroke="#dadada" stroke-width="1.05"/><rect x="1.4" y="5.1" width="9.3" height="6.5" fill="none" stroke="#dadada" stroke-width="1.05"/><rect x="5.05" y="7.4" width="2" height="2" rx=".5" fill="#e6e6e6"/></svg>
<svg class="a" style="left:799px;top:308.5px" width="10" height="10" viewBox="0 0 10 10"><rect x="0.5" y="0.5" width="9" height="9" rx="2" fill="#454545" stroke="#858585" stroke-width="1"/></svg>
<span class="t" style="top:307.06px;color:#dddddd;letter-spacing:-0.17px;font-size:11px;left:813px;">Smoothing</span>
<svg class="a" style="left:900px;top:307px" width="12" height="13" viewBox="0 0 12 13"><path d="M3 5 V3.3 A2.65 2.65 0 0 1 8.25 2.7" fill="none" stroke="#dadada" stroke-width="1.05"/><rect x="1.4" y="5.1" width="9.3" height="6.5" fill="none" stroke="#dadada" stroke-width="1.05"/><rect x="5.05" y="7.4" width="2" height="2" rx=".5" fill="#e6e6e6"/></svg>
<svg class="a" style="left:799px;top:327.5px" width="10" height="10" viewBox="0 0 10 10"><rect x="0.5" y="0.5" width="9" height="9" rx="2" fill="#454545" stroke="#858585" stroke-width="1"/></svg>
<span class="t" style="top:326.06px;color:#dddddd;letter-spacing:-0.05px;font-size:11px;left:813px;">Protect Texture</span>
<svg class="a" style="left:900px;top:326px" width="12" height="13" viewBox="0 0 12 13"><path d="M3 5 V3.3 A2.65 2.65 0 0 1 8.25 2.7" fill="none" stroke="#dadada" stroke-width="1.05"/><rect x="1.4" y="5.1" width="9.3" height="6.5" fill="none" stroke="#dadada" stroke-width="1.05"/><rect x="5.05" y="7.4" width="2" height="2" rx=".5" fill="#e6e6e6"/></svg>
<div class="a" style="left:787px;top:449px;width:360px;height:100px;background:#696969;"></div>
<div class="a" style="left:781.3px;top:554px;width:371.5px;height:1px;background:#3d3d3d;"></div>
<div class="a" style="left:781.3px;top:579px;width:371.5px;height:2px;background:#3b3b3b;"></div>
<div class="a" style="left:781.3px;top:581px;width:371.5px;height:7.1px;background:#4f4f4f;"></div>
<div class="a" style="left:957.5px;top:582px;width:1px;height:4px;background:#3f3f3f;"></div>
<div class="a" style="left:959.5px;top:582px;width:1px;height:4px;background:#3f3f3f;"></div>
<div class="a" style="left:961.5px;top:582px;width:1px;height:4px;background:#3f3f3f;"></div>
<div class="a" style="left:963.5px;top:582px;width:1px;height:4px;background:#3f3f3f;"></div>
<div class="a" style="left:965.5px;top:582px;width:1px;height:4px;background:#3f3f3f;"></div>
<div class="a" style="left:967.5px;top:582px;width:1px;height:4px;background:#3f3f3f;"></div>
<div class="a" style="left:969.5px;top:582px;width:1px;height:4px;background:#3f3f3f;"></div>
<div class="a" style="left:971.5px;top:582px;width:1px;height:4px;background:#3f3f3f;"></div>
<div class="a" style="left:973.5px;top:582px;width:1px;height:4px;background:#3f3f3f;"></div>
<div class="a" style="left:975.5px;top:582px;width:1px;height:4px;background:#3f3f3f;"></div>
<svg class="a" style="left:1112.6px;top:561px" width="11" height="11" viewBox="0 0 11 11"><rect x="0.5" y="0.5" width="10" height="10" fill="none" stroke="#dcdcdc" stroke-width="1"/><path d="M5.5 2.7 V8.3 M2.7 5.5 H8.3" stroke="#dcdcdc" stroke-width="1.1"/></svg>
<span class="t" style="top:62.86px;color:#dddddd;letter-spacing:-0.11px;font-size:11px;left:928px;">Size Jitter</span>
<div class="a" style="left:1086px;top:62px;width:58px;height:13.5px;background:#454545;border:1px solid #686868;"></div>
<span class="t" style="top:63.16px;color:#dddddd;letter-spacing:-0.45px;font-size:11px;left:1089.1px;">70%</span>
<div class="a" style="left:933px;top:84.0px;width:208px;height:3px;background:#747474;border-radius:.8px;"></div>
<svg class="a" style="left:1071.50px;top:85.90px" width="13" height="13" viewBox="0 0 13 13"><path d="M6.5 1.1 L11.5 7.2 V9.7 Q11.5 11.5 9.7 11.5 H3.3 Q1.5 11.5 1.5 9.7 V7.2 Z" fill="#f6f6f6" stroke="#262626" stroke-width="1" stroke-linejoin="round"/></svg>
<span class="t" style="top:104.86px;color:#dddddd;letter-spacing:-0.11px;font-size:11px;right:574.8px;">Control:</span>
<div class="a" style="left:994.1px;top:102.3px;width:84.6px;height:16.7px;background:#454545;border:1px solid #686868;border-radius:3px;"></div>
<span class="t" style="top:104.86px;color:#dddddd;letter-spacing:0px;font-size:11px;left:1002.3000000000001px;">Off</span>
<svg class="a" style="left:1069.7px;top:109.55px" width="8" height="6" viewBox="0 0 8 6"><path d="M0.9 1.4 L4 4.1 L7.1 1.4" fill="none" stroke="#dedede" stroke-width="1.15"/></svg>
<div class="a" style="left:1086px;top:104.3px;width:58px;height:13.4px;background:#4d4d4d;border:1px solid #626262;"></div>
<span class="t" style="top:126.86px;color:#dddddd;letter-spacing:-0.24px;font-size:11px;left:928px;">Minimum Diameter</span>
<div class="a" style="left:1086px;top:126.5px;width:58px;height:13.3px;background:#454545;border:1px solid #686868;"></div>
<span class="t" style="top:127.46px;color:#dddddd;letter-spacing:-0.45px;font-size:11px;left:1089.1px;">0%</span>
<div class="a" style="left:933px;top:148.0px;width:208px;height:3px;background:#747474;border-radius:.8px;"></div>
<svg class="a" style="left:924.50px;top:149.90px" width="13" height="13" viewBox="0 0 13 13"><path d="M6.5 1.1 L11.5 7.2 V9.7 Q11.5 11.5 9.7 11.5 H3.3 Q1.5 11.5 1.5 9.7 V7.2 Z" fill="#f6f6f6" stroke="#262626" stroke-width="1" stroke-linejoin="round"/></svg>
<span class="t" style="top:167.86px;color:#888888;letter-spacing:-0.19px;font-size:11px;left:928px;">Tilt Scale</span>
<div class="a" style="left:1086px;top:167px;width:58px;height:13.4px;background:#4d4d4d;border:1px solid #626262;"></div>
<div class="a" style="left:933px;top:189.0px;width:208px;height:3px;background:#747474;border-radius:.8px;"></div>
<div class="a" style="left:923px;top:207px;width:228px;height:1px;background:#444444;"></div>
<span class="t" style="top:214.86px;color:#dddddd;letter-spacing:-0.02px;font-size:11px;left:928px;">Angle Jitter</span>
<div class="a" style="left:1086px;top:214.2px;width:58px;height:13.4px;background:#454545;border:1px solid #686868;"></div>
<span class="t" style="top:215.26px;color:#dddddd;letter-spacing:-0.45px;font-size:11px;left:1089.1px;">6%</span>
<div class="a" style="left:933px;top:236.0px;width:208px;height:3px;background:#747474;border-radius:.8px;"></div>
<svg class="a" style="left:937.10px;top:237.90px" width="13" height="13" viewBox="0 0 13 13"><path d="M6.5 1.1 L11.5 7.2 V9.7 Q11.5 11.5 9.7 11.5 H3.3 Q1.5 11.5 1.5 9.7 V7.2 Z" fill="#f6f6f6" stroke="#262626" stroke-width="1" stroke-linejoin="round"/></svg>
<span class="t" style="top:256.66px;color:#dddddd;letter-spacing:-0.11px;font-size:11px;right:584.8px;">Control:</span>
<div class="a" style="left:984px;top:254.1px;width:94.7px;height:16.8px;background:#454545;border:1px solid #686868;border-radius:3px;"></div>
<span class="t" style="top:256.66px;color:#dddddd;letter-spacing:0px;font-size:11px;left:992.2px;">Off</span>
<svg class="a" style="left:1069.7px;top:261.4px" width="8" height="6" viewBox="0 0 8 6"><path d="M0.9 1.4 L4 4.1 L7.1 1.4" fill="none" stroke="#dedede" stroke-width="1.15"/></svg>
<div class="a" style="left:1086px;top:256.3px;width:58px;height:13.2px;background:#4d4d4d;border:1px solid #626262;"></div>
<div class="a" style="left:923px;top:277.3px;width:228px;height:1px;background:#444444;"></div>
<span class="t" style="top:285.06px;color:#dddddd;letter-spacing:-0.15px;font-size:11px;left:928px;">Roundness Jitter</span>
<div class="a" style="left:1086px;top:284.5px;width:58px;height:13.2px;background:#454545;border:1px solid #686868;"></div>
<span class="t" style="top:285.36px;color:#dddddd;letter-spacing:-0.45px;font-size:11px;left:1089.1px;">0%</span>
<div class="a" style="left:933px;top:306.1px;width:208px;height:3px;background:#747474;border-radius:.8px;"></div>
<svg class="a" style="left:924.50px;top:308.00px" width="13" height="13" viewBox="0 0 13 13"><path d="M6.5 1.1 L11.5 7.2 V9.7 Q11.5 11.5 9.7 11.5 H3.3 Q1.5 11.5 1.5 9.7 V7.2 Z" fill="#f6f6f6" stroke="#262626" stroke-width="1" stroke-linejoin="round"/></svg>
<span class="t" style="top:326.56px;color:#dddddd;letter-spacing:-0.11px;font-size:11px;right:574px;">Control:</span>
<div class="a" style="left:995px;top:324px;width:83.7px;height:16.8px;background:#454545;border:1px solid #686868;border-radius:3px;"></div>
<span class="t" style="top:326.56px;color:#dddddd;letter-spacing:0px;font-size:11px;left:1003.2px;">Off</span>
<svg class="a" style="left:1069.7px;top:331.29999999999995px" width="8" height="6" viewBox="0 0 8 6"><path d="M0.9 1.4 L4 4.1 L7.1 1.4" fill="none" stroke="#dedede" stroke-width="1.15"/></svg>
<div class="a" style="left:1086px;top:326.4px;width:58px;height:13.2px;background:#4d4d4d;border:1px solid #626262;"></div>
<span class="t" style="top:348.56px;color:#888888;letter-spacing:-0.35px;font-size:11px;left:928px;">Minimum Roundness</span>
<div class="a" style="left:1086px;top:348.8px;width:58px;height:13px;background:#4d4d4d;border:1px solid #626262;"></div>
<div class="a" style="left:933px;top:369.9px;width:208px;height:3px;background:#747474;border-radius:.8px;"></div>
<svg class="a" style="left:923px;top:389.7px" width="10" height="10" viewBox="0 0 10 10"><rect x="0.5" y="0.5" width="9" height="9" rx="2" fill="#454545" stroke="#858585" stroke-width="1"/></svg>
<span class="t" style="top:387.76px;color:#dddddd;letter-spacing:-0.09px;font-size:11px;left:937.5px;">Flip X Jitter</span>
<svg class="a" style="left:1037.3px;top:389.7px" width="10" height="10" viewBox="0 0 10 10"><rect x="0.5" y="0.5" width="9" height="9" rx="2" fill="#454545" stroke="#858585" stroke-width="1"/></svg>
<span class="t" style="top:387.76px;color:#dddddd;letter-spacing:-0.07px;font-size:11px;left:1051.5px;">Flip Y Jitter</span>
<svg class="a" style="left:923px;top:406.7px" width="10" height="10" viewBox="0 0 10 10"><rect x="0.5" y="0.5" width="9" height="9" rx="2" fill="#454545" stroke="#858585" stroke-width="1"/></svg>
<span class="t" style="top:404.66px;color:#dddddd;letter-spacing:-0.13px;font-size:11px;left:937.5px;">Brush Projection</span>
<svg class="a" style="left:787px;top:449px;overflow:hidden" width="360" height="100" viewBox="787 449 360 100"><g filter="url(#b2)">
<g transform="translate(820.90 498.90) rotate(22) scale(0.31)"><use href="#bf"/><path d="M11.5 -1.8 L5.3 7.5" stroke="#696969" stroke-width="2.00" stroke-linecap="round" fill="none"/><path d="M10.3 -3.4 L13.2 -2.2 L8.6 3.2 Z" fill="#696969"/></g>
<g transform="translate(840.60 492.50) rotate(-5) scale(0.485)"><use href="#bf"/><path d="M11.5 -1.8 L5.3 7.5" stroke="#696969" stroke-width="1.75" stroke-linecap="round" fill="none"/><path d="M10.3 -3.4 L13.2 -2.2 L8.6 3.2 Z" fill="#696969"/></g>
<g transform="translate(874.50 485.70) rotate(12) scale(0.64)"><use href="#bf"/><path d="M11.5 -1.8 L5.3 7.5" stroke="#696969" stroke-width="1.33" stroke-linecap="round" fill="none"/><path d="M10.3 -3.4 L13.2 -2.2 L8.6 3.2 Z" fill="#696969"/></g>
<g transform="translate(919.70 486.20) rotate(1.5) scale(0.945)"><use href="#bf"/><path d="M11.5 -1.8 L5.3 7.5" stroke="#696969" stroke-width="0.90" stroke-linecap="round" fill="none"/><path d="M10.3 -3.4 L13.2 -2.2 L8.6 3.2 Z" fill="#696969"/></g>
<g transform="translate(983.40 503.80) rotate(-13) scale(0.96)"><use href="#bf"/><path d="M11.5 -1.8 L5.3 7.5" stroke="#696969" stroke-width="0.89" stroke-linecap="round" fill="none"/><path d="M10.3 -3.4 L13.2 -2.2 L8.6 3.2 Z" fill="#696969"/></g>
<g transform="translate(1048.80 512.60) rotate(-13.5) scale(0.61)"><use href="#bf"/><path d="M11.5 -1.8 L5.3 7.5" stroke="#696969" stroke-width="1.39" stroke-linecap="round" fill="none"/><path d="M10.3 -3.4 L13.2 -2.2 L8.6 3.2 Z" fill="#696969"/></g>
<g transform="translate(1091.10 505.50) rotate(6) scale(0.375)"><use href="#bf"/><path d="M11.5 -1.8 L5.3 7.5" stroke="#696969" stroke-width="2.00" stroke-linecap="round" fill="none"/><path d="M10.3 -3.4 L13.2 -2.2 L8.6 3.2 Z" fill="#696969"/></g>
</g></svg>
<div class="a" style="left:1173.1px;top:9px;width:371.9px;height:579.1px;background:#535353;border-radius:4px 4px 0 0;box-shadow:0 1px 5px rgba(0,0,0,.55),0 0 0 1px rgba(30,30,30,.55);"></div>
<div class="a" style="left:1173.1px;top:9px;width:371.9px;height:13px;background:#464646;border-radius:4px 4px 0 0;"></div>
<div class="a" style="left:1173.1px;top:22px;width:371.9px;height:1px;background:#383838;"></div>
<div class="a" style="left:1173.1px;top:23px;width:371.9px;height:28.0px;background:#424242;"></div>
<div class="a" style="left:1173.1px;top:23px;width:93.9px;height:28.0px;background:#535353;"></div>
<div class="a" style="left:1267px;top:23px;width:1px;height:28.0px;background:#3a3a3a;"></div>
<span class="t" style="top:30.06px;color:#f0f0f0;letter-spacing:-0.3px;font-size:11px;font-weight:bold;left:1183.3px;-webkit-text-stroke:0;word-spacing:-0.6px;">Brush Settings</span>
<svg class="a" style="left:1178.8px;top:13.9px" width="6.4" height="6.4" viewBox="0 0 6.4 6.4"><path d="M0.7 0.7 L5.7 5.7 M5.7 0.7 L0.7 5.7" stroke="#a4a4a4" stroke-width="1.9" stroke-linecap="square" fill="none"/></svg>
<svg class="a" style="left:1530px;top:14.1px" width="7.9" height="5.3" viewBox="0 0 9 6"><path d="M3.6 0.4 L0.9 3 L3.6 5.6 M7.9 0.4 L5.2 3 L7.9 5.6" stroke="#d8d8d8" stroke-width="1.3" fill="none"/></svg>
<div class="a" style="left:1529px;top:33px;width:10px;height:1px;background:#c4c4c4;"></div>
<div class="a" style="left:1529px;top:35px;width:10px;height:1px;background:#c4c4c4;"></div>
<div class="a" style="left:1529px;top:37px;width:10px;height:1px;background:#c4c4c4;"></div>
<div class="a" style="left:1529px;top:39px;width:10px;height:1px;background:#c4c4c4;"></div>
<div class="a" style="left:1215.6px;top:61.8px;width:57.2px;height:21px;background:#454545;border:1px solid #676767;border-radius:3.5px;"></div>
<span class="t" style="top:66.97px;color:#dddddd;letter-spacing:-0.4px;font-size:11.3px;left:1215.6px;width:59px;text-align:center;">Brushes</span>
<div class="a" style="left:1180px;top:94.5px;width:129px;height:247.5px;background:transparent;border:1px solid #474747;"></div>
<span class="t" style="top:98.06px;color:#dddddd;letter-spacing:-0.18px;font-size:11px;left:1181.0px;width:128px;text-align:center;">Brush Tip Shape</span>
<div class="a" style="left:1181px;top:113.5px;width:128px;height:1px;background:#474747;"></div>
<svg class="a" style="left:1191px;top:118.5px" width="10" height="10" viewBox="0 0 10 10"><rect x="0" y="0" width="10" height="10" rx="2" fill="#d9d9d9"/><path d="M2.2 5.1 L4.2 7.2 L7.9 2.7" fill="none" stroke="#222" stroke-width="1.7" stroke-linecap="butt" stroke-linejoin="miter"/></svg>
<span class="t" style="top:117.06px;color:#dddddd;letter-spacing:-0.28px;font-size:11px;left:1205px;">Shape Dynamics</span>
<svg class="a" style="left:1292px;top:117px" width="12" height="13" viewBox="0 0 12 13"><path d="M3 5 V3.3 A2.65 2.65 0 0 1 8.25 2.7" fill="none" stroke="#dadada" stroke-width="1.05"/><rect x="1.4" y="5.1" width="9.3" height="6.5" fill="none" stroke="#dadada" stroke-width="1.05"/><rect x="5.05" y="7.4" width="2" height="2" rx=".5" fill="#e6e6e6"/></svg>
<div class="a" style="left:1181px;top:133px;width:128px;height:19px;background:#6b6b6b;"></div>
<div class="a" style="left:1181px;top:132.5px;width:128px;height:1px;background:#474747;"></div>
<svg class="a" style="left:1191px;top:137.5px" width="10" height="10" viewBox="0 0 10 10"><rect x="0" y="0" width="10" height="10" rx="2" fill="#d9d9d9"/><path d="M2.2 5.1 L4.2 7.2 L7.9 2.7" fill="none" stroke="#222" stroke-width="1.7" stroke-linecap="butt" stroke-linejoin="miter"/></svg>
<span class="t" style="top:136.06px;color:#dddddd;letter-spacing:-0.05px;font-size:11px;left:1205px;">Scattering</span>
<svg class="a" style="left:1292px;top:136px" width="12" height="13" viewBox="0 0 12 13"><path d="M3 5 V3.3 A2.65 2.65 0 0 1 8.25 2.7" fill="none" stroke="#dadada" stroke-width="1.05"/><rect x="1.4" y="5.1" width="9.3" height="6.5" fill="none" stroke="#dadada" stroke-width="1.05"/><rect x="5.05" y="7.4" width="2" height="2" rx=".5" fill="#e6e6e6"/></svg>
<div class="a" style="left:1181px;top:151.5px;width:128px;height:1px;background:#474747;"></div>
<svg class="a" style="left:1191px;top:156.5px" width="10" height="10" viewBox="0 0 10 10"><rect x="0.5" y="0.5" width="9" height="9" rx="2" fill="#454545" stroke="#858585" stroke-width="1"/></svg>
<span class="t" style="top:155.06px;color:#dddddd;letter-spacing:-0.29px;font-size:11px;left:1205px;">Texture</span>
<svg class="a" style="left:1292px;top:155px" width="12" height="13" viewBox="0 0 12 13"><path d="M3 5 V3.3 A2.65 2.65 0 0 1 8.25 2.7" fill="none" stroke="#dadada" stroke-width="1.05"/><rect x="1.4" y="5.1" width="9.3" height="6.5" fill="none" stroke="#dadada" stroke-width="1.05"/><rect x="5.05" y="7.4" width="2" height="2" rx=".5" fill="#e6e6e6"/></svg>
<div class="a" style="left:1181px;top:170.5px;width:128px;height:1px;background:#474747;"></div>
<svg class="a" style="left:1191px;top:175.5px" width="10" height="10" viewBox="0 0 10 10"><rect x="0.5" y="0.5" width="9" height="9" rx="2" fill="#454545" stroke="#858585" stroke-width="1"/></svg>
<span class="t" style="top:174.06px;color:#dddddd;letter-spacing:-0.29px;font-size:11px;left:1205px;">Dual Brush</span>
<svg class="a" style="left:1292px;top:174px" width="12" height="13" viewBox="0 0 12 13"><path d="M3 5 V3.3 A2.65 2.65 0 0 1 8.25 2.7" fill="none" stroke="#dadada" stroke-width="1.05"/><rect x="1.4" y="5.1" width="9.3" height="6.5" fill="none" stroke="#dadada" stroke-width="1.05"/><rect x="5.05" y="7.4" width="2" height="2" rx=".5" fill="#e6e6e6"/></svg>
<div class="a" style="left:1181px;top:189.5px;width:128px;height:1px;background:#474747;"></div>
<svg class="a" style="left:1191px;top:194.5px" width="10" height="10" viewBox="0 0 10 10"><rect x="0.5" y="0.5" width="9" height="9" rx="2" fill="#454545" stroke="#858585" stroke-width="1"/></svg>
<span class="t" style="top:193.06px;color:#dddddd;letter-spacing:-0.24px;font-size:11px;left:1205px;">Color Dynamics</span>
<svg class="a" style="left:1292px;top:193px" width="12" height="13" viewBox="0 0 12 13"><path d="M3 5 V3.3 A2.65 2.65 0 0 1 8.25 2.7" fill="none" stroke="#dadada" stroke-width="1.05"/><rect x="1.4" y="5.1" width="9.3" height="6.5" fill="none" stroke="#dadada" stroke-width="1.05"/><rect x="5.05" y="7.4" width="2" height="2" rx=".5" fill="#e6e6e6"/></svg>
<div class="a" style="left:1181px;top:208.5px;width:128px;height:1px;background:#474747;"></div>
<svg class="a" style="left:1191px;top:213.5px" width="10" height="10" viewBox="0 0 10 10"><rect x="0.5" y="0.5" width="9" height="9" rx="2" fill="#454545" stroke="#858585" stroke-width="1"/></svg>
<span class="t" style="top:212.06px;color:#dddddd;letter-spacing:-0.25px;font-size:11px;left:1205px;">Transfer</span>
<svg class="a" style="left:1292px;top:212px" width="12" height="13" viewBox="0 0 12 13"><path d="M3 5 V3.3 A2.65 2.65 0 0 1 8.25 2.7" fill="none" stroke="#dadada" stroke-width="1.05"/><rect x="1.4" y="5.1" width="9.3" height="6.5" fill="none" stroke="#dadada" stroke-width="1.05"/><rect x="5.05" y="7.4" width="2" height="2" rx=".5" fill="#e6e6e6"/></svg>
<div class="a" style="left:1181px;top:227.5px;width:128px;height:1px;background:#474747;"></div>
<svg class="a" style="left:1191px;top:232.5px" width="10" height="10" viewBox="0 0 10 10"><rect x="0.5" y="0.5" width="9" height="9" rx="2" fill="#454545" stroke="#858585" stroke-width="1"/></svg>
<span class="t" style="top:231.06px;color:#dddddd;letter-spacing:-0.39px;font-size:11px;left:1205px;">Brush Pose</span>
<svg class="a" style="left:1292px;top:231px" width="12" height="13" viewBox="0 0 12 13"><path d="M3 5 V3.3 A2.65 2.65 0 0 1 8.25 2.7" fill="none" stroke="#dadada" stroke-width="1.05"/><rect x="1.4" y="5.1" width="9.3" height="6.5" fill="none" stroke="#dadada" stroke-width="1.05"/><rect x="5.05" y="7.4" width="2" height="2" rx=".5" fill="#e6e6e6"/></svg>
<div class="a" style="left:1181px;top:246.5px;width:128px;height:1px;background:#474747;"></div>
<svg class="a" style="left:1191px;top:251.5px" width="10" height="10" viewBox="0 0 10 10"><rect x="0.5" y="0.5" width="9" height="9" rx="2" fill="#454545" stroke="#858585" stroke-width="1"/></svg>
<span class="t" style="top:250.06px;color:#dddddd;letter-spacing:-0.33px;font-size:11px;left:1205px;">Noise</span>
<svg class="a" style="left:1292px;top:250px" width="12" height="13" viewBox="0 0 12 13"><path d="M3 5 V3.3 A2.65 2.65 0 0 1 8.25 2.7" fill="none" stroke="#dadada" stroke-width="1.05"/><rect x="1.4" y="5.1" width="9.3" height="6.5" fill="none" stroke="#dadada" stroke-width="1.05"/><rect x="5.05" y="7.4" width="2" height="2" rx=".5" fill="#e6e6e6"/></svg>
<svg class="a" style="left:1191px;top:270.5px" width="10" height="10" viewBox="0 0 10 10"><rect x="0.5" y="0.5" width="9" height="9" rx="2" fill="#454545" stroke="#858585" stroke-width="1"/></svg>
<span class="t" style="top:269.06px;color:#dddddd;letter-spacing:-0.38px;font-size:11px;left:1205px;">Wet Edges</span>
<svg class="a" style="left:1292px;top:269px" width="12" height="13" viewBox="0 0 12 13"><path d="M3 5 V3.3 A2.65 2.65 0 0 1 8.25 2.7" fill="none" stroke="#dadada" stroke-width="1.05"/><rect x="1.4" y="5.1" width="9.3" height="6.5" fill="none" stroke="#dadada" stroke-width="1.05"/><rect x="5.05" y="7.4" width="2" height="2" rx=".5" fill="#e6e6e6"/></svg>
<svg class="a" style="left:1191px;top:289.5px" width="10" height="10" viewBox="0 0 10 10"><rect x="0.5" y="0.5" width="9" height="9" rx="2" fill="#454545" stroke="#858585" stroke-width="1"/></svg>
<span class="t" style="top:288.06px;color:#dddddd;letter-spacing:0.01px;font-size:11px;left:1205px;">Build-up</span>
<svg class="a" style="left:1292px;top:288px" width="12" height="13" viewBox="0 0 12 13"><path d="M3 5 V3.3 A2.65 2.65 0 0 1 8.25 2.7" fill="none" stroke="#dadada" stroke-width="1.05"/><rect x="1.4" y="5.1" width="9.3" height="6.5" fill="none" stroke="#dadada" stroke-width="1.05"/><rect x="5.05" y="7.4" width="2" height="2" rx=".5" fill="#e6e6e6"/></svg>
<svg class="a" style="left:1191px;top:308.5px" width="10" height="10" viewBox="0 0 10 10"><rect x="0.5" y="0.5" width="9" height="9" rx="2" fill="#454545" stroke="#858585" stroke-width="1"/></svg>
<span class="t" style="top:307.06px;color:#dddddd;letter-spacing:-0.17px;font-size:11px;left:1205px;">Smoothing</span>
<svg class="a" style="left:1292px;top:307px" width="12" height="13" viewBox="0 0 12 13"><path d="M3 5 V3.3 A2.65 2.65 0 0 1 8.25 2.7" fill="none" stroke="#dadada" stroke-width="1.05"/><rect x="1.4" y="5.1" width="9.3" height="6.5" fill="none" stroke="#dadada" stroke-width="1.05"/><rect x="5.05" y="7.4" width="2" height="2" rx=".5" fill="#e6e6e6"/></svg>
<svg class="a" style="left:1191px;top:327.5px" width="10" height="10" viewBox="0 0 10 10"><rect x="0.5" y="0.5" width="9" height="9" rx="2" fill="#454545" stroke="#858585" stroke-width="1"/></svg>
<span class="t" style="top:326.06px;color:#dddddd;letter-spacing:-0.05px;font-size:11px;left:1205px;">Protect Texture</span>
<svg class="a" style="left:1292px;top:326px" width="12" height="13" viewBox="0 0 12 13"><path d="M3 5 V3.3 A2.65 2.65 0 0 1 8.25 2.7" fill="none" stroke="#dadada" stroke-width="1.05"/><rect x="1.4" y="5.1" width="9.3" height="6.5" fill="none" stroke="#dadada" stroke-width="1.05"/><rect x="5.05" y="7.4" width="2" height="2" rx=".5" fill="#e6e6e6"/></svg>
<div class="a" style="left:1179px;top:449px;width:360px;height:100px;background:#696969;"></div>
<div class="a" style="left:1173.1px;top:554px;width:371.9px;height:1px;background:#3d3d3d;"></div>
<div class="a" style="left:1173.1px;top:579px;width:371.9px;height:2px;background:#3b3b3b;"></div>
<div class="a" style="left:1173.1px;top:581px;width:371.9px;height:7.1px;background:#4f4f4f;"></div>
<div class="a" style="left:1349.5px;top:582px;width:1px;height:4px;background:#3f3f3f;"></div>
<div class="a" style="left:1351.5px;top:582px;width:1px;height:4px;background:#3f3f3f;"></div>
<div class="a" style="left:1353.5px;top:582px;width:1px;height:4px;background:#3f3f3f;"></div>
<div class="a" style="left:1355.5px;top:582px;width:1px;height:4px;background:#3f3f3f;"></div>
<div class="a" style="left:1357.5px;top:582px;width:1px;height:4px;background:#3f3f3f;"></div>
<div class="a" style="left:1359.5px;top:582px;width:1px;height:4px;background:#3f3f3f;"></div>
<div class="a" style="left:1361.5px;top:582px;width:1px;height:4px;background:#3f3f3f;"></div>
<div class="a" style="left:1363.5px;top:582px;width:1px;height:4px;background:#3f3f3f;"></div>
<div class="a" style="left:1365.5px;top:582px;width:1px;height:4px;background:#3f3f3f;"></div>
<div class="a" style="left:1367.5px;top:582px;width:1px;height:4px;background:#3f3f3f;"></div>
<svg class="a" style="left:1504.6px;top:561px" width="11" height="11" viewBox="0 0 11 11"><rect x="0.5" y="0.5" width="10" height="10" fill="none" stroke="#dcdcdc" stroke-width="1"/><path d="M5.5 2.7 V8.3 M2.7 5.5 H8.3" stroke="#dcdcdc" stroke-width="1.1"/></svg>
<span class="t" style="top:62.86px;color:#dddddd;letter-spacing:-0.13px;font-size:11px;left:1320px;">Scatter</span>
<svg class="a" style="left:1384px;top:64.8px" width="10" height="10" viewBox="0 0 10 10"><rect x="0.5" y="0.5" width="9" height="9" rx="2" fill="#454545" stroke="#858585" stroke-width="1"/></svg>
<span class="t" style="top:62.86px;color:#dddddd;letter-spacing:-0.37px;font-size:11px;left:1398.5px;">Both Axes</span>
<div class="a" style="left:1478px;top:62px;width:58px;height:13.5px;background:#454545;border:1px solid #686868;"></div>
<span class="t" style="top:63.16px;color:#dddddd;letter-spacing:-0.45px;font-size:11px;left:1481.1px;">86%</span>
<div class="a" style="left:1325px;top:84.0px;width:208px;height:3px;background:#747474;border-radius:.8px;"></div>
<svg class="a" style="left:1334.56px;top:85.90px" width="13" height="13" viewBox="0 0 13 13"><path d="M6.5 1.1 L11.5 7.2 V9.7 Q11.5 11.5 9.7 11.5 H3.3 Q1.5 11.5 1.5 9.7 V7.2 Z" fill="#f6f6f6" stroke="#262626" stroke-width="1" stroke-linejoin="round"/></svg>
<span class="t" style="top:104.86px;color:#dddddd;letter-spacing:-0.11px;font-size:11px;right:182.79999999999995px;">Control:</span>
<div class="a" style="left:1386.1px;top:102.3px;width:84.6px;height:16.7px;background:#454545;border:1px solid #686868;border-radius:3px;"></div>
<span class="t" style="top:104.86px;color:#dddddd;letter-spacing:0px;font-size:11px;left:1394.3px;">Off</span>
<svg class="a" style="left:1461.6999999999998px;top:109.55px" width="8" height="6" viewBox="0 0 8 6"><path d="M0.9 1.4 L4 4.1 L7.1 1.4" fill="none" stroke="#dedede" stroke-width="1.15"/></svg>
<div class="a" style="left:1478px;top:104.3px;width:58px;height:13.4px;background:#4d4d4d;border:1px solid #626262;"></div>
<div class="a" style="left:1315px;top:125.3px;width:228px;height:1px;background:#444444;"></div>
<span class="t" style="top:132.66px;color:#dddddd;letter-spacing:-0.3px;font-size:11px;left:1320px;">Count</span>
<div class="a" style="left:1478px;top:132.4px;width:58px;height:13.2px;background:#454545;border:1px solid #686868;"></div>
<span class="t" style="top:133.26px;color:#dddddd;letter-spacing:-0.45px;font-size:11px;left:1481.1px;">1</span>
<div class="a" style="left:1325px;top:154.0px;width:208px;height:3px;background:#747474;border-radius:.8px;"></div>
<svg class="a" style="left:1316.50px;top:156.00px" width="13" height="13" viewBox="0 0 13 13"><path d="M6.5 1.1 L11.5 7.2 V9.7 Q11.5 11.5 9.7 11.5 H3.3 Q1.5 11.5 1.5 9.7 V7.2 Z" fill="#f6f6f6" stroke="#262626" stroke-width="1" stroke-linejoin="round"/></svg>
<span class="t" style="top:173.86px;color:#dddddd;letter-spacing:-0.03px;font-size:11px;left:1320px;">Count Jitter</span>
<div class="a" style="left:1478px;top:173.6px;width:58px;height:13.2px;background:#454545;border:1px solid #686868;"></div>
<span class="t" style="top:174.46px;color:#dddddd;letter-spacing:-0.45px;font-size:11px;left:1481.1px;">0%</span>
<div class="a" style="left:1325px;top:195.2px;width:208px;height:3px;background:#747474;border-radius:.8px;"></div>
<svg class="a" style="left:1316.50px;top:197.10px" width="13" height="13" viewBox="0 0 13 13"><path d="M6.5 1.1 L11.5 7.2 V9.7 Q11.5 11.5 9.7 11.5 H3.3 Q1.5 11.5 1.5 9.7 V7.2 Z" fill="#f6f6f6" stroke="#262626" stroke-width="1" stroke-linejoin="round"/></svg>
<span class="t" style="top:215.56px;color:#dddddd;letter-spacing:-0.11px;font-size:11px;right:182.79999999999995px;">Control:</span>
<div class="a" style="left:1386.1px;top:213px;width:84.6px;height:16.8px;background:#454545;border:1px solid #686868;border-radius:3px;"></div>
<span class="t" style="top:215.56px;color:#dddddd;letter-spacing:0px;font-size:11px;left:1394.3px;">Off</span>
<svg class="a" style="left:1461.6999999999998px;top:220.3px" width="8" height="6" viewBox="0 0 8 6"><path d="M0.9 1.4 L4 4.1 L7.1 1.4" fill="none" stroke="#dedede" stroke-width="1.15"/></svg>
<div class="a" style="left:1478px;top:215.6px;width:58px;height:13.2px;background:#4d4d4d;border:1px solid #626262;"></div>
<div class="a" style="left:1179px;top:449px;width:360px;height:100px;overflow:hidden">
</div>
<svg class="a" style="left:1179px;top:449px;overflow:hidden" width="360" height="100" viewBox="1179 449 360 100"><g filter="url(#b2)">
<g transform="translate(1212.90 499.00) rotate(22) scale(0.31)"><use href="#bf"/><path d="M11.5 -1.8 L5.3 7.5" stroke="#696969" stroke-width="2.00" stroke-linecap="round" fill="none"/><path d="M10.3 -3.4 L13.2 -2.2 L8.6 3.2 Z" fill="#696969"/></g>
<g transform="translate(1234.70 501.70) rotate(-5) scale(0.485)"><use href="#bf"/><path d="M11.5 -1.8 L5.3 7.5" stroke="#696969" stroke-width="1.75" stroke-linecap="round" fill="none"/><path d="M10.3 -3.4 L13.2 -2.2 L8.6 3.2 Z" fill="#696969"/></g>
<g transform="translate(1267.50 492.40) rotate(12) scale(0.64)"><use href="#bf"/><path d="M11.5 -1.8 L5.3 7.5" stroke="#696969" stroke-width="1.33" stroke-linecap="round" fill="none"/><path d="M10.3 -3.4 L13.2 -2.2 L8.6 3.2 Z" fill="#696969"/></g>
<g transform="translate(1314.70 469.60) rotate(1.5) scale(0.945)"><use href="#bf"/><path d="M11.5 -1.8 L5.3 7.5" stroke="#696969" stroke-width="0.90" stroke-linecap="round" fill="none"/><path d="M10.3 -3.4 L13.2 -2.2 L8.6 3.2 Z" fill="#696969"/></g>
<g transform="translate(1372.00 516.20) rotate(-13) scale(0.96)"><use href="#bf"/><path d="M11.5 -1.8 L5.3 7.5" stroke="#696969" stroke-width="0.89" stroke-linecap="round" fill="none"/><path d="M10.3 -3.4 L13.2 -2.2 L8.6 3.2 Z" fill="#696969"/></g>
<g transform="translate(1440.60 513.30) rotate(-13.5) scale(0.61)"><use href="#bf"/><path d="M11.5 -1.8 L5.3 7.5" stroke="#696969" stroke-width="1.39" stroke-linecap="round" fill="none"/><path d="M10.3 -3.4 L13.2 -2.2 L8.6 3.2 Z" fill="#696969"/></g>
<g transform="translate(1484.60 510.50) rotate(6) scale(0.375)"><use href="#bf"/><path d="M11.5 -1.8 L5.3 7.5" stroke="#696969" stroke-width="2.00" stroke-linecap="round" fill="none"/><path d="M10.3 -3.4 L13.2 -2.2 L8.6 3.2 Z" fill="#696969"/></g>
</g></svg>
</body></html>
